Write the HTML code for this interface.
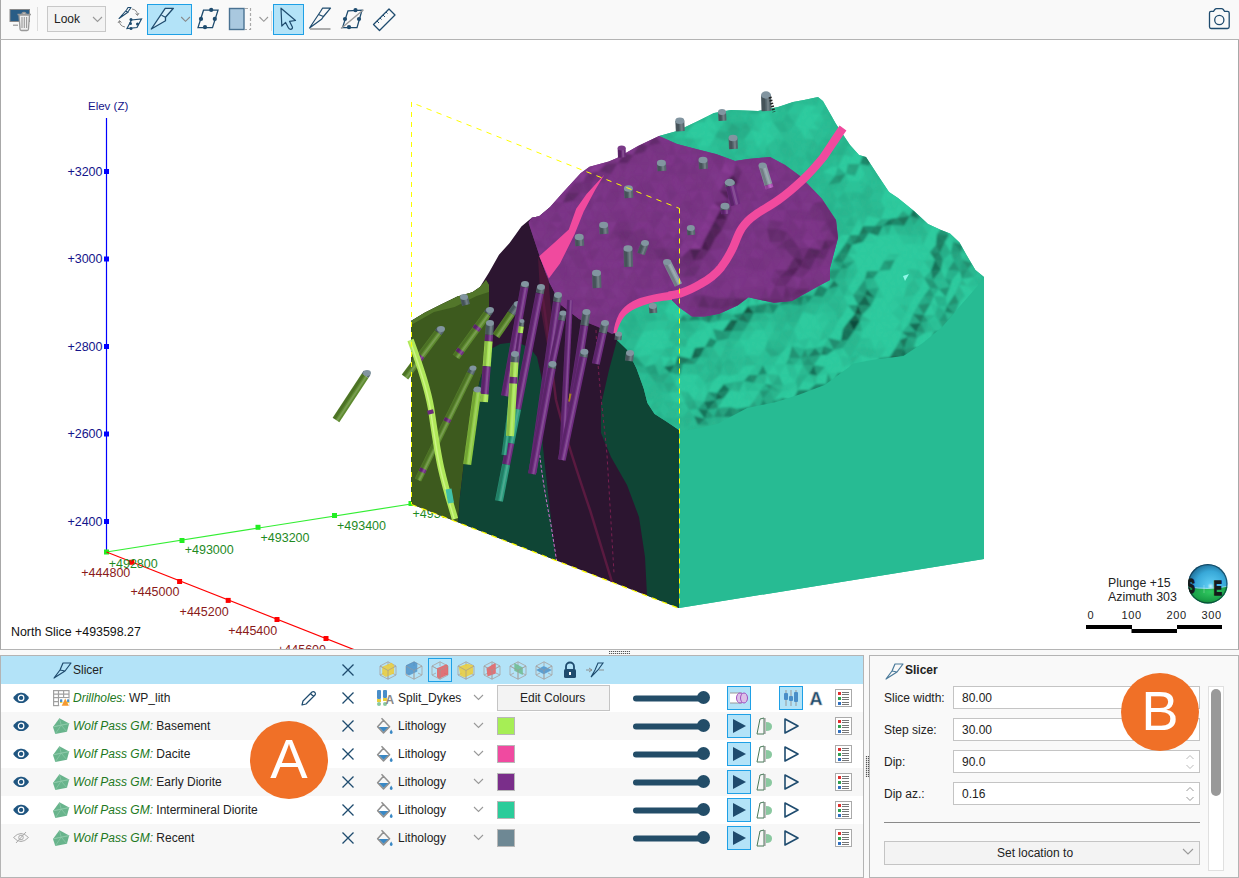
<!DOCTYPE html>
<html><head><meta charset="utf-8">
<style>
*{box-sizing:border-box;margin:0;padding:0}
html,body{width:1239px;height:878px;overflow:hidden;background:#f9f9f9;font-family:"Liberation Sans",sans-serif;font-size:12px;color:#222}
.abs{position:absolute}
svg{display:block}
.t{position:absolute;white-space:nowrap;line-height:1}
.it{font-style:italic;color:#217821}
</style></head><body>
<div class="abs" style="left:0;top:0;width:1239px;height:39px;background:#f9f9f9;border-left:1px solid #a8a8a8"></div>
<div class="abs" style="left:0;top:39px;width:1239px;height:1px;background:#b4b4b4"></div>
<svg class="abs" style="left:8px;top:8px" width="25" height="25" viewBox="8 8 25 25"><rect x="10" y="9.5" width="19.5" height="12" fill="#2a5d86" stroke="#8a8a8a" stroke-width="1"/><rect x="13" y="24.5" width="5" height="1.5" fill="#aaa"/><path d="M17.5,14.5 H31 M19,15 L20,29 Q20,30.5 21.5,30.5 H27 Q28.5,30.5 28.5,29 L29.5,15 Z M22,14.5 Q22,12.5 24,12.5 Q26,12.5 26,14.5" fill="#eee" stroke="#999" stroke-width="1.3"/><path d="M22,17 V28 M24.3,17 V28 M26.6,17 V28" stroke="#999" stroke-width="1.1"/></svg>
<div class="abs" style="left:37px;top:7px;width:1px;height:24px;background:#dcdcdc"></div>
<div class="abs" style="left:47px;top:6px;width:59px;height:26px;background:#f3f3f3;border:1px solid #c8c8c8"></div>
<div class="t" style="left:54px;top:12.5px;font-size:12px;color:#222">Look</div>
<svg class="abs" style="left:90px;top:14px" width="14" height="10" viewBox="90 14 14 10"><path d="M93,17 L97.5,21.5 L102,17" fill="none" stroke="#999" stroke-width="1.1"/></svg>
<svg class="abs" style="left:116px;top:5px" width="28" height="28" viewBox="116 5 28 28"><path d="M119,18.5 L126.5,10 L128,7.5 L131,7.5 L127.5,12.5 Z M125.5,11 L128.5,12.5" fill="none" stroke="#1e4b6e" stroke-width="1.1" stroke-linejoin="round"/><path d="M127,28.5 L131.5,20 L141.5,19 L137,27.5 Z" fill="none" stroke="#1e4b6e" stroke-width="1.2"/><circle cx="131" cy="19.5" r="1.5" fill="#1e4b6e"/><circle cx="130.5" cy="23.5" r="1.5" fill="#1e4b6e"/><circle cx="137.5" cy="24" r="1.5" fill="#1e4b6e"/><circle cx="131" cy="28.5" r="1.5" fill="#1e4b6e"/><path d="M132,9 Q137,9.5 137.5,15 M135.5,13.5 L137.5,15.5 L139,13 M125,27 Q119.5,26 119.5,21 M118,23 L119.5,20.5 L121.5,22.5" fill="none" stroke="#888" stroke-width="1"/></svg>
<div class="abs" style="left:147px;top:4px;width:45px;height:31px;background:#b3e3f8;border:1px solid #1ea0e6"></div>
<svg class="abs" style="left:148px;top:5px" width="43" height="29" viewBox="148 5 43 29"><path d="M151.3,29 L165.2,8.3 L173.4,8.3 L165.5,17.3 L165.5,20.8 Z" fill="#d4eefa" stroke="#1e4b6e" stroke-width="1.3" stroke-linejoin="round"/><path d="M161.5,15.3 L165.5,17.3" stroke="#1e4b6e" stroke-width="1.2"/><path d="M181.2,17 L185.5,21.3 L189.9,17" fill="none" stroke="#888" stroke-width="1.1"/></svg>
<svg class="abs" style="left:194px;top:5px" width="28" height="28" viewBox="194 5 28 28"><path d="M198,27.6 L203.5,10.2 L218,10.2 L212.5,27.6 Z" fill="none" stroke="#1e4b6e" stroke-width="1.3"/><circle cx="211.2" cy="9.9" r="2.1" fill="#1e4b6e"/><circle cx="201" cy="18.9" r="2.1" fill="#1e4b6e"/><circle cx="214.8" cy="18.9" r="2.1" fill="#1e4b6e"/><circle cx="205" cy="27.2" r="2.1" fill="#1e4b6e"/></svg>
<svg class="abs" style="left:226px;top:6px" width="46" height="28" viewBox="226 6 46 28"><rect x="229.5" y="8.5" width="14.5" height="21" fill="#a9c8df" stroke="#4a7292" stroke-width="1.4"/><path d="M245,8.5 H250.5 V29.5 H245" fill="none" stroke="#aaa" stroke-width="1.2" stroke-dasharray="3,2"/><path d="M259.5,17 L263.8,21.3 L268,17" fill="none" stroke="#999" stroke-width="1.1"/></svg>
<div class="abs" style="left:271px;top:11px;width:1px;height:20px;background:#dcdcdc"></div>
<div class="abs" style="left:273px;top:4px;width:31px;height:31px;background:#b3e3f8;border:1px solid #1ea0e6"></div>
<svg class="abs" style="left:274px;top:5px" width="29" height="29" viewBox="274 5 29 29"><path d="M281,8.2 L295.5,20.5 L289.5,21.3 L292.5,27.3 Q292.5,29.3 290.5,29.3 Q289,29.3 288.2,27.5 L285.6,22.4 L281.8,26 Z" fill="none" stroke="#1e4b6e" stroke-width="1.2" stroke-linejoin="round"/></svg>
<svg class="abs" style="left:306px;top:5px" width="28" height="28" viewBox="306 5 28 28"><path d="M309.5,28 L320.5,11.5 L322.5,8.2 L330.5,8.2 L323.5,16.5 L321.5,19.3 Z M318.5,14.5 L323.5,16.5" fill="none" stroke="#1e4b6e" stroke-width="1.2" stroke-linejoin="round"/><path d="M310,29 H330.5" stroke="#9a9a9a" stroke-width="1.6"/></svg>
<svg class="abs" style="left:338px;top:5px" width="30" height="28" viewBox="338 5 30 28"><path d="M342.5,27.6 L348,10.8 L362,10.2 L357,27.6 Z" fill="none" stroke="#1e4b6e" stroke-width="1.3"/><circle cx="355.5" cy="10.2" r="2.1" fill="#1e4b6e"/><circle cx="345" cy="19" r="2.1" fill="#1e4b6e"/><circle cx="359" cy="19" r="2.1" fill="#1e4b6e"/><circle cx="349" cy="27.2" r="2.1" fill="#1e4b6e"/><path d="M341,28.5 L363.5,9.8" stroke="#9a9a9a" stroke-width="1.4"/></svg>
<svg class="abs" style="left:370px;top:5px" width="28" height="28" viewBox="370 5 28 28"><path d="M373.5,24.5 L389,9 L395,15 L379.5,30.5 Z" fill="none" stroke="#1e4b6e" stroke-width="1.3" stroke-linejoin="round"/><path d="M377,21 L379,23 M380,18 L381.5,19.5 M383,15 L385,17 M386,12 L387.5,13.5" stroke="#1e4b6e" stroke-width="1"/></svg>
<svg class="abs" style="left:1205px;top:6px" width="28" height="28" viewBox="1205 6 28 28"><path d="M1209.5,13 Q1209.5,11.3 1211,11.3 H1213.5 L1214.8,9.5 Q1215.5,8.7 1216.5,8.7 H1221.5 Q1222.5,8.7 1223.3,9.5 L1224.6,11.3 H1227.5 Q1229.2,11.3 1229.2,13 V26.7 Q1229.2,28.5 1227.5,28.5 H1211 Q1209.5,28.5 1209.5,26.7 Z" fill="none" stroke="#1e4b6e" stroke-width="1.3"/><circle cx="1219.3" cy="20" r="4.6" fill="none" stroke="#1e4b6e" stroke-width="1.3"/></svg><div class="abs" style="left:0;top:40px;width:1239px;height:610px;background:#fff;border-left:1px solid #a8a8a8;border-right:1px solid #a8a8a8;border-bottom:1px solid #b4b4b4;overflow:hidden">
<svg width="1239" height="610" viewBox="0 40 1239 610" style="position:absolute;left:-1px;top:0">
<g font-family="Liberation Sans" >
<path d="M106.5,118 L106.5,552" fill="none" stroke="#0000ff" stroke-width="1.2" />
<rect x="104" y="169.0" width="5" height="5" fill="#0000ff"/>
<rect x="104" y="256.5" width="5" height="5" fill="#0000ff"/>
<rect x="104" y="344.0" width="5" height="5" fill="#0000ff"/>
<rect x="104" y="431.5" width="5" height="5" fill="#0000ff"/>
<rect x="104" y="519.0" width="5" height="5" fill="#0000ff"/>
<text x="102.5" y="175.5" fill="#14148a" font-size="12.5" text-anchor="end">+3200</text>
<text x="102.5" y="263" fill="#14148a" font-size="12.5" text-anchor="end">+3000</text>
<text x="102.5" y="350.5" fill="#14148a" font-size="12.5" text-anchor="end">+2800</text>
<text x="102.5" y="438" fill="#14148a" font-size="12.5" text-anchor="end">+2600</text>
<text x="102.5" y="525.5" fill="#14148a" font-size="12.5" text-anchor="end">+2400</text>
<text x="88" y="110" fill="#14148a" font-size="11.5" >Elev (Z)</text>
<path d="M106.5,552 L411,504" fill="none" stroke="#33ee33" stroke-width="1.2" />
<rect x="104.0" y="549.5" width="5" height="5" fill="#22ee22"/>
<rect x="179.5" y="538.0" width="5" height="5" fill="#22ee22"/>
<rect x="255.5" y="524.8" width="5" height="5" fill="#22ee22"/>
<rect x="332.0" y="513.0" width="5" height="5" fill="#22ee22"/>
<rect x="408.5" y="501.0" width="5" height="5" fill="#22ee22"/>
<path d="M106.5,552 L355,650" fill="none" stroke="#ff0000" stroke-width="1.2" />
<rect x="129.2" y="559.8" width="5" height="5" fill="#ff0000"/>
<rect x="177.1" y="579.0" width="5" height="5" fill="#ff0000"/>
<rect x="225.7" y="597.9" width="5" height="5" fill="#ff0000"/>
<rect x="274.5" y="617.0" width="5" height="5" fill="#ff0000"/>
<rect x="323.5" y="636.0" width="5" height="5" fill="#ff0000"/>
<text x="108.7" y="567.5" fill="#1f8a1f" font-size="12.5" >+492800</text>
<text x="184.7" y="554.3" fill="#1f8a1f" font-size="12.5" >+493000</text>
<text x="260.5" y="542" fill="#1f8a1f" font-size="12.5" >+493200</text>
<text x="337" y="530" fill="#1f8a1f" font-size="12.5" >+493400</text>
<text x="412.5" y="518" fill="#1f8a1f" font-size="12.5" >+493600</text>
<text x="81.3" y="577" fill="#8a1a1a" font-size="12.5" >+444800</text>
<text x="130.4" y="596.3" fill="#8a1a1a" font-size="12.5" >+445000</text>
<text x="179.6" y="616.3" fill="#8a1a1a" font-size="12.5" >+445200</text>
<text x="228.2" y="635" fill="#8a1a1a" font-size="12.5" >+445400</text>
<text x="277" y="654" fill="#8a1a1a" font-size="12.5" >+445600</text>
</g>
<polygon points="411,321 424.6,312.8 441,304.6 457.4,296.4 472.4,292.3 480,287 489,272.5 499,254.7 509.6,243 521.4,226.6 531.8,217.7 539.2,216.2 549.6,207.4 600,240 679,290 679,608 411,504" fill="#2c1530" />
<polygon points="411,321 424.6,312.8 441,304.6 457.4,296.4 472.4,292.3 480,287 486,280 489,285 489,350 480,380 469,425.6 464,462 460,496.6 458,522.2 411,504" fill="#3d5a1e" />
<polygon points="411,321 424.6,312.8 441,304.6 457.4,296.4 472.4,292.3 480,287 486,280 489,285 489,292 476.5,296 454.7,307 434,312 411,325" fill="#52762a" />
<polygon points="489,350 500,344 517,342 530,348 537,357 541,375 544.5,396 543,420 542.6,442.5 544.5,462 550,510 556,560.3 458,522.2 460,496.6 464,462 469,425.6 480,380 486,360" fill="#0f4535" />
<polygon points="617,340 609,370 601,405 601,433 611,457 627,485 639,517 645,557 647,595.6 679,608 679,430 665.6,421 654.6,414 647.4,403 643.7,388.4 636.4,368.3 627.3,350" fill="#0f4535" />
<polygon points="659,136 677,131 698,121 714,113 731,110 758,111 778,107 793,102 804,100 818,97 823,101 836,124 850,145 859,155 866,157 877,174 889,192 898,198 914,211 928,224 941,230 950,233.5 959.5,242.6 968.6,258.6 975.4,270 984,277 984,559 679,608 679,430 665.6,421 654.6,414 647.4,403 643.7,388.4 636.4,368.3 627.3,350 617,340 614,325 614,313 626,300 620,250" fill="#2bbf95" />
<defs><clipPath id="tc"><polygon points="659,136 677,131 698,121 714,113 731,110 758,111 778,107 793,102 804,100 818,97 823,101 836,124 850,145 859,155 866,157 877,174 889,192 898,198 914,211 928,224 941,230 950,233.5 959.5,242.6 968.6,258.6 975.4,270 984,277 984,559 679,608 679,430 665.6,421 654.6,414 647.4,403 643.7,388.4 636.4,368.3 627.3,350 617,340 614,325 614,313 626,300 620,250"/></clipPath></defs>
<g clip-path="url(#tc)">
<defs><filter id="mb" x="-5%" y="-5%" width="110%" height="110%"><feGaussianBlur stdDeviation="1.3"/></filter></defs><g filter="url(#mb)">
<path d="M790,94 795,103 784,104" fill="#29b68f"/>
<path d="M790,94 800,96 795,103" fill="#2ab991"/>
<path d="M800,96 806,105 795,103" fill="#2abc93"/>
<path d="M800,96 810,95 806,105" fill="#2abc93"/>
<path d="M810,95 816,106 806,105" fill="#2abb93"/>
<path d="M810,95 820,97 816,106" fill="#29b890"/>
<path d="M820,97 826,105 816,106" fill="#2bc096"/>
<path d="M716,106 720,113 708,114" fill="#28b38c"/>
<path d="M716,106 724,106 720,113" fill="#29b790"/>
<path d="M724,106 730,114 720,113" fill="#2bbe94"/>
<path d="M724,106 736,103 730,114" fill="#29b68e"/>
<path d="M736,103 739,113 730,114" fill="#2ab991"/>
<path d="M736,103 745,106 739,113" fill="#29b68e"/>
<path d="M745,106 749,114 739,113" fill="#2ab991"/>
<path d="M745,106 755,104 749,114" fill="#2ab991"/>
<path d="M755,104 759,114 749,114" fill="#28b18a"/>
<path d="M755,104 763,104 759,114" fill="#29b58e"/>
<path d="M763,104 769,112 759,114" fill="#2bc096"/>
<path d="M763,104 773,103 769,112" fill="#29b890"/>
<path d="M773,103 779,114 769,112" fill="#2cc499"/>
<path d="M773,103 784,104 779,114" fill="#29b68f"/>
<path d="M784,104 787,113 779,114" fill="#2abb92"/>
<path d="M784,104 795,103 787,113" fill="#28b38c"/>
<path d="M795,103 799,115 787,113" fill="#2cc399"/>
<path d="M795,103 806,105 799,115" fill="#2cc298"/>
<path d="M806,105 811,113 799,115" fill="#2ecb9f"/>
<path d="M806,105 816,106 811,113" fill="#2ecb9f"/>
<path d="M816,106 821,114 811,113" fill="#2cc49a"/>
<path d="M816,106 826,105 821,114" fill="#2cc398"/>
<path d="M826,105 828,113 821,114" fill="#29b68f"/>
<path d="M826,105 832,105 828,113" fill="#2bbf96"/>
<path d="M832,105 837,114 828,113" fill="#2abd94"/>
<path d="M690,113 695,123 685,120" fill="#28b08a"/>
<path d="M690,113 697,112 695,123" fill="#29b48d"/>
<path d="M697,112 705,122 695,123" fill="#29b890"/>
<path d="M697,112 708,114 705,122" fill="#2ab991"/>
<path d="M708,114 714,122 705,122" fill="#2dc99d"/>
<path d="M708,114 720,113 714,122" fill="#2abd94"/>
<path d="M720,113 726,120 714,122" fill="#2bc096"/>
<path d="M720,113 730,114 726,120" fill="#29b68e"/>
<path d="M730,114 732,123 726,120" fill="#29b890"/>
<path d="M730,114 739,113 732,123" fill="#2abc93"/>
<path d="M739,113 746,122 732,123" fill="#2ab991"/>
<path d="M739,113 749,114 746,122" fill="#2bbe95"/>
<path d="M749,114 754,123 746,122" fill="#29b890"/>
<path d="M749,114 759,114 754,123" fill="#2bc097"/>
<path d="M759,114 763,121 754,123" fill="#2cc399"/>
<path d="M759,114 769,112 763,121" fill="#2eca9e"/>
<path d="M769,112 773,122 763,121" fill="#2cc59a"/>
<path d="M769,112 779,114 773,122" fill="#2abc93"/>
<path d="M779,114 783,121 773,122" fill="#2abb92"/>
<path d="M779,114 787,113 783,121" fill="#2abb92"/>
<path d="M787,113 795,124 783,121" fill="#28b28c"/>
<path d="M787,113 799,115 795,124" fill="#2bbd94"/>
<path d="M799,115 803,123 795,124" fill="#2ecb9f"/>
<path d="M799,115 811,113 803,123" fill="#2ecb9f"/>
<path d="M811,113 814,123 803,123" fill="#2ecb9f"/>
<path d="M811,113 821,114 814,123" fill="#2ecb9f"/>
<path d="M821,114 824,121 814,123" fill="#2cc59a"/>
<path d="M821,114 828,113 824,121" fill="#2abb93"/>
<path d="M828,113 833,120 824,121" fill="#2ab991"/>
<path d="M828,113 837,114 833,120" fill="#29b58e"/>
<path d="M837,114 844,121 833,120" fill="#2abb93"/>
<path d="M676,121 679,130 667,130" fill="#28b28b"/>
<path d="M676,121 685,120 679,130" fill="#29b78f"/>
<path d="M685,120 688,131 679,130" fill="#28b38d"/>
<path d="M685,120 695,123 688,131" fill="#29b48d"/>
<path d="M695,123 701,130 688,131" fill="#2ecb9f"/>
<path d="M695,123 705,122 701,130" fill="#2ecb9f"/>
<path d="M705,122 709,129 701,130" fill="#2ecb9f"/>
<path d="M705,122 714,122 709,129" fill="#2ecb9f"/>
<path d="M714,122 718,131 709,129" fill="#2ecb9f"/>
<path d="M714,122 726,120 718,131" fill="#2cc59a"/>
<path d="M726,120 727,132 718,131" fill="#2ab991"/>
<path d="M726,120 732,123 727,132" fill="#28b28b"/>
<path d="M732,123 741,129 727,132" fill="#25a682"/>
<path d="M732,123 746,122 741,129" fill="#28b18b"/>
<path d="M746,122 751,130 741,129" fill="#26aa85"/>
<path d="M746,122 754,123 751,130" fill="#29b890"/>
<path d="M754,123 760,132 751,130" fill="#2bbe95"/>
<path d="M754,123 763,121 760,132" fill="#2cc49a"/>
<path d="M763,121 768,131 760,132" fill="#2ecb9f"/>
<path d="M763,121 773,122 768,131" fill="#2ecb9f"/>
<path d="M773,122 780,132 768,131" fill="#2dc69b"/>
<path d="M773,122 783,121 780,132" fill="#28b28b"/>
<path d="M783,121 788,132 780,132" fill="#28b18a"/>
<path d="M783,121 795,124 788,132" fill="#29b890"/>
<path d="M795,124 801,131 788,132" fill="#2bbf96"/>
<path d="M795,124 803,123 801,131" fill="#2ecb9f"/>
<path d="M803,123 809,129 801,131" fill="#2ecb9f"/>
<path d="M803,123 814,123 809,129" fill="#2ecb9f"/>
<path d="M814,123 819,130 809,129" fill="#2ecb9f"/>
<path d="M814,123 824,121 819,130" fill="#2bc096"/>
<path d="M824,121 830,131 819,130" fill="#2abc94"/>
<path d="M824,121 833,120 830,131" fill="#2abc93"/>
<path d="M833,120 839,129 830,131" fill="#29b890"/>
<path d="M833,120 844,121 839,129" fill="#29b790"/>
<path d="M844,121 850,131 839,129" fill="#2bbd94"/>
<path d="M659,131 665,140 654,140" fill="#29b58e"/>
<path d="M659,131 667,130 665,140" fill="#2ab991"/>
<path d="M667,130 674,138 665,140" fill="#28b28b"/>
<path d="M667,130 679,130 674,138" fill="#2ab991"/>
<path d="M679,130 684,138 674,138" fill="#2cc298"/>
<path d="M679,130 688,131 684,138" fill="#2bbe95"/>
<path d="M688,131 694,139 684,138" fill="#2dc89d"/>
<path d="M688,131 701,130 694,139" fill="#2ecb9f"/>
<path d="M701,130 703,138 694,139" fill="#2ecb9f"/>
<path d="M701,130 709,129 703,138" fill="#2ecb9f"/>
<path d="M709,129 715,137 703,138" fill="#2ecb9f"/>
<path d="M709,129 718,131 715,137" fill="#2cc59a"/>
<path d="M718,131 725,141 715,137" fill="#27ac87"/>
<path d="M718,131 727,132 725,141" fill="#27ac87"/>
<path d="M727,132 736,139 725,141" fill="#27ae88"/>
<path d="M727,132 741,129 736,139" fill="#26a985"/>
<path d="M741,129 744,140 736,139" fill="#28b08a"/>
<path d="M741,129 751,130 744,140" fill="#27af89"/>
<path d="M751,130 755,141 744,140" fill="#2cc49a"/>
<path d="M751,130 760,132 755,141" fill="#2dca9e"/>
<path d="M760,132 765,138 755,141" fill="#2ecb9f"/>
<path d="M760,132 768,131 765,138" fill="#2ecb9f"/>
<path d="M768,131 775,139 765,138" fill="#2ecb9f"/>
<path d="M768,131 780,132 775,139" fill="#2dc69b"/>
<path d="M780,132 784,140 775,139" fill="#2cc298"/>
<path d="M780,132 788,132 784,140" fill="#2abb93"/>
<path d="M788,132 792,140 784,140" fill="#2abc93"/>
<path d="M788,132 801,131 792,140" fill="#2bbd94"/>
<path d="M801,131 805,139 792,140" fill="#2bbe94"/>
<path d="M801,131 809,129 805,139" fill="#2ecb9f"/>
<path d="M809,129 814,139 805,139" fill="#2dc69b"/>
<path d="M809,129 819,130 814,139" fill="#2abd94"/>
<path d="M819,130 823,139 814,139" fill="#2bbd94"/>
<path d="M819,130 830,131 823,139" fill="#2bc096"/>
<path d="M830,131 832,139 823,139" fill="#2ab991"/>
<path d="M830,131 839,129 832,139" fill="#2bbd94"/>
<path d="M839,129 845,139 832,139" fill="#28b48d"/>
<path d="M839,129 850,131 845,139" fill="#2abc93"/>
<path d="M850,131 854,141 845,139" fill="#28b28c"/>
<path d="M654,140 658,149 650,148" fill="#29b58e"/>
<path d="M654,140 665,140 658,149" fill="#28b38c"/>
<path d="M665,140 670,147 658,149" fill="#28b28b"/>
<path d="M665,140 674,138 670,147" fill="#2abc93"/>
<path d="M674,138 678,148 670,147" fill="#29b78f"/>
<path d="M674,138 684,138 678,148" fill="#2ab991"/>
<path d="M684,138 689,147 678,148" fill="#2abb92"/>
<path d="M684,138 694,139 689,147" fill="#29b58e"/>
<path d="M694,139 697,147 689,147" fill="#2abc93"/>
<path d="M694,139 703,138 697,147" fill="#2bc197"/>
<path d="M703,138 710,146 697,147" fill="#2ecb9f"/>
<path d="M703,138 715,137 710,146" fill="#2dca9e"/>
<path d="M715,137 719,147 710,146" fill="#2bbd94"/>
<path d="M715,137 725,141 719,147" fill="#2abc93"/>
<path d="M725,141 728,147 719,147" fill="#2abc93"/>
<path d="M725,141 736,139 728,147" fill="#2abb92"/>
<path d="M736,139 739,147 728,147" fill="#29b58e"/>
<path d="M736,139 744,140 739,147" fill="#29b78f"/>
<path d="M744,140 747,146 739,147" fill="#29b890"/>
<path d="M744,140 755,141 747,146" fill="#2bbe95"/>
<path d="M755,141 758,148 747,146" fill="#2bc197"/>
<path d="M755,141 765,138 758,148" fill="#2ecb9f"/>
<path d="M765,138 767,146 758,148" fill="#2cc49a"/>
<path d="M765,138 775,139 767,146" fill="#2dca9e"/>
<path d="M775,139 779,148 767,146" fill="#2abd94"/>
<path d="M775,139 784,140 779,148" fill="#2abc93"/>
<path d="M784,140 790,146 779,148" fill="#28b48d"/>
<path d="M784,140 792,140 790,146" fill="#2abb92"/>
<path d="M792,140 799,147 790,146" fill="#2abb93"/>
<path d="M792,140 805,139 799,147" fill="#2abc93"/>
<path d="M805,139 807,150 799,147" fill="#2bbe95"/>
<path d="M805,139 814,139 807,150" fill="#2abb92"/>
<path d="M814,139 818,146 807,150" fill="#29b68f"/>
<path d="M814,139 823,139 818,146" fill="#2bbf96"/>
<path d="M823,139 829,147 818,146" fill="#29b78f"/>
<path d="M823,139 832,139 829,147" fill="#28b48d"/>
<path d="M832,139 839,147 829,147" fill="#29b68f"/>
<path d="M832,139 845,139 839,147" fill="#2ab991"/>
<path d="M845,139 847,146 839,147" fill="#28b28b"/>
<path d="M845,139 854,141 847,146" fill="#28b38c"/>
<path d="M854,141 860,147 847,146" fill="#28b28c"/>
<path d="M650,148 655,158 646,155" fill="#2ab991"/>
<path d="M650,148 658,149 655,158" fill="#29b78f"/>
<path d="M658,149 665,157 655,158" fill="#2abc94"/>
<path d="M658,149 670,147 665,157" fill="#29b48d"/>
<path d="M670,147 676,156 665,157" fill="#2aba92"/>
<path d="M670,147 678,148 676,156" fill="#28b48d"/>
<path d="M678,148 684,156 676,156" fill="#29b58d"/>
<path d="M678,148 689,147 684,156" fill="#28b28b"/>
<path d="M689,147 695,157 684,156" fill="#2ab991"/>
<path d="M689,147 697,147 695,157" fill="#2abb93"/>
<path d="M697,147 703,155 695,157" fill="#2abc93"/>
<path d="M697,147 710,146 703,155" fill="#2cc59a"/>
<path d="M710,146 715,157 703,155" fill="#2bc197"/>
<path d="M710,146 719,147 715,157" fill="#2cc197"/>
<path d="M719,147 725,156 715,157" fill="#2abc93"/>
<path d="M719,147 728,147 725,156" fill="#2ab991"/>
<path d="M728,147 734,155 725,156" fill="#29b890"/>
<path d="M728,147 739,147 734,155" fill="#2abc94"/>
<path d="M739,147 745,155 734,155" fill="#29b68f"/>
<path d="M739,147 747,146 745,155" fill="#29b68f"/>
<path d="M747,146 754,158 745,155" fill="#2bc096"/>
<path d="M747,146 758,148 754,158" fill="#2bc197"/>
<path d="M758,148 765,155 754,158" fill="#2abc94"/>
<path d="M758,148 767,146 765,155" fill="#2cc298"/>
<path d="M767,146 773,158 765,155" fill="#29b58d"/>
<path d="M767,146 779,148 773,158" fill="#2bbe95"/>
<path d="M779,148 785,158 773,158" fill="#2aba92"/>
<path d="M779,148 790,146 785,158" fill="#29b68f"/>
<path d="M790,146 795,156 785,158" fill="#29b68e"/>
<path d="M790,146 799,147 795,156" fill="#2abb92"/>
<path d="M799,147 806,158 795,156" fill="#2bbe95"/>
<path d="M799,147 807,150 806,158" fill="#2abc93"/>
<path d="M807,150 813,156 806,158" fill="#28b38c"/>
<path d="M807,150 818,146 813,156" fill="#2aba91"/>
<path d="M818,146 822,156 813,156" fill="#29b68f"/>
<path d="M818,146 829,147 822,156" fill="#29b48d"/>
<path d="M829,147 836,155 822,156" fill="#27b08a"/>
<path d="M829,147 839,147 836,155" fill="#29b58e"/>
<path d="M839,147 844,155 836,155" fill="#28b08a"/>
<path d="M839,147 847,146 844,155" fill="#28b28b"/>
<path d="M847,146 852,157 844,155" fill="#2abb93"/>
<path d="M847,146 860,147 852,157" fill="#2bc197"/>
<path d="M860,147 863,155 852,157" fill="#2ecb9f"/>
<path d="M646,155 650,164 640,166" fill="#2ab991"/>
<path d="M646,155 655,158 650,164" fill="#2aba92"/>
<path d="M655,158 659,165 650,164" fill="#2abc93"/>
<path d="M655,158 665,157 659,165" fill="#2bbd94"/>
<path d="M665,157 670,164 659,165" fill="#29b58e"/>
<path d="M665,157 676,156 670,164" fill="#2bbd94"/>
<path d="M676,156 678,165 670,164" fill="#28b38c"/>
<path d="M676,156 684,156 678,165" fill="#29b890"/>
<path d="M684,156 687,166 678,165" fill="#2abc93"/>
<path d="M684,156 695,157 687,166" fill="#2bbe95"/>
<path d="M695,157 700,165 687,166" fill="#29b78f"/>
<path d="M695,157 703,155 700,165" fill="#2abc93"/>
<path d="M703,155 710,166 700,165" fill="#2abc93"/>
<path d="M703,155 715,157 710,166" fill="#28b48d"/>
<path d="M715,157 718,165 710,166" fill="#2abc93"/>
<path d="M715,157 725,156 718,165" fill="#2bbd94"/>
<path d="M725,156 731,165 718,165" fill="#28b48d"/>
<path d="M725,156 734,155 731,165" fill="#29b68f"/>
<path d="M734,155 739,164 731,165" fill="#29b890"/>
<path d="M734,155 745,155 739,164" fill="#2bbe95"/>
<path d="M745,155 748,164 739,164" fill="#2bbe95"/>
<path d="M745,155 754,158 748,164" fill="#29b58d"/>
<path d="M754,158 761,166 748,164" fill="#29b790"/>
<path d="M754,158 765,155 761,166" fill="#28b48d"/>
<path d="M765,155 770,167 761,166" fill="#28b38c"/>
<path d="M765,155 773,158 770,167" fill="#29b58e"/>
<path d="M773,158 779,167 770,167" fill="#2bbe95"/>
<path d="M773,158 785,158 779,167" fill="#2bbe95"/>
<path d="M785,158 789,165 779,167" fill="#29b58d"/>
<path d="M785,158 795,156 789,165" fill="#2aba92"/>
<path d="M795,156 801,167 789,165" fill="#2aba92"/>
<path d="M795,156 806,158 801,167" fill="#29b890"/>
<path d="M806,158 811,165 801,167" fill="#2bbd94"/>
<path d="M806,158 813,156 811,165" fill="#28b38c"/>
<path d="M813,156 820,165 811,165" fill="#29b58e"/>
<path d="M813,156 822,156 820,165" fill="#28b38c"/>
<path d="M822,156 831,167 820,165" fill="#2abd94"/>
<path d="M822,156 836,155 831,167" fill="#2aba91"/>
<path d="M836,155 838,167 831,167" fill="#2bbd94"/>
<path d="M836,155 844,155 838,167" fill="#29b78f"/>
<path d="M844,155 848,164 838,167" fill="#2ecb9f"/>
<path d="M844,155 852,157 848,164" fill="#2ecb9f"/>
<path d="M852,157 860,164 848,164" fill="#2ecb9f"/>
<path d="M852,157 863,155 860,164" fill="#2ecb9f"/>
<path d="M863,155 869,166 860,164" fill="#1e876a"/>
<path d="M863,155 873,157 869,166" fill="#1c7c61"/>
<path d="M873,157 877,166 869,166" fill="#29b890"/>
<path d="M640,166 650,164 644,173" fill="#28b48d"/>
<path d="M650,164 652,173 644,173" fill="#2abd94"/>
<path d="M650,164 659,165 652,173" fill="#29b68f"/>
<path d="M659,165 665,174 652,173" fill="#29b890"/>
<path d="M659,165 670,164 665,174" fill="#2bbd94"/>
<path d="M670,164 676,175 665,174" fill="#28b28b"/>
<path d="M670,164 678,165 676,175" fill="#29b68f"/>
<path d="M678,165 686,172 676,175" fill="#2abd94"/>
<path d="M678,165 687,166 686,172" fill="#29b790"/>
<path d="M687,166 693,172 686,172" fill="#2bbe95"/>
<path d="M687,166 700,165 693,172" fill="#2abb93"/>
<path d="M700,165 704,173 693,172" fill="#29b58e"/>
<path d="M700,165 710,166 704,173" fill="#2ab991"/>
<path d="M710,166 712,174 704,173" fill="#29b78f"/>
<path d="M710,166 718,165 712,174" fill="#2abb92"/>
<path d="M718,165 722,173 712,174" fill="#2abb93"/>
<path d="M718,165 731,165 722,173" fill="#2ab991"/>
<path d="M731,165 733,175 722,173" fill="#28b38c"/>
<path d="M731,165 739,164 733,175" fill="#2bbd94"/>
<path d="M739,164 744,173 733,175" fill="#29b48d"/>
<path d="M739,164 748,164 744,173" fill="#2aba92"/>
<path d="M748,164 752,174 744,173" fill="#2abd94"/>
<path d="M748,164 761,166 752,174" fill="#29b890"/>
<path d="M761,166 765,175 752,174" fill="#28b38c"/>
<path d="M761,166 770,167 765,175" fill="#2ab991"/>
<path d="M770,167 776,175 765,175" fill="#28b38c"/>
<path d="M770,167 779,167 776,175" fill="#29b48d"/>
<path d="M779,167 783,173 776,175" fill="#29b58e"/>
<path d="M779,167 789,165 783,173" fill="#29b48d"/>
<path d="M789,165 795,175 783,173" fill="#2aba91"/>
<path d="M789,165 801,167 795,175" fill="#2abc93"/>
<path d="M801,167 804,175 795,175" fill="#29b890"/>
<path d="M801,167 811,165 804,175" fill="#2bbe95"/>
<path d="M811,165 814,173 804,175" fill="#28b38c"/>
<path d="M811,165 820,165 814,173" fill="#29b68f"/>
<path d="M820,165 823,172 814,173" fill="#29b68f"/>
<path d="M820,165 831,167 823,172" fill="#2ab991"/>
<path d="M831,167 835,176 823,172" fill="#2ecb9f"/>
<path d="M831,167 838,167 835,176" fill="#2ecb9f"/>
<path d="M838,167 846,174 835,176" fill="#27ae89"/>
<path d="M838,167 848,164 846,174" fill="#2ecb9f"/>
<path d="M848,164 855,176 846,174" fill="#25a682"/>
<path d="M848,164 860,164 855,176" fill="#25a37f"/>
<path d="M860,164 865,174 855,176" fill="#2ecb9f"/>
<path d="M860,164 869,166 865,174" fill="#2bbd94"/>
<path d="M869,166 874,174 865,174" fill="#2bbe94"/>
<path d="M869,166 877,166 874,174" fill="#29b68f"/>
<path d="M877,166 883,173 874,174" fill="#29b48d"/>
<path d="M644,173 651,181 640,181" fill="#2abb93"/>
<path d="M644,173 652,173 651,181" fill="#2abc94"/>
<path d="M652,173 659,184 651,181" fill="#2bbd94"/>
<path d="M652,173 665,174 659,184" fill="#2aba92"/>
<path d="M665,174 668,182 659,184" fill="#29b68e"/>
<path d="M665,174 676,175 668,182" fill="#28b28c"/>
<path d="M676,175 681,184 668,182" fill="#28b48d"/>
<path d="M676,175 686,172 681,184" fill="#2bbd94"/>
<path d="M686,172 688,182 681,184" fill="#29b78f"/>
<path d="M686,172 693,172 688,182" fill="#29b78f"/>
<path d="M693,172 698,181 688,182" fill="#29b78f"/>
<path d="M693,172 704,173 698,181" fill="#29b68f"/>
<path d="M704,173 708,185 698,181" fill="#29b58d"/>
<path d="M704,173 712,174 708,185" fill="#29b68e"/>
<path d="M712,174 717,182 708,185" fill="#29b890"/>
<path d="M712,174 722,173 717,182" fill="#29b890"/>
<path d="M722,173 728,181 717,182" fill="#28b38c"/>
<path d="M722,173 733,175 728,181" fill="#28b38d"/>
<path d="M733,175 739,184 728,181" fill="#28b28c"/>
<path d="M733,175 744,173 739,184" fill="#29b890"/>
<path d="M744,173 750,183 739,184" fill="#2aba92"/>
<path d="M744,173 752,174 750,183" fill="#2bbd94"/>
<path d="M752,174 760,181 750,183" fill="#29b78f"/>
<path d="M752,174 765,175 760,181" fill="#2aba92"/>
<path d="M765,175 768,185 760,181" fill="#2abc93"/>
<path d="M765,175 776,175 768,185" fill="#2ab991"/>
<path d="M776,175 777,182 768,185" fill="#2ab991"/>
<path d="M776,175 783,173 777,182" fill="#28b48d"/>
<path d="M783,173 789,182 777,182" fill="#2abb92"/>
<path d="M783,173 795,175 789,182" fill="#2abb93"/>
<path d="M795,175 799,181 789,182" fill="#29b68e"/>
<path d="M795,175 804,175 799,181" fill="#2abb92"/>
<path d="M804,175 808,185 799,181" fill="#29b58e"/>
<path d="M804,175 814,173 808,185" fill="#28b38d"/>
<path d="M814,173 818,184 808,185" fill="#29b68f"/>
<path d="M814,173 823,172 818,184" fill="#2ab991"/>
<path d="M823,172 828,185 818,184" fill="#29b890"/>
<path d="M823,172 835,176 828,185" fill="#2bbe95"/>
<path d="M835,176 840,183 828,185" fill="#229877"/>
<path d="M835,176 846,174 840,183" fill="#209171"/>
<path d="M846,174 848,181 840,183" fill="#2abd94"/>
<path d="M846,174 855,176 848,181" fill="#2dca9e"/>
<path d="M855,176 860,181 848,181" fill="#2ecb9f"/>
<path d="M855,176 865,174 860,181" fill="#2ecb9f"/>
<path d="M865,174 868,184 860,181" fill="#2cc398"/>
<path d="M865,174 874,174 868,184" fill="#2bbe95"/>
<path d="M874,174 880,181 868,184" fill="#2abc93"/>
<path d="M874,174 883,173 880,181" fill="#29b68f"/>
<path d="M883,173 891,183 880,181" fill="#28b38c"/>
<path d="M640,181 644,193 635,190" fill="#29b890"/>
<path d="M640,181 651,181 644,193" fill="#29b78f"/>
<path d="M651,181 655,190 644,193" fill="#2aba91"/>
<path d="M651,181 659,184 655,190" fill="#28b48d"/>
<path d="M659,184 666,193 655,190" fill="#2aba92"/>
<path d="M659,184 668,182 666,193" fill="#2abb93"/>
<path d="M668,182 673,190 666,193" fill="#29b68e"/>
<path d="M668,182 681,184 673,190" fill="#2aba92"/>
<path d="M681,184 683,190 673,190" fill="#29b68f"/>
<path d="M681,184 688,182 683,190" fill="#2abb92"/>
<path d="M688,182 696,191 683,190" fill="#29b890"/>
<path d="M688,182 698,181 696,191" fill="#2bbe95"/>
<path d="M698,181 705,190 696,191" fill="#29b890"/>
<path d="M698,181 708,185 705,190" fill="#28b38c"/>
<path d="M708,185 712,193 705,190" fill="#28b38c"/>
<path d="M708,185 717,182 712,193" fill="#2abb92"/>
<path d="M717,182 725,193 712,193" fill="#28b38c"/>
<path d="M717,182 728,181 725,193" fill="#2abc93"/>
<path d="M728,181 735,192 725,193" fill="#29b890"/>
<path d="M728,181 739,184 735,192" fill="#29b68f"/>
<path d="M739,184 745,190 735,192" fill="#29b790"/>
<path d="M739,184 750,183 745,190" fill="#2bbd94"/>
<path d="M750,183 754,191 745,190" fill="#2ab991"/>
<path d="M750,183 760,181 754,191" fill="#29b790"/>
<path d="M760,181 763,192 754,191" fill="#29b890"/>
<path d="M760,181 768,185 763,192" fill="#2aba91"/>
<path d="M768,185 773,191 763,192" fill="#29b890"/>
<path d="M768,185 777,182 773,191" fill="#2abb93"/>
<path d="M777,182 783,191 773,191" fill="#29b790"/>
<path d="M777,182 789,182 783,191" fill="#29b68e"/>
<path d="M789,182 793,192 783,191" fill="#28b48d"/>
<path d="M789,182 799,181 793,192" fill="#29b890"/>
<path d="M799,181 806,193 793,192" fill="#29b48d"/>
<path d="M799,181 808,185 806,193" fill="#29b58d"/>
<path d="M808,185 815,193 806,193" fill="#29b48d"/>
<path d="M808,185 818,184 815,193" fill="#29b78f"/>
<path d="M818,184 823,193 815,193" fill="#2bbe95"/>
<path d="M818,184 828,185 823,193" fill="#2ab991"/>
<path d="M828,185 833,190 823,193" fill="#29b68e"/>
<path d="M828,185 840,183 833,190" fill="#29b68e"/>
<path d="M840,183 844,192 833,190" fill="#2aba92"/>
<path d="M840,183 848,181 844,192" fill="#2aba92"/>
<path d="M848,181 853,192 844,192" fill="#2cc298"/>
<path d="M848,181 860,181 853,192" fill="#2cc398"/>
<path d="M860,181 863,193 853,192" fill="#2cc298"/>
<path d="M860,181 868,184 863,193" fill="#2abd94"/>
<path d="M868,184 874,191 863,193" fill="#29b58e"/>
<path d="M868,184 880,181 874,191" fill="#2bbe95"/>
<path d="M880,181 884,193 874,191" fill="#2abb92"/>
<path d="M880,181 891,183 884,193" fill="#2cc399"/>
<path d="M891,183 896,192 884,193" fill="#2ecb9f"/>
<path d="M635,190 639,199 628,200" fill="#28b48d"/>
<path d="M635,190 644,193 639,199" fill="#28b48d"/>
<path d="M644,193 647,199 639,199" fill="#2bbe95"/>
<path d="M644,193 655,190 647,199" fill="#28b48d"/>
<path d="M655,190 658,198 647,199" fill="#29b890"/>
<path d="M655,190 666,193 658,198" fill="#28b48d"/>
<path d="M666,193 669,202 658,198" fill="#29b68f"/>
<path d="M666,193 673,190 669,202" fill="#28b38c"/>
<path d="M673,190 679,201 669,202" fill="#29b78f"/>
<path d="M673,190 683,190 679,201" fill="#29b68e"/>
<path d="M683,190 690,201 679,201" fill="#2abb93"/>
<path d="M683,190 696,191 690,201" fill="#2bbf95"/>
<path d="M696,191 701,200 690,201" fill="#29b48d"/>
<path d="M696,191 705,190 701,200" fill="#29b890"/>
<path d="M705,190 710,199 701,200" fill="#2aba92"/>
<path d="M705,190 712,193 710,199" fill="#2bbf95"/>
<path d="M712,193 721,200 710,199" fill="#28b38c"/>
<path d="M712,193 725,193 721,200" fill="#2abb92"/>
<path d="M725,193 729,202 721,200" fill="#29b790"/>
<path d="M725,193 735,192 729,202" fill="#2ab991"/>
<path d="M735,192 738,199 729,202" fill="#2abb93"/>
<path d="M735,192 745,190 738,199" fill="#2abb92"/>
<path d="M745,190 750,200 738,199" fill="#29b78f"/>
<path d="M745,190 754,191 750,200" fill="#2abd94"/>
<path d="M754,191 757,198 750,200" fill="#2aba91"/>
<path d="M754,191 763,192 757,198" fill="#29b58e"/>
<path d="M763,192 768,198 757,198" fill="#29b58d"/>
<path d="M763,192 773,191 768,198" fill="#29b58d"/>
<path d="M773,191 780,199 768,198" fill="#2abd94"/>
<path d="M773,191 783,191 780,199" fill="#2bbd94"/>
<path d="M783,191 788,200 780,199" fill="#29b48d"/>
<path d="M783,191 793,192 788,200" fill="#2aba91"/>
<path d="M793,192 799,200 788,200" fill="#28b38c"/>
<path d="M793,192 806,193 799,200" fill="#28b38c"/>
<path d="M806,193 810,201 799,200" fill="#2abb92"/>
<path d="M806,193 815,193 810,201" fill="#2ab991"/>
<path d="M815,193 819,198 810,201" fill="#29b890"/>
<path d="M815,193 823,193 819,198" fill="#29b890"/>
<path d="M823,193 831,201 819,198" fill="#29b890"/>
<path d="M823,193 833,190 831,201" fill="#29b78f"/>
<path d="M833,190 837,200 831,201" fill="#29b68e"/>
<path d="M833,190 844,192 837,200" fill="#2bbf95"/>
<path d="M844,192 850,202 837,200" fill="#28b38c"/>
<path d="M844,192 853,192 850,202" fill="#2abb92"/>
<path d="M853,192 857,198 850,202" fill="#29b58e"/>
<path d="M853,192 863,193 857,198" fill="#29b890"/>
<path d="M863,193 869,200 857,198" fill="#28b38c"/>
<path d="M863,193 874,191 869,200" fill="#29b58d"/>
<path d="M874,191 881,201 869,200" fill="#2bbe95"/>
<path d="M874,191 884,193 881,201" fill="#2bbe95"/>
<path d="M884,193 888,200 881,201" fill="#2ecb9f"/>
<path d="M884,193 896,192 888,200" fill="#2ecb9f"/>
<path d="M896,192 899,202 888,200" fill="#2ecb9f"/>
<path d="M896,192 904,192 899,202" fill="#2ecb9f"/>
<path d="M904,192 908,200 899,202" fill="#2ecb9f"/>
<path d="M628,200 639,199 633,207" fill="#29b68f"/>
<path d="M639,199 644,208 633,207" fill="#2abc94"/>
<path d="M639,199 647,199 644,208" fill="#2bbd94"/>
<path d="M647,199 653,210 644,208" fill="#2aba91"/>
<path d="M647,199 658,198 653,210" fill="#2abc93"/>
<path d="M658,198 663,210 653,210" fill="#29b790"/>
<path d="M658,198 669,202 663,210" fill="#2bbf95"/>
<path d="M669,202 676,207 663,210" fill="#2abb93"/>
<path d="M669,202 679,201 676,207" fill="#2bbe94"/>
<path d="M679,201 686,208 676,207" fill="#29b48d"/>
<path d="M679,201 690,201 686,208" fill="#2abb92"/>
<path d="M690,201 693,208 686,208" fill="#2abb92"/>
<path d="M690,201 701,200 693,208" fill="#2abb92"/>
<path d="M701,200 702,209 693,208" fill="#2bbe94"/>
<path d="M701,200 710,199 702,209" fill="#29b58e"/>
<path d="M710,199 714,210 702,209" fill="#28b48d"/>
<path d="M710,199 721,200 714,210" fill="#2ab991"/>
<path d="M721,200 725,207 714,210" fill="#29b58e"/>
<path d="M721,200 729,202 725,207" fill="#2bbf95"/>
<path d="M729,202 734,208 725,207" fill="#2bbe95"/>
<path d="M729,202 738,199 734,208" fill="#29b890"/>
<path d="M738,199 743,208 734,208" fill="#2abc94"/>
<path d="M738,199 750,200 743,208" fill="#2aba92"/>
<path d="M750,200 753,210 743,208" fill="#2bbe95"/>
<path d="M750,200 757,198 753,210" fill="#2ab991"/>
<path d="M757,198 763,207 753,210" fill="#29b58d"/>
<path d="M757,198 768,198 763,207" fill="#2bbf95"/>
<path d="M768,198 773,209 763,207" fill="#29b58e"/>
<path d="M768,198 780,199 773,209" fill="#28b38d"/>
<path d="M780,199 784,208 773,209" fill="#2abc93"/>
<path d="M780,199 788,200 784,208" fill="#2aba92"/>
<path d="M788,200 795,208 784,208" fill="#2bbd94"/>
<path d="M788,200 799,200 795,208" fill="#29b58e"/>
<path d="M799,200 805,209 795,208" fill="#2bbe95"/>
<path d="M799,200 810,201 805,209" fill="#2abd94"/>
<path d="M810,201 813,210 805,209" fill="#2aba92"/>
<path d="M810,201 819,198 813,210" fill="#28b28c"/>
<path d="M819,198 824,209 813,210" fill="#2abc93"/>
<path d="M819,198 831,201 824,209" fill="#29b78f"/>
<path d="M831,201 834,209 824,209" fill="#28b48d"/>
<path d="M831,201 837,200 834,209" fill="#29b68f"/>
<path d="M837,200 844,207 834,209" fill="#2bbe95"/>
<path d="M837,200 850,202 844,207" fill="#29b68f"/>
<path d="M850,202 855,210 844,207" fill="#29b890"/>
<path d="M850,202 857,198 855,210" fill="#2bbe95"/>
<path d="M857,198 864,209 855,210" fill="#2abb93"/>
<path d="M857,198 869,200 864,209" fill="#29b78f"/>
<path d="M869,200 873,210 864,209" fill="#29b78f"/>
<path d="M869,200 881,201 873,210" fill="#2abc93"/>
<path d="M881,201 885,208 873,210" fill="#2bbd94"/>
<path d="M881,201 888,200 885,208" fill="#2dca9e"/>
<path d="M888,200 895,211 885,208" fill="#2dc89c"/>
<path d="M888,200 899,202 895,211" fill="#2dc89c"/>
<path d="M899,202 903,211 895,211" fill="#2ecb9f"/>
<path d="M899,202 908,200 903,211" fill="#2dca9e"/>
<path d="M908,200 914,208 903,211" fill="#2ecb9f"/>
<path d="M625,210 631,219 621,218" fill="#28b48d"/>
<path d="M625,210 633,207 631,219" fill="#29b890"/>
<path d="M633,207 640,217 631,219" fill="#2bbd94"/>
<path d="M633,207 644,208 640,217" fill="#29b68e"/>
<path d="M644,208 647,218 640,217" fill="#29b68f"/>
<path d="M644,208 653,210 647,218" fill="#2abb92"/>
<path d="M653,210 660,217 647,218" fill="#2abc93"/>
<path d="M653,210 663,210 660,217" fill="#2abd94"/>
<path d="M663,210 669,218 660,217" fill="#29b78f"/>
<path d="M663,210 676,207 669,218" fill="#2abc93"/>
<path d="M676,207 678,218 669,218" fill="#29b58e"/>
<path d="M676,207 686,208 678,218" fill="#28b38c"/>
<path d="M686,208 689,217 678,218" fill="#2abb92"/>
<path d="M686,208 693,208 689,217" fill="#29b58e"/>
<path d="M693,208 697,218 689,217" fill="#2bbd94"/>
<path d="M693,208 702,209 697,218" fill="#29b68f"/>
<path d="M702,209 708,218 697,218" fill="#29b68f"/>
<path d="M702,209 714,210 708,218" fill="#2bbd94"/>
<path d="M714,210 718,217 708,218" fill="#28b28c"/>
<path d="M714,210 725,207 718,217" fill="#2bbf95"/>
<path d="M725,207 728,217 718,217" fill="#29b68f"/>
<path d="M725,207 734,208 728,217" fill="#28b38c"/>
<path d="M734,208 739,216 728,217" fill="#29b68f"/>
<path d="M734,208 743,208 739,216" fill="#28b48d"/>
<path d="M743,208 747,217 739,216" fill="#29b58e"/>
<path d="M743,208 753,210 747,217" fill="#2ab991"/>
<path d="M753,210 758,218 747,217" fill="#2ab991"/>
<path d="M753,210 763,207 758,218" fill="#29b48d"/>
<path d="M763,207 768,216 758,218" fill="#2bbf96"/>
<path d="M763,207 773,209 768,216" fill="#28b48d"/>
<path d="M773,209 779,219 768,216" fill="#28b38d"/>
<path d="M773,209 784,208 779,219" fill="#29b58e"/>
<path d="M784,208 790,218 779,219" fill="#28b28b"/>
<path d="M784,208 795,208 790,218" fill="#2bbd94"/>
<path d="M795,208 799,216 790,218" fill="#28b48d"/>
<path d="M795,208 805,209 799,216" fill="#28b28c"/>
<path d="M805,209 808,217 799,216" fill="#2aba92"/>
<path d="M805,209 813,210 808,217" fill="#29b68f"/>
<path d="M813,210 821,216 808,217" fill="#28b48d"/>
<path d="M813,210 824,209 821,216" fill="#29b890"/>
<path d="M824,209 831,217 821,216" fill="#29b48d"/>
<path d="M824,209 834,209 831,217" fill="#28b38c"/>
<path d="M834,209 839,217 831,217" fill="#2ab991"/>
<path d="M834,209 844,207 839,217" fill="#29b58e"/>
<path d="M844,207 851,216 839,217" fill="#29b68f"/>
<path d="M844,207 855,210 851,216" fill="#29b890"/>
<path d="M855,210 859,218 851,216" fill="#2bbf95"/>
<path d="M855,210 864,209 859,218" fill="#2aba91"/>
<path d="M864,209 868,216 859,218" fill="#2ab991"/>
<path d="M864,209 873,210 868,216" fill="#29b58e"/>
<path d="M873,210 881,219 868,216" fill="#2aba91"/>
<path d="M873,210 885,208 881,219" fill="#29b890"/>
<path d="M885,208 890,219 881,219" fill="#2ecb9f"/>
<path d="M885,208 895,211 890,219" fill="#2ecb9f"/>
<path d="M895,211 897,218 890,219" fill="#2ecb9f"/>
<path d="M895,211 903,211 897,218" fill="#2ecb9f"/>
<path d="M903,211 910,216 897,218" fill="#25a581"/>
<path d="M903,211 914,208 910,216" fill="#2cc59a"/>
<path d="M914,208 919,219 910,216" fill="#197259"/>
<path d="M914,208 925,208 919,219" fill="#229978"/>
<path d="M925,208 928,219 919,219" fill="#28b08a"/>
<path d="M621,218 631,219 624,228" fill="#28b38c"/>
<path d="M631,219 635,227 624,228" fill="#2bbf96"/>
<path d="M631,219 640,217 635,227" fill="#2ab991"/>
<path d="M640,217 643,224 635,227" fill="#2abc93"/>
<path d="M640,217 647,218 643,224" fill="#2bbd94"/>
<path d="M647,218 654,227 643,224" fill="#2abc94"/>
<path d="M647,218 660,217 654,227" fill="#28b38c"/>
<path d="M660,217 666,225 654,227" fill="#29b58e"/>
<path d="M660,217 669,218 666,225" fill="#29b78f"/>
<path d="M669,218 673,228 666,225" fill="#2bbd94"/>
<path d="M669,218 678,218 673,228" fill="#2abb93"/>
<path d="M678,218 685,226 673,228" fill="#29b58e"/>
<path d="M678,218 689,217 685,226" fill="#28b48d"/>
<path d="M689,217 695,225 685,226" fill="#2abc94"/>
<path d="M689,217 697,218 695,225" fill="#2bbd94"/>
<path d="M697,218 704,227 695,225" fill="#28b28c"/>
<path d="M697,218 708,218 704,227" fill="#29b68f"/>
<path d="M708,218 714,225 704,227" fill="#28b38d"/>
<path d="M708,218 718,217 714,225" fill="#29b890"/>
<path d="M718,217 723,227 714,225" fill="#28b28c"/>
<path d="M718,217 728,217 723,227" fill="#29b78f"/>
<path d="M728,217 736,225 723,227" fill="#29b48d"/>
<path d="M728,217 739,216 736,225" fill="#28b38c"/>
<path d="M739,216 742,225 736,225" fill="#2bbf95"/>
<path d="M739,216 747,217 742,225" fill="#28b48d"/>
<path d="M747,217 755,226 742,225" fill="#2bbe95"/>
<path d="M747,217 758,218 755,226" fill="#2abb93"/>
<path d="M758,218 764,228 755,226" fill="#29b78f"/>
<path d="M758,218 768,216 764,228" fill="#29b78f"/>
<path d="M768,216 774,225 764,228" fill="#29b78f"/>
<path d="M768,216 779,219 774,225" fill="#29b68e"/>
<path d="M779,219 785,224 774,225" fill="#2ab991"/>
<path d="M779,219 790,218 785,224" fill="#28b48d"/>
<path d="M790,218 793,227 785,224" fill="#2aba91"/>
<path d="M790,218 799,216 793,227" fill="#29b890"/>
<path d="M799,216 803,224 793,227" fill="#29b48d"/>
<path d="M799,216 808,217 803,224" fill="#2bbe95"/>
<path d="M808,217 814,226 803,224" fill="#29b68e"/>
<path d="M808,217 821,216 814,226" fill="#2aba92"/>
<path d="M821,216 826,225 814,226" fill="#2abb93"/>
<path d="M821,216 831,217 826,225" fill="#2abc93"/>
<path d="M831,217 835,226 826,225" fill="#2ab991"/>
<path d="M831,217 839,217 835,226" fill="#29b890"/>
<path d="M839,217 845,226 835,226" fill="#29b78f"/>
<path d="M839,217 851,216 845,226" fill="#2abb93"/>
<path d="M851,216 855,226 845,226" fill="#28b28b"/>
<path d="M851,216 859,218 855,226" fill="#2ab991"/>
<path d="M859,218 863,226 855,226" fill="#2dc89c"/>
<path d="M859,218 868,216 863,226" fill="#2abc94"/>
<path d="M868,216 875,226 863,226" fill="#2ecb9f"/>
<path d="M868,216 881,219 875,226" fill="#2ecb9f"/>
<path d="M881,219 883,226 875,226" fill="#25a581"/>
<path d="M881,219 890,219 883,226" fill="#26a985"/>
<path d="M890,219 892,225 883,226" fill="#197259"/>
<path d="M890,219 897,218 892,225" fill="#1b7b60"/>
<path d="M897,218 904,226 892,225" fill="#1f896b"/>
<path d="M897,218 910,216 904,226" fill="#1a765c"/>
<path d="M910,216 914,225 904,226" fill="#28b28b"/>
<path d="M910,216 919,219 914,225" fill="#25a481"/>
<path d="M919,219 922,224 914,225" fill="#2ab991"/>
<path d="M919,219 928,219 922,224" fill="#28b28b"/>
<path d="M928,219 933,225 922,224" fill="#2abc94"/>
<path d="M624,228 631,234 619,233" fill="#2ab991"/>
<path d="M624,228 635,227 631,234" fill="#2bbe95"/>
<path d="M635,227 638,237 631,234" fill="#29b58e"/>
<path d="M635,227 643,224 638,237" fill="#28b28c"/>
<path d="M643,224 647,235 638,237" fill="#29b68f"/>
<path d="M643,224 654,227 647,235" fill="#29b890"/>
<path d="M654,227 659,234 647,235" fill="#2abb92"/>
<path d="M654,227 666,225 659,234" fill="#29b68f"/>
<path d="M666,225 671,235 659,234" fill="#2abc93"/>
<path d="M666,225 673,228 671,235" fill="#2bbd94"/>
<path d="M673,228 677,235 671,235" fill="#28b28c"/>
<path d="M673,228 685,226 677,235" fill="#2bbf95"/>
<path d="M685,226 687,236 677,235" fill="#28b38c"/>
<path d="M685,226 695,225 687,236" fill="#29b58e"/>
<path d="M695,225 700,237 687,236" fill="#28b38c"/>
<path d="M695,225 704,227 700,237" fill="#2abc94"/>
<path d="M704,227 707,236 700,237" fill="#2bbe95"/>
<path d="M704,227 714,225 707,236" fill="#29b58e"/>
<path d="M714,225 718,235 707,236" fill="#2ab991"/>
<path d="M714,225 723,227 718,235" fill="#2bbf95"/>
<path d="M723,227 728,234 718,235" fill="#2abc93"/>
<path d="M723,227 736,225 728,234" fill="#29b58e"/>
<path d="M736,225 738,235 728,234" fill="#29b890"/>
<path d="M736,225 742,225 738,235" fill="#2bbe95"/>
<path d="M742,225 747,237 738,235" fill="#2bbd94"/>
<path d="M742,225 755,226 747,237" fill="#29b890"/>
<path d="M755,226 757,237 747,237" fill="#2aba91"/>
<path d="M755,226 764,228 757,237" fill="#28b38c"/>
<path d="M764,228 768,233 757,237" fill="#29b78f"/>
<path d="M764,228 774,225 768,233" fill="#2abc94"/>
<path d="M774,225 780,235 768,233" fill="#28b38c"/>
<path d="M774,225 785,224 780,235" fill="#29b58d"/>
<path d="M785,224 790,235 780,235" fill="#2ab991"/>
<path d="M785,224 793,227 790,235" fill="#28b28c"/>
<path d="M793,227 800,233 790,235" fill="#29b48d"/>
<path d="M793,227 803,224 800,233" fill="#2abc93"/>
<path d="M803,224 810,235 800,233" fill="#29b48d"/>
<path d="M803,224 814,226 810,235" fill="#29b890"/>
<path d="M814,226 821,233 810,235" fill="#2bbe95"/>
<path d="M814,226 826,225 821,233" fill="#2ab991"/>
<path d="M826,225 827,236 821,233" fill="#2abb92"/>
<path d="M826,225 835,226 827,236" fill="#28b38c"/>
<path d="M835,226 841,235 827,236" fill="#29b890"/>
<path d="M835,226 845,226 841,235" fill="#29b790"/>
<path d="M845,226 850,235 841,235" fill="#29b890"/>
<path d="M845,226 855,226 850,235" fill="#2abb92"/>
<path d="M855,226 859,235 850,235" fill="#2ecb9f"/>
<path d="M855,226 863,226 859,235" fill="#2ecb9f"/>
<path d="M863,226 869,233 859,235" fill="#1b775d"/>
<path d="M863,226 875,226 869,233" fill="#1f8b6d"/>
<path d="M875,226 878,236 869,233" fill="#1d7f64"/>
<path d="M875,226 883,226 878,236" fill="#1d7f64"/>
<path d="M883,226 888,235 878,236" fill="#2abd94"/>
<path d="M883,226 892,225 888,235" fill="#27ac86"/>
<path d="M892,225 898,234 888,235" fill="#2cc59a"/>
<path d="M892,225 904,226 898,234" fill="#29b68f"/>
<path d="M904,226 910,236 898,234" fill="#2ab991"/>
<path d="M904,226 914,225 910,236" fill="#29b58e"/>
<path d="M914,225 921,235 910,236" fill="#2aba92"/>
<path d="M914,225 922,224 921,235" fill="#29b78f"/>
<path d="M922,224 928,234 921,235" fill="#29b78f"/>
<path d="M922,224 933,225 928,234" fill="#2cc298"/>
<path d="M933,225 937,234 928,234" fill="#2ecb9f"/>
<path d="M933,225 944,225 937,234" fill="#2ecb9f"/>
<path d="M944,225 949,235 937,234" fill="#229776"/>
<path d="M944,225 955,227 949,235" fill="#2ecb9f"/>
<path d="M955,227 958,234 949,235" fill="#2ecb9f"/>
<path d="M619,233 623,243 615,243" fill="#29b790"/>
<path d="M619,233 631,234 623,243" fill="#2ab991"/>
<path d="M631,234 633,244 623,243" fill="#2abc94"/>
<path d="M631,234 638,237 633,244" fill="#28b38c"/>
<path d="M638,237 645,245 633,244" fill="#29b790"/>
<path d="M638,237 647,235 645,245" fill="#28b38c"/>
<path d="M647,235 652,245 645,245" fill="#2ab991"/>
<path d="M647,235 659,234 652,245" fill="#28b28c"/>
<path d="M659,234 664,243 652,245" fill="#29b890"/>
<path d="M659,234 671,235 664,243" fill="#28b48d"/>
<path d="M671,235 674,243 664,243" fill="#29b68f"/>
<path d="M671,235 677,235 674,243" fill="#2bbf95"/>
<path d="M677,235 683,243 674,243" fill="#29b58e"/>
<path d="M677,235 687,236 683,243" fill="#29b78f"/>
<path d="M687,236 695,244 683,243" fill="#2abc94"/>
<path d="M687,236 700,237 695,244" fill="#29b58e"/>
<path d="M700,237 706,242 695,244" fill="#29b58e"/>
<path d="M700,237 707,236 706,242" fill="#29b790"/>
<path d="M707,236 716,245 706,242" fill="#2aba92"/>
<path d="M707,236 718,235 716,245" fill="#29b58e"/>
<path d="M718,235 725,246 716,245" fill="#29b58e"/>
<path d="M718,235 728,234 725,246" fill="#28b38c"/>
<path d="M728,234 733,245 725,246" fill="#29b68e"/>
<path d="M728,234 738,235 733,245" fill="#29b78f"/>
<path d="M738,235 746,242 733,245" fill="#2aba91"/>
<path d="M738,235 747,237 746,242" fill="#29b68e"/>
<path d="M747,237 754,245 746,242" fill="#2ab991"/>
<path d="M747,237 757,237 754,245" fill="#2abc93"/>
<path d="M757,237 763,245 754,245" fill="#29b68e"/>
<path d="M757,237 768,233 763,245" fill="#2abb93"/>
<path d="M768,233 776,243 763,245" fill="#2abc93"/>
<path d="M768,233 780,235 776,243" fill="#2bbe95"/>
<path d="M780,235 783,242 776,243" fill="#2abc93"/>
<path d="M780,235 790,235 783,242" fill="#2aba92"/>
<path d="M790,235 795,243 783,242" fill="#2aba92"/>
<path d="M790,235 800,233 795,243" fill="#29b78f"/>
<path d="M800,233 803,243 795,243" fill="#2bbe95"/>
<path d="M800,233 810,235 803,243" fill="#29b48d"/>
<path d="M810,235 816,243 803,243" fill="#29b78f"/>
<path d="M810,235 821,233 816,243" fill="#28b48d"/>
<path d="M821,233 822,245 816,243" fill="#2ab991"/>
<path d="M821,233 827,236 822,245" fill="#2bbe95"/>
<path d="M827,236 833,243 822,245" fill="#2aba92"/>
<path d="M827,236 841,235 833,243" fill="#28b18b"/>
<path d="M841,235 846,243 833,243" fill="#2dc69b"/>
<path d="M841,235 850,235 846,243" fill="#2ecb9f"/>
<path d="M850,235 852,245 846,243" fill="#24a17e"/>
<path d="M850,235 859,235 852,245" fill="#209171"/>
<path d="M859,235 863,242 852,245" fill="#1c7b60"/>
<path d="M859,235 869,233 863,242" fill="#1f8b6d"/>
<path d="M869,233 876,243 863,242" fill="#2dc69b"/>
<path d="M869,233 878,236 876,243" fill="#2ecb9f"/>
<path d="M878,236 886,243 876,243" fill="#2ecb9f"/>
<path d="M878,236 888,235 886,243" fill="#2ecb9f"/>
<path d="M888,235 893,242 886,243" fill="#2ecb9f"/>
<path d="M888,235 898,234 893,242" fill="#2ecb9f"/>
<path d="M898,234 904,244 893,242" fill="#2dca9e"/>
<path d="M898,234 910,236 904,244" fill="#2cc399"/>
<path d="M910,236 914,244 904,244" fill="#2cc298"/>
<path d="M910,236 921,235 914,244" fill="#2bc096"/>
<path d="M921,235 923,245 914,244" fill="#2cc49a"/>
<path d="M921,235 928,234 923,245" fill="#2ab991"/>
<path d="M928,234 936,245 923,245" fill="#2ecb9f"/>
<path d="M928,234 937,234 936,245" fill="#2ecb9f"/>
<path d="M937,234 945,242 936,245" fill="#1c7e63"/>
<path d="M937,234 949,235 945,242" fill="#1d8366"/>
<path d="M949,235 953,242 945,242" fill="#2dc89d"/>
<path d="M949,235 958,234 953,242" fill="#2cc399"/>
<path d="M958,234 963,245 953,242" fill="#2bbd94"/>
<path d="M615,243 623,243 618,254" fill="#2aba92"/>
<path d="M623,243 628,253 618,254" fill="#2ab991"/>
<path d="M623,243 633,244 628,253" fill="#29b58e"/>
<path d="M633,244 637,254 628,253" fill="#2ab991"/>
<path d="M633,244 645,245 637,254" fill="#29b890"/>
<path d="M645,245 649,252 637,254" fill="#2ab991"/>
<path d="M645,245 652,245 649,252" fill="#29b890"/>
<path d="M652,245 660,253 649,252" fill="#29b48d"/>
<path d="M652,245 664,243 660,253" fill="#2abb93"/>
<path d="M664,243 668,251 660,253" fill="#29b68f"/>
<path d="M664,243 674,243 668,251" fill="#2abc94"/>
<path d="M674,243 679,250 668,251" fill="#29b68f"/>
<path d="M674,243 683,243 679,250" fill="#2bbd94"/>
<path d="M683,243 690,252 679,250" fill="#29b58e"/>
<path d="M683,243 695,244 690,252" fill="#2aba92"/>
<path d="M695,244 698,252 690,252" fill="#2bbf95"/>
<path d="M695,244 706,242 698,252" fill="#29b68e"/>
<path d="M706,242 707,252 698,252" fill="#2abc94"/>
<path d="M706,242 716,245 707,252" fill="#2ab991"/>
<path d="M716,245 719,252 707,252" fill="#28b28b"/>
<path d="M716,245 725,246 719,252" fill="#2aba91"/>
<path d="M725,246 728,251 719,252" fill="#29b78f"/>
<path d="M725,246 733,245 728,251" fill="#28b38c"/>
<path d="M733,245 739,253 728,251" fill="#2abc94"/>
<path d="M733,245 746,242 739,253" fill="#2abb92"/>
<path d="M746,242 749,253 739,253" fill="#2bbe95"/>
<path d="M746,242 754,245 749,253" fill="#28b48d"/>
<path d="M754,245 759,251 749,253" fill="#29b78f"/>
<path d="M754,245 763,245 759,251" fill="#2ab991"/>
<path d="M763,245 768,254 759,251" fill="#29b68f"/>
<path d="M763,245 776,243 768,254" fill="#28b48d"/>
<path d="M776,243 779,252 768,254" fill="#29b78f"/>
<path d="M776,243 783,242 779,252" fill="#29b890"/>
<path d="M783,242 789,254 779,252" fill="#29b890"/>
<path d="M783,242 795,243 789,254" fill="#29b890"/>
<path d="M795,243 799,252 789,254" fill="#29b790"/>
<path d="M795,243 803,243 799,252" fill="#2ab991"/>
<path d="M803,243 808,250 799,252" fill="#2abb92"/>
<path d="M803,243 816,243 808,250" fill="#29b58e"/>
<path d="M816,243 819,252 808,250" fill="#29b890"/>
<path d="M816,243 822,245 819,252" fill="#2bbd94"/>
<path d="M822,245 829,252 819,252" fill="#2abc93"/>
<path d="M822,245 833,243 829,252" fill="#2abc93"/>
<path d="M833,243 839,253 829,252" fill="#2ecb9f"/>
<path d="M833,243 846,243 839,253" fill="#2ecb9f"/>
<path d="M846,243 848,254 839,253" fill="#1e8769"/>
<path d="M846,243 852,245 848,254" fill="#1b775d"/>
<path d="M852,245 857,254 848,254" fill="#2bbf95"/>
<path d="M852,245 863,242 857,254" fill="#2ecb9f"/>
<path d="M863,242 868,253 857,254" fill="#2ecb9f"/>
<path d="M863,242 876,243 868,253" fill="#2ecb9f"/>
<path d="M876,243 878,251 868,253" fill="#2ecb9f"/>
<path d="M876,243 886,243 878,251" fill="#2ecb9f"/>
<path d="M886,243 889,254 878,251" fill="#2ecb9f"/>
<path d="M886,243 893,242 889,254" fill="#2ecb9f"/>
<path d="M893,242 900,254 889,254" fill="#2ecb9f"/>
<path d="M893,242 904,244 900,254" fill="#2ecb9f"/>
<path d="M904,244 911,251 900,254" fill="#2ecb9f"/>
<path d="M904,244 914,244 911,251" fill="#2ecb9f"/>
<path d="M914,244 919,251 911,251" fill="#2ecb9f"/>
<path d="M914,244 923,245 919,251" fill="#2dca9e"/>
<path d="M923,245 930,252 919,251" fill="#2dc89d"/>
<path d="M923,245 936,245 930,252" fill="#2ecb9f"/>
<path d="M936,245 940,253 930,252" fill="#219373"/>
<path d="M936,245 945,242 940,253" fill="#1c7c61"/>
<path d="M945,242 951,253 940,253" fill="#27ae88"/>
<path d="M945,242 953,242 951,253" fill="#2dca9e"/>
<path d="M953,242 961,252 951,253" fill="#239b79"/>
<path d="M953,242 963,245 961,252" fill="#1e876a"/>
<path d="M963,245 967,254 961,252" fill="#28b38c"/>
<path d="M618,254 625,262 616,260" fill="#2bbe95"/>
<path d="M618,254 628,253 625,262" fill="#2bbe95"/>
<path d="M628,253 634,262 625,262" fill="#29b890"/>
<path d="M628,253 637,254 634,262" fill="#2abb93"/>
<path d="M637,254 645,259 634,262" fill="#2ab991"/>
<path d="M637,254 649,252 645,259" fill="#28b38c"/>
<path d="M649,252 653,261 645,259" fill="#2bbe95"/>
<path d="M649,252 660,253 653,261" fill="#2bbd94"/>
<path d="M660,253 666,260 653,261" fill="#2bbe95"/>
<path d="M660,253 668,251 666,260" fill="#29b58e"/>
<path d="M668,251 674,260 666,260" fill="#2ab991"/>
<path d="M668,251 679,250 674,260" fill="#2abd94"/>
<path d="M679,250 685,261 674,260" fill="#2bbd94"/>
<path d="M679,250 690,252 685,261" fill="#2bbd94"/>
<path d="M690,252 694,262 685,261" fill="#28b38c"/>
<path d="M690,252 698,252 694,262" fill="#2abb92"/>
<path d="M698,252 703,262 694,262" fill="#29b68f"/>
<path d="M698,252 707,252 703,262" fill="#28b48d"/>
<path d="M707,252 715,262 703,262" fill="#2ab991"/>
<path d="M707,252 719,252 715,262" fill="#28b38c"/>
<path d="M719,252 723,260 715,262" fill="#29b68f"/>
<path d="M719,252 728,251 723,260" fill="#29b890"/>
<path d="M728,251 733,263 723,260" fill="#29b78f"/>
<path d="M728,251 739,253 733,263" fill="#29b68f"/>
<path d="M739,253 744,261 733,263" fill="#29b890"/>
<path d="M739,253 749,253 744,261" fill="#2ab991"/>
<path d="M749,253 754,262 744,261" fill="#28b48d"/>
<path d="M749,253 759,251 754,262" fill="#29b58e"/>
<path d="M759,251 763,260 754,262" fill="#29b68f"/>
<path d="M759,251 768,254 763,260" fill="#28b28c"/>
<path d="M768,254 775,262 763,260" fill="#2ab991"/>
<path d="M768,254 779,252 775,262" fill="#2bbe95"/>
<path d="M779,252 783,259 775,262" fill="#29b58e"/>
<path d="M779,252 789,254 783,259" fill="#2bbd94"/>
<path d="M789,254 796,262 783,259" fill="#29b78f"/>
<path d="M789,254 799,252 796,262" fill="#29b890"/>
<path d="M799,252 804,261 796,262" fill="#2abc93"/>
<path d="M799,252 808,250 804,261" fill="#29b890"/>
<path d="M808,250 816,261 804,261" fill="#29b890"/>
<path d="M808,250 819,252 816,261" fill="#2bbe95"/>
<path d="M819,252 823,259 816,261" fill="#28b38c"/>
<path d="M819,252 829,252 823,259" fill="#29b890"/>
<path d="M829,252 833,261 823,259" fill="#2abc94"/>
<path d="M829,252 839,253 833,261" fill="#2ecb9f"/>
<path d="M839,253 843,263 833,261" fill="#1d8467"/>
<path d="M839,253 848,254 843,263" fill="#208f70"/>
<path d="M848,254 855,261 843,263" fill="#29b890"/>
<path d="M848,254 857,254 855,261" fill="#2ecb9f"/>
<path d="M857,254 865,261 855,261" fill="#2ecb9f"/>
<path d="M857,254 868,253 865,261" fill="#2ecb9f"/>
<path d="M868,253 874,261 865,261" fill="#2ecb9f"/>
<path d="M868,253 878,251 874,261" fill="#2ecb9f"/>
<path d="M878,251 884,261 874,261" fill="#2ecb9f"/>
<path d="M878,251 889,254 884,261" fill="#2ecb9f"/>
<path d="M889,254 895,260 884,261" fill="#2cc298"/>
<path d="M889,254 900,254 895,260" fill="#2bbe95"/>
<path d="M900,254 905,260 895,260" fill="#2ecb9f"/>
<path d="M900,254 911,251 905,260" fill="#2ecb9f"/>
<path d="M911,251 915,259 905,260" fill="#2ecb9f"/>
<path d="M911,251 919,251 915,259" fill="#2ecb9f"/>
<path d="M919,251 924,261 915,259" fill="#2ecb9f"/>
<path d="M919,251 930,252 924,261" fill="#2ecb9f"/>
<path d="M930,252 935,260 924,261" fill="#2dc89c"/>
<path d="M930,252 940,253 935,260" fill="#1d8064"/>
<path d="M940,253 943,260 935,260" fill="#1e876a"/>
<path d="M940,253 951,253 943,260" fill="#28b08a"/>
<path d="M951,253 954,261 943,260" fill="#2cc49a"/>
<path d="M951,253 961,252 954,261" fill="#25a380"/>
<path d="M961,252 962,260 954,261" fill="#26a985"/>
<path d="M961,252 967,254 962,260" fill="#2dc69b"/>
<path d="M967,254 973,263 962,260" fill="#2abc93"/>
<path d="M616,260 625,262 619,268" fill="#29b68e"/>
<path d="M625,262 630,269 619,268" fill="#2bbe95"/>
<path d="M625,262 634,262 630,269" fill="#2abc93"/>
<path d="M634,262 638,270 630,269" fill="#2abc94"/>
<path d="M634,262 645,259 638,270" fill="#2ab991"/>
<path d="M645,259 649,270 638,270" fill="#29b58e"/>
<path d="M645,259 653,261 649,270" fill="#29b890"/>
<path d="M653,261 660,270 649,270" fill="#29b78f"/>
<path d="M653,261 666,260 660,270" fill="#2aba92"/>
<path d="M666,260 668,268 660,270" fill="#28b48d"/>
<path d="M666,260 674,260 668,268" fill="#29b58d"/>
<path d="M674,260 679,269 668,268" fill="#2ab991"/>
<path d="M674,260 685,261 679,269" fill="#28b48d"/>
<path d="M685,261 689,269 679,269" fill="#28b48d"/>
<path d="M685,261 694,262 689,269" fill="#2ab991"/>
<path d="M694,262 697,268 689,269" fill="#29b890"/>
<path d="M694,262 703,262 697,268" fill="#2abd94"/>
<path d="M703,262 708,268 697,268" fill="#2bbf95"/>
<path d="M703,262 715,262 708,268" fill="#2ab991"/>
<path d="M715,262 720,270 708,268" fill="#2aba92"/>
<path d="M715,262 723,260 720,270" fill="#29b890"/>
<path d="M723,260 728,271 720,270" fill="#2aba92"/>
<path d="M723,260 733,263 728,271" fill="#29b78f"/>
<path d="M733,263 740,268 728,271" fill="#2bbd94"/>
<path d="M733,263 744,261 740,268" fill="#2ab991"/>
<path d="M744,261 750,269 740,268" fill="#29b58e"/>
<path d="M744,261 754,262 750,269" fill="#29b790"/>
<path d="M754,262 761,268 750,269" fill="#2bbd94"/>
<path d="M754,262 763,260 761,268" fill="#28b28c"/>
<path d="M763,260 768,269 761,268" fill="#2bbf96"/>
<path d="M763,260 775,262 768,269" fill="#2abc93"/>
<path d="M775,262 780,271 768,269" fill="#2ab991"/>
<path d="M775,262 783,259 780,271" fill="#29b68e"/>
<path d="M783,259 789,268 780,271" fill="#29b58e"/>
<path d="M783,259 796,262 789,268" fill="#29b68f"/>
<path d="M796,262 799,271 789,268" fill="#2abb93"/>
<path d="M796,262 804,261 799,271" fill="#2aba92"/>
<path d="M804,261 807,271 799,271" fill="#2ab991"/>
<path d="M804,261 816,261 807,271" fill="#29b78f"/>
<path d="M816,261 820,271 807,271" fill="#2ab991"/>
<path d="M816,261 823,259 820,271" fill="#29b48d"/>
<path d="M823,259 830,270 820,271" fill="#2bc197"/>
<path d="M823,259 833,261 830,270" fill="#2cc399"/>
<path d="M833,261 841,269 830,270" fill="#28b38c"/>
<path d="M833,261 843,263 841,269" fill="#24a07d"/>
<path d="M843,263 848,268 841,269" fill="#1f896b"/>
<path d="M843,263 855,261 848,268" fill="#249f7d"/>
<path d="M855,261 858,271 848,268" fill="#2bbf96"/>
<path d="M855,261 865,261 858,271" fill="#2ecb9f"/>
<path d="M865,261 867,271 858,271" fill="#2ecb9f"/>
<path d="M865,261 874,261 867,271" fill="#2ecb9f"/>
<path d="M874,261 879,271 867,271" fill="#2ecb9f"/>
<path d="M874,261 884,261 879,271" fill="#2ecb9f"/>
<path d="M884,261 890,270 879,271" fill="#24a07d"/>
<path d="M884,261 895,260 890,270" fill="#229675"/>
<path d="M895,260 900,268 890,270" fill="#2ecb9f"/>
<path d="M895,260 905,260 900,268" fill="#2ecb9f"/>
<path d="M905,260 908,269 900,268" fill="#2ecb9f"/>
<path d="M905,260 915,259 908,269" fill="#2ecb9f"/>
<path d="M915,259 919,270 908,269" fill="#2ecb9f"/>
<path d="M915,259 924,261 919,270" fill="#2dc79c"/>
<path d="M924,261 931,271 919,270" fill="#2ecb9f"/>
<path d="M924,261 935,260 931,271" fill="#2abc93"/>
<path d="M935,260 941,270 931,271" fill="#196f57"/>
<path d="M935,260 943,260 941,270" fill="#208d6e"/>
<path d="M943,260 948,270 941,270" fill="#2dc79c"/>
<path d="M943,260 954,261 948,270" fill="#2bc096"/>
<path d="M954,261 960,271 948,270" fill="#219474"/>
<path d="M954,261 962,260 960,271" fill="#26ab86"/>
<path d="M962,260 968,269 960,271" fill="#24a27f"/>
<path d="M962,260 973,263 968,269" fill="#208f70"/>
<path d="M973,263 979,269 968,269" fill="#2abb92"/>
<path d="M619,268 625,280 616,279" fill="#28b38c"/>
<path d="M619,268 630,269 625,280" fill="#2abc94"/>
<path d="M630,269 633,280 625,280" fill="#28b28b"/>
<path d="M630,269 638,270 633,280" fill="#2abc93"/>
<path d="M638,270 645,280 633,280" fill="#29b890"/>
<path d="M638,270 649,270 645,280" fill="#29b78f"/>
<path d="M649,270 655,278 645,280" fill="#28b28c"/>
<path d="M649,270 660,270 655,278" fill="#2aba92"/>
<path d="M660,270 663,279 655,278" fill="#2abd94"/>
<path d="M660,270 668,268 663,279" fill="#29b790"/>
<path d="M668,268 673,279 663,279" fill="#2abc93"/>
<path d="M668,268 679,269 673,279" fill="#28b38d"/>
<path d="M679,269 684,280 673,279" fill="#29b48d"/>
<path d="M679,269 689,269 684,280" fill="#29b78f"/>
<path d="M689,269 693,278 684,280" fill="#28b48d"/>
<path d="M689,269 697,268 693,278" fill="#2bbf95"/>
<path d="M697,268 706,279 693,278" fill="#2ab991"/>
<path d="M697,268 708,268 706,279" fill="#28b28b"/>
<path d="M708,268 714,279 706,279" fill="#2aba92"/>
<path d="M708,268 720,270 714,279" fill="#28b48d"/>
<path d="M720,270 724,279 714,279" fill="#29b78f"/>
<path d="M720,270 728,271 724,279" fill="#2abd94"/>
<path d="M728,271 734,278 724,279" fill="#29b68f"/>
<path d="M728,271 740,268 734,278" fill="#29b58e"/>
<path d="M740,268 746,280 734,278" fill="#2bbd94"/>
<path d="M740,268 750,269 746,280" fill="#29b58e"/>
<path d="M750,269 755,278 746,280" fill="#2bbe95"/>
<path d="M750,269 761,268 755,278" fill="#28b28c"/>
<path d="M761,268 763,279 755,278" fill="#28b38c"/>
<path d="M761,268 768,269 763,279" fill="#2bbf96"/>
<path d="M768,269 775,279 763,279" fill="#2aba92"/>
<path d="M768,269 780,271 775,279" fill="#2ab991"/>
<path d="M780,271 783,279 775,279" fill="#2abc93"/>
<path d="M780,271 789,268 783,279" fill="#29b68e"/>
<path d="M789,268 794,278 783,279" fill="#2bbe95"/>
<path d="M789,268 799,271 794,278" fill="#29b68f"/>
<path d="M799,271 804,278 794,278" fill="#2dc69b"/>
<path d="M799,271 807,271 804,278" fill="#2bbf96"/>
<path d="M807,271 815,279 804,278" fill="#2ecb9f"/>
<path d="M807,271 820,271 815,279" fill="#2ecb9f"/>
<path d="M820,271 826,277 815,279" fill="#29b68e"/>
<path d="M820,271 830,270 826,277" fill="#2bbd94"/>
<path d="M830,270 834,280 826,277" fill="#219474"/>
<path d="M830,270 841,269 834,280" fill="#219474"/>
<path d="M841,269 845,279 834,280" fill="#28b08a"/>
<path d="M841,269 848,268 845,279" fill="#27ac86"/>
<path d="M848,268 855,277 845,279" fill="#2aba92"/>
<path d="M848,268 858,271 855,277" fill="#2abb92"/>
<path d="M858,271 865,279 855,277" fill="#2ecb9f"/>
<path d="M858,271 867,271 865,279" fill="#2ecb9f"/>
<path d="M867,271 874,278 865,279" fill="#1f8a6c"/>
<path d="M867,271 879,271 874,278" fill="#219575"/>
<path d="M879,271 884,277 874,278" fill="#2dc99e"/>
<path d="M879,271 890,270 884,277" fill="#2ecb9f"/>
<path d="M890,270 894,277 884,277" fill="#2ecb9f"/>
<path d="M890,270 900,268 894,277" fill="#2ecb9f"/>
<path d="M900,268 906,280 894,277" fill="#2ecb9f"/>
<path d="M900,268 908,269 906,280" fill="#2ecb9f"/>
<path d="M908,269 914,279 906,280" fill="#2cc499"/>
<path d="M908,269 919,270 914,279" fill="#2abb93"/>
<path d="M919,270 924,278 914,279" fill="#2ab991"/>
<path d="M919,270 931,271 924,278" fill="#2ecb9f"/>
<path d="M931,271 933,280 924,278" fill="#28b18a"/>
<path d="M931,271 941,270 933,280" fill="#1c7e63"/>
<path d="M941,270 945,279 933,280" fill="#29b58e"/>
<path d="M941,270 948,270 945,279" fill="#2ecb9f"/>
<path d="M948,270 952,280 945,279" fill="#28b48d"/>
<path d="M948,270 960,271 952,280" fill="#28b18b"/>
<path d="M960,271 962,279 952,280" fill="#2ecb9f"/>
<path d="M960,271 968,269 962,279" fill="#229776"/>
<path d="M968,269 974,277 962,279" fill="#26a783"/>
<path d="M968,269 979,269 974,277" fill="#29b890"/>
<path d="M979,269 984,280 974,277" fill="#2bbf96"/>
<path d="M979,269 991,268 984,280" fill="#29b48d"/>
<path d="M991,268 994,278 984,280" fill="#2abc94"/>
<path d="M616,279 625,280 617,289" fill="#2bbe95"/>
<path d="M625,280 627,286 617,289" fill="#2abb92"/>
<path d="M625,280 633,280 627,286" fill="#2abc93"/>
<path d="M633,280 640,286 627,286" fill="#2bbf95"/>
<path d="M633,280 645,280 640,286" fill="#2bbe95"/>
<path d="M645,280 649,289 640,286" fill="#29b68e"/>
<path d="M645,280 655,278 649,289" fill="#2aba91"/>
<path d="M655,278 659,286 649,289" fill="#29b890"/>
<path d="M655,278 663,279 659,286" fill="#29b890"/>
<path d="M663,279 670,288 659,286" fill="#28b48d"/>
<path d="M663,279 673,279 670,288" fill="#27ae88"/>
<path d="M673,279 679,288 670,288" fill="#28b18b"/>
<path d="M673,279 684,280 679,288" fill="#27af89"/>
<path d="M684,280 688,287 679,288" fill="#2bbd94"/>
<path d="M684,280 693,278 688,287" fill="#2abc93"/>
<path d="M693,278 701,289 688,287" fill="#29b58e"/>
<path d="M693,278 706,279 701,289" fill="#2abb92"/>
<path d="M706,279 707,286 701,289" fill="#2bbe95"/>
<path d="M706,279 714,279 707,286" fill="#2aba92"/>
<path d="M714,279 718,288 707,286" fill="#2abb92"/>
<path d="M714,279 724,279 718,288" fill="#29b890"/>
<path d="M724,279 728,286 718,288" fill="#29b78f"/>
<path d="M724,279 734,278 728,286" fill="#29b68f"/>
<path d="M734,278 740,286 728,286" fill="#28b38c"/>
<path d="M734,278 746,280 740,286" fill="#29b68f"/>
<path d="M746,280 751,287 740,286" fill="#29b58e"/>
<path d="M746,280 755,278 751,287" fill="#29b890"/>
<path d="M755,278 761,288 751,287" fill="#29b78f"/>
<path d="M755,278 763,279 761,288" fill="#29b68f"/>
<path d="M763,279 768,288 761,288" fill="#2bbf95"/>
<path d="M763,279 775,279 768,288" fill="#29b58e"/>
<path d="M775,279 779,286 768,288" fill="#29b78f"/>
<path d="M775,279 783,279 779,286" fill="#2abd94"/>
<path d="M783,279 787,288 779,286" fill="#29b790"/>
<path d="M783,279 794,278 787,288" fill="#2bbe95"/>
<path d="M794,278 799,286 787,288" fill="#29b890"/>
<path d="M794,278 804,278 799,286" fill="#2cc298"/>
<path d="M804,278 810,286 799,286" fill="#229877"/>
<path d="M804,278 815,279 810,286" fill="#229877"/>
<path d="M815,279 819,285 810,286" fill="#24a17e"/>
<path d="M815,279 826,277 819,285" fill="#229978"/>
<path d="M826,277 828,289 819,285" fill="#2dc89d"/>
<path d="M826,277 834,280 828,289" fill="#2abb93"/>
<path d="M834,280 839,286 828,289" fill="#1c7b61"/>
<path d="M834,280 845,279 839,286" fill="#29b68f"/>
<path d="M845,279 848,288 839,286" fill="#29b58e"/>
<path d="M845,279 855,277 848,288" fill="#2bbf96"/>
<path d="M855,277 858,289 848,288" fill="#2ecb9f"/>
<path d="M855,277 865,279 858,289" fill="#2dc89d"/>
<path d="M865,279 867,289 858,289" fill="#229978"/>
<path d="M865,279 874,278 867,289" fill="#28b38c"/>
<path d="M874,278 879,288 867,289" fill="#29b790"/>
<path d="M874,278 884,277 879,288" fill="#2ecb9f"/>
<path d="M884,277 888,285 879,288" fill="#2ecb9f"/>
<path d="M884,277 894,277 888,285" fill="#2ecb9f"/>
<path d="M894,277 898,288 888,285" fill="#2ecb9f"/>
<path d="M894,277 906,280 898,288" fill="#2ecb9f"/>
<path d="M906,280 907,286 898,288" fill="#2ecb9f"/>
<path d="M906,280 914,279 907,286" fill="#2cc49a"/>
<path d="M914,279 920,289 907,286" fill="#2ab991"/>
<path d="M914,279 924,278 920,289" fill="#2cc399"/>
<path d="M924,278 930,288 920,289" fill="#2ecb9f"/>
<path d="M924,278 933,280 930,288" fill="#229978"/>
<path d="M933,280 939,289 930,288" fill="#229676"/>
<path d="M933,280 945,279 939,289" fill="#2abb93"/>
<path d="M945,279 950,287 939,289" fill="#2aba92"/>
<path d="M945,279 952,280 950,287" fill="#239d7b"/>
<path d="M952,280 959,285 950,287" fill="#2ecb9f"/>
<path d="M952,280 962,279 959,285" fill="#2ecb9f"/>
<path d="M962,279 967,286 959,285" fill="#29b58e"/>
<path d="M962,279 974,277 967,286" fill="#2dc99d"/>
<path d="M974,277 979,286 967,286" fill="#2bbe95"/>
<path d="M974,277 984,280 979,286" fill="#2aba92"/>
<path d="M984,280 991,287 979,286" fill="#28b18b"/>
<path d="M984,280 994,278 991,287" fill="#29b68f"/>
<path d="M617,289 627,286 626,297" fill="#2bbd94"/>
<path d="M627,286 634,296 626,297" fill="#2abb93"/>
<path d="M627,286 640,286 634,296" fill="#2bbe95"/>
<path d="M640,286 642,295 634,296" fill="#29b790"/>
<path d="M640,286 649,289 642,295" fill="#2bbe95"/>
<path d="M649,289 654,297 642,295" fill="#28b38c"/>
<path d="M649,289 659,286 654,297" fill="#29b58e"/>
<path d="M659,286 662,298 654,297" fill="#2abc93"/>
<path d="M659,286 670,288 662,298" fill="#29b890"/>
<path d="M670,288 672,298 662,298" fill="#28b28c"/>
<path d="M670,288 679,288 672,298" fill="#29b58e"/>
<path d="M679,288 683,297 672,298" fill="#2bc097"/>
<path d="M679,288 688,287 683,297" fill="#2cc399"/>
<path d="M688,287 695,298 683,297" fill="#2ecb9f"/>
<path d="M688,287 701,289 695,298" fill="#2cc399"/>
<path d="M701,289 704,297 695,298" fill="#2bbe95"/>
<path d="M701,289 707,286 704,297" fill="#29b58e"/>
<path d="M707,286 713,297 704,297" fill="#29b790"/>
<path d="M707,286 718,288 713,297" fill="#2bbe95"/>
<path d="M718,288 722,297 713,297" fill="#2abc93"/>
<path d="M718,288 728,286 722,297" fill="#2aba91"/>
<path d="M728,286 734,294 722,297" fill="#2aba91"/>
<path d="M728,286 740,286 734,294" fill="#29b78f"/>
<path d="M740,286 746,295 734,294" fill="#28b28c"/>
<path d="M740,286 751,287 746,295" fill="#29b58e"/>
<path d="M751,287 752,295 746,295" fill="#29b68f"/>
<path d="M751,287 761,288 752,295" fill="#28b28c"/>
<path d="M761,288 762,295 752,295" fill="#29b78f"/>
<path d="M761,288 768,288 762,295" fill="#29b68f"/>
<path d="M768,288 775,298 762,295" fill="#29b890"/>
<path d="M768,288 779,286 775,298" fill="#29b890"/>
<path d="M779,286 785,297 775,298" fill="#2cc59b"/>
<path d="M779,286 787,288 785,297" fill="#2abb92"/>
<path d="M787,288 795,297 785,297" fill="#2ecb9f"/>
<path d="M787,288 799,286 795,297" fill="#26ab86"/>
<path d="M799,286 804,295 795,297" fill="#2dca9e"/>
<path d="M799,286 810,286 804,295" fill="#2abc93"/>
<path d="M810,286 813,296 804,295" fill="#2ab991"/>
<path d="M810,286 819,285 813,296" fill="#2cc298"/>
<path d="M819,285 823,297 813,296" fill="#1e8467"/>
<path d="M819,285 828,289 823,297" fill="#1e876a"/>
<path d="M828,289 833,296 823,297" fill="#29b68e"/>
<path d="M828,289 839,286 833,296" fill="#27af89"/>
<path d="M839,286 844,296 833,296" fill="#2abd94"/>
<path d="M839,286 848,288 844,296" fill="#28b28c"/>
<path d="M848,288 853,295 844,296" fill="#2bbf95"/>
<path d="M848,288 858,289 853,295" fill="#2ecb9f"/>
<path d="M858,289 865,295 853,295" fill="#25a581"/>
<path d="M858,289 867,289 865,295" fill="#229a78"/>
<path d="M867,289 875,298 865,295" fill="#176650"/>
<path d="M867,289 879,288 875,298" fill="#24a27f"/>
<path d="M879,288 884,298 875,298" fill="#2cc197"/>
<path d="M879,288 888,285 884,298" fill="#2ecb9f"/>
<path d="M888,285 894,298 884,298" fill="#2ecb9f"/>
<path d="M888,285 898,288 894,298" fill="#2ecb9f"/>
<path d="M898,288 904,297 894,298" fill="#2dc89d"/>
<path d="M898,288 907,286 904,297" fill="#2ecb9f"/>
<path d="M907,286 915,295 904,297" fill="#2ab991"/>
<path d="M907,286 920,289 915,295" fill="#2abc93"/>
<path d="M920,289 924,296 915,295" fill="#2ecb9f"/>
<path d="M920,289 930,288 924,296" fill="#2ecb9f"/>
<path d="M930,288 934,296 924,296" fill="#229978"/>
<path d="M930,288 939,289 934,296" fill="#28b28b"/>
<path d="M939,289 946,297 934,296" fill="#2dca9e"/>
<path d="M939,289 950,287 946,297" fill="#229575"/>
<path d="M950,287 955,294 946,297" fill="#2dca9e"/>
<path d="M950,287 959,285 955,294" fill="#2ecb9f"/>
<path d="M959,285 965,296 955,294" fill="#29b58e"/>
<path d="M959,285 967,286 965,296" fill="#2ecb9f"/>
<path d="M967,286 976,294 965,296" fill="#2ecb9f"/>
<path d="M967,286 979,286 976,294" fill="#2cc499"/>
<path d="M979,286 983,298 976,294" fill="#2abb93"/>
<path d="M979,286 991,287 983,298" fill="#2bbe94"/>
<path d="M991,287 993,297 983,298" fill="#29b78f"/>
<path d="M626,297 630,304 621,305" fill="#2abb93"/>
<path d="M626,297 634,296 630,304" fill="#2bbe95"/>
<path d="M634,296 640,305 630,304" fill="#29b890"/>
<path d="M634,296 642,295 640,305" fill="#29b58e"/>
<path d="M642,295 650,306 640,305" fill="#2abc93"/>
<path d="M642,295 654,297 650,306" fill="#29b890"/>
<path d="M654,297 657,306 650,306" fill="#28b28b"/>
<path d="M654,297 662,298 657,306" fill="#2abd94"/>
<path d="M662,298 669,304 657,306" fill="#29b58e"/>
<path d="M662,298 672,298 669,304" fill="#2bc096"/>
<path d="M672,298 679,303 669,304" fill="#2dc79c"/>
<path d="M672,298 683,297 679,303" fill="#2ecb9f"/>
<path d="M683,297 688,306 679,303" fill="#2ecb9f"/>
<path d="M683,297 695,298 688,306" fill="#2ecb9f"/>
<path d="M695,298 700,306 688,306" fill="#2ecb9f"/>
<path d="M695,298 704,297 700,306" fill="#2dc99e"/>
<path d="M704,297 708,303 700,306" fill="#2abb92"/>
<path d="M704,297 713,297 708,303" fill="#2abb93"/>
<path d="M713,297 719,304 708,303" fill="#2bbf95"/>
<path d="M713,297 722,297 719,304" fill="#28b48d"/>
<path d="M722,297 730,304 719,304" fill="#2bbe95"/>
<path d="M722,297 734,294 730,304" fill="#2bbe95"/>
<path d="M734,294 740,305 730,304" fill="#2abb93"/>
<path d="M734,294 746,295 740,305" fill="#28b38c"/>
<path d="M746,295 748,306 740,305" fill="#2cc298"/>
<path d="M746,295 752,295 748,306" fill="#29b68f"/>
<path d="M752,295 757,305 748,306" fill="#2dc99d"/>
<path d="M752,295 762,295 757,305" fill="#2ab991"/>
<path d="M762,295 768,303 757,305" fill="#2ecb9f"/>
<path d="M762,295 775,298 768,303" fill="#2ecb9f"/>
<path d="M775,298 779,305 768,303" fill="#27ad88"/>
<path d="M775,298 785,297 779,305" fill="#2bbe94"/>
<path d="M785,297 789,304 779,305" fill="#1d8266"/>
<path d="M785,297 795,297 789,304" fill="#208f70"/>
<path d="M795,297 801,306 789,304" fill="#219373"/>
<path d="M795,297 804,295 801,306" fill="#1d8165"/>
<path d="M804,295 808,303 801,306" fill="#24a27f"/>
<path d="M804,295 813,296 808,303" fill="#1f8c6d"/>
<path d="M813,296 821,304 808,303" fill="#28b18b"/>
<path d="M813,296 823,297 821,304" fill="#28b28b"/>
<path d="M823,297 827,303 821,304" fill="#29b78f"/>
<path d="M823,297 833,296 827,303" fill="#29b48d"/>
<path d="M833,296 840,303 827,303" fill="#2aba92"/>
<path d="M833,296 844,296 840,303" fill="#2ab991"/>
<path d="M844,296 848,305 840,303" fill="#2bbe95"/>
<path d="M844,296 853,295 848,305" fill="#2dca9e"/>
<path d="M853,295 858,305 848,305" fill="#2ecb9f"/>
<path d="M853,295 865,295 858,305" fill="#219474"/>
<path d="M865,295 871,306 858,305" fill="#176851"/>
<path d="M865,295 875,298 871,306" fill="#239b79"/>
<path d="M875,298 880,305 871,306" fill="#2ecb9f"/>
<path d="M875,298 884,298 880,305" fill="#2ecb9f"/>
<path d="M884,298 888,305 880,305" fill="#2ecb9f"/>
<path d="M884,298 894,298 888,305" fill="#2ecb9f"/>
<path d="M894,298 900,305 888,305" fill="#2dc89d"/>
<path d="M894,298 904,297 900,305" fill="#2cc49a"/>
<path d="M904,297 909,306 900,305" fill="#2cc399"/>
<path d="M904,297 915,295 909,306" fill="#2cc399"/>
<path d="M915,295 918,305 909,306" fill="#2ecb9f"/>
<path d="M915,295 924,296 918,305" fill="#2ecb9f"/>
<path d="M924,296 931,303 918,305" fill="#27ac87"/>
<path d="M924,296 934,296 931,303" fill="#25a581"/>
<path d="M934,296 938,306 931,303" fill="#2ecb9f"/>
<path d="M934,296 946,297 938,306" fill="#28b28b"/>
<path d="M946,297 947,306 938,306" fill="#28b48d"/>
<path d="M946,297 955,294 947,306" fill="#2ecb9f"/>
<path d="M955,294 959,303 947,306" fill="#209070"/>
<path d="M955,294 965,296 959,303" fill="#2ab991"/>
<path d="M965,296 970,303 959,303" fill="#2ecb9f"/>
<path d="M965,296 976,294 970,303" fill="#2ecb9f"/>
<path d="M976,294 980,304 970,303" fill="#2ecb9f"/>
<path d="M976,294 983,298 980,304" fill="#2dc79c"/>
<path d="M983,298 991,306 980,304" fill="#2bbe95"/>
<path d="M983,298 993,297 991,306" fill="#2abc93"/>
<path d="M621,305 623,312 612,315" fill="#2abb92"/>
<path d="M621,305 630,304 623,312" fill="#2bbd94"/>
<path d="M630,304 634,313 623,312" fill="#2aba92"/>
<path d="M630,304 640,305 634,313" fill="#2ab991"/>
<path d="M640,305 644,315 634,313" fill="#2abc93"/>
<path d="M640,305 650,306 644,315" fill="#29b78f"/>
<path d="M650,306 653,313 644,315" fill="#29b790"/>
<path d="M650,306 657,306 653,313" fill="#28b38c"/>
<path d="M657,306 665,312 653,313" fill="#2abb92"/>
<path d="M657,306 669,304 665,312" fill="#2bbe95"/>
<path d="M669,304 673,315 665,312" fill="#2ecb9f"/>
<path d="M669,304 679,303 673,315" fill="#2ecb9f"/>
<path d="M679,303 683,315 673,315" fill="#2ecb9f"/>
<path d="M679,303 688,306 683,315" fill="#2ecb9f"/>
<path d="M688,306 695,313 683,315" fill="#2ecb9f"/>
<path d="M688,306 700,306 695,313" fill="#2ecb9f"/>
<path d="M700,306 703,312 695,313" fill="#2ecb9f"/>
<path d="M700,306 708,303 703,312" fill="#2dc89d"/>
<path d="M708,303 715,313 703,312" fill="#2ecb9f"/>
<path d="M708,303 719,304 715,313" fill="#2dc99d"/>
<path d="M719,304 723,312 715,313" fill="#2ecb9f"/>
<path d="M719,304 730,304 723,312" fill="#2ecb9f"/>
<path d="M730,304 733,315 723,312" fill="#2cc399"/>
<path d="M730,304 740,305 733,315" fill="#2ecb9f"/>
<path d="M740,305 743,313 733,315" fill="#2cc298"/>
<path d="M740,305 748,306 743,313" fill="#2ecb9f"/>
<path d="M748,306 754,313 743,313" fill="#125341"/>
<path d="M748,306 757,305 754,313" fill="#239b7a"/>
<path d="M757,305 764,313 754,313" fill="#1f896c"/>
<path d="M757,305 768,303 764,313" fill="#208d6e"/>
<path d="M768,303 773,314 764,313" fill="#25a37f"/>
<path d="M768,303 779,305 773,314" fill="#1f8b6d"/>
<path d="M779,305 786,313 773,314" fill="#2aba92"/>
<path d="M779,305 789,304 786,313" fill="#28b18b"/>
<path d="M789,304 793,315 786,313" fill="#28b18b"/>
<path d="M789,304 801,306 793,315" fill="#28b48d"/>
<path d="M801,306 803,312 793,315" fill="#27ae89"/>
<path d="M801,306 808,303 803,312" fill="#28b18b"/>
<path d="M808,303 815,315 803,312" fill="#29b890"/>
<path d="M808,303 821,304 815,315" fill="#2aba92"/>
<path d="M821,304 824,312 815,315" fill="#2bc197"/>
<path d="M821,304 827,303 824,312" fill="#2bbf96"/>
<path d="M827,303 836,312 824,312" fill="#2bbd94"/>
<path d="M827,303 840,303 836,312" fill="#29b68f"/>
<path d="M840,303 843,315 836,312" fill="#29b78f"/>
<path d="M840,303 848,305 843,315" fill="#2abc93"/>
<path d="M848,305 855,314 843,315" fill="#2ecb9f"/>
<path d="M848,305 858,305 855,314" fill="#229877"/>
<path d="M858,305 862,315 855,314" fill="#135341"/>
<path d="M858,305 871,306 862,315" fill="#208f70"/>
<path d="M871,306 874,311 862,315" fill="#2dc79c"/>
<path d="M871,306 880,305 874,311" fill="#2ecb9f"/>
<path d="M880,305 885,315 874,311" fill="#2ecb9f"/>
<path d="M880,305 888,305 885,315" fill="#2ecb9f"/>
<path d="M888,305 892,313 885,315" fill="#2ecb9f"/>
<path d="M888,305 900,305 892,313" fill="#2dc99e"/>
<path d="M900,305 906,313 892,313" fill="#2cc399"/>
<path d="M900,305 909,306 906,313" fill="#2aba91"/>
<path d="M909,306 913,314 906,313" fill="#2dc79c"/>
<path d="M909,306 918,305 913,314" fill="#2ecb9f"/>
<path d="M918,305 924,315 913,314" fill="#28b38c"/>
<path d="M918,305 931,303 924,315" fill="#208f70"/>
<path d="M931,303 935,315 924,315" fill="#2ecb9f"/>
<path d="M931,303 938,306 935,315" fill="#2cc298"/>
<path d="M938,306 945,312 935,315" fill="#27af89"/>
<path d="M938,306 947,306 945,312" fill="#2bc096"/>
<path d="M947,306 955,314 945,312" fill="#1e8568"/>
<path d="M947,306 959,303 955,314" fill="#25a682"/>
<path d="M959,303 964,313 955,314" fill="#2eca9f"/>
<path d="M959,303 970,303 964,313" fill="#2ecb9f"/>
<path d="M970,303 973,312 964,313" fill="#2cc298"/>
<path d="M970,303 980,304 973,312" fill="#2eca9e"/>
<path d="M980,304 986,313 973,312" fill="#29b890"/>
<path d="M980,304 991,306 986,313" fill="#29b68f"/>
<path d="M612,315 618,323 608,320" fill="#2bbf95"/>
<path d="M612,315 623,312 618,323" fill="#29b68e"/>
<path d="M623,312 628,324 618,323" fill="#2ab991"/>
<path d="M623,312 634,313 628,324" fill="#29b48d"/>
<path d="M634,313 638,323 628,324" fill="#28b08a"/>
<path d="M634,313 644,315 638,323" fill="#2ab991"/>
<path d="M644,315 648,322 638,323" fill="#29b78f"/>
<path d="M644,315 653,313 648,322" fill="#28b38c"/>
<path d="M653,313 658,320 648,322" fill="#28b28c"/>
<path d="M653,313 665,312 658,320" fill="#2abd94"/>
<path d="M665,312 669,321 658,320" fill="#2ab991"/>
<path d="M665,312 673,315 669,321" fill="#2cc59a"/>
<path d="M673,315 679,321 669,321" fill="#2cc399"/>
<path d="M673,315 683,315 679,321" fill="#2ecb9f"/>
<path d="M683,315 688,321 679,321" fill="#208e6f"/>
<path d="M683,315 695,313 688,321" fill="#26aa85"/>
<path d="M695,313 701,320 688,321" fill="#1e8568"/>
<path d="M695,313 703,312 701,320" fill="#25a682"/>
<path d="M703,312 709,323 701,320" fill="#219172"/>
<path d="M703,312 715,313 709,323" fill="#1d8366"/>
<path d="M715,313 719,321 709,323" fill="#25a682"/>
<path d="M715,313 723,312 719,321" fill="#208d6f"/>
<path d="M723,312 731,320 719,321" fill="#28b08a"/>
<path d="M723,312 733,315 731,320" fill="#27ae88"/>
<path d="M733,315 738,320 731,320" fill="#28b38c"/>
<path d="M733,315 743,313 738,320" fill="#1f8b6d"/>
<path d="M743,313 749,323 738,320" fill="#1a725a"/>
<path d="M743,313 754,313 749,323" fill="#1e876a"/>
<path d="M754,313 758,321 749,323" fill="#29b48d"/>
<path d="M754,313 764,313 758,321" fill="#28b18b"/>
<path d="M764,313 770,320 758,321" fill="#29b48d"/>
<path d="M764,313 773,314 770,320" fill="#2bbd94"/>
<path d="M773,314 777,323 770,320" fill="#2aba92"/>
<path d="M773,314 786,313 777,323" fill="#29b890"/>
<path d="M786,313 787,322 777,323" fill="#29b68e"/>
<path d="M786,313 793,315 787,322" fill="#27af89"/>
<path d="M793,315 798,322 787,322" fill="#28b38d"/>
<path d="M793,315 803,312 798,322" fill="#28b28c"/>
<path d="M803,312 810,322 798,322" fill="#2ecb9f"/>
<path d="M803,312 815,315 810,322" fill="#2ecb9f"/>
<path d="M815,315 818,322 810,322" fill="#2ecb9f"/>
<path d="M815,315 824,312 818,322" fill="#2dc89d"/>
<path d="M824,312 830,320 818,322" fill="#2cc499"/>
<path d="M824,312 836,312 830,320" fill="#2bc197"/>
<path d="M836,312 838,321 830,320" fill="#2bc096"/>
<path d="M836,312 843,315 838,321" fill="#29b58e"/>
<path d="M843,315 849,321 838,321" fill="#2ecb9f"/>
<path d="M843,315 855,314 849,321" fill="#2ecb9f"/>
<path d="M855,314 860,321 849,321" fill="#16634d"/>
<path d="M855,314 862,315 860,321" fill="#1e886a"/>
<path d="M862,315 871,321 860,321" fill="#29b58e"/>
<path d="M862,315 874,311 871,321" fill="#2ecb9f"/>
<path d="M874,311 878,320 871,321" fill="#2ecb9f"/>
<path d="M874,311 885,315 878,320" fill="#2ecb9f"/>
<path d="M885,315 888,321 878,320" fill="#2ecb9f"/>
<path d="M885,315 892,313 888,321" fill="#2ecb9f"/>
<path d="M892,313 901,322 888,321" fill="#2ecb9f"/>
<path d="M892,313 906,313 901,322" fill="#2bc197"/>
<path d="M906,313 909,324 901,322" fill="#2dc89d"/>
<path d="M906,313 913,314 909,324" fill="#2ecb9f"/>
<path d="M913,314 921,323 909,324" fill="#26a985"/>
<path d="M913,314 924,315 921,323" fill="#1c7c61"/>
<path d="M924,315 928,321 921,323" fill="#229776"/>
<path d="M924,315 935,315 928,321" fill="#29b68f"/>
<path d="M935,315 939,321 928,321" fill="#2cc298"/>
<path d="M935,315 945,312 939,321" fill="#27b08a"/>
<path d="M945,312 948,321 939,321" fill="#229978"/>
<path d="M945,312 955,314 948,321" fill="#2aba92"/>
<path d="M955,314 958,323 948,321" fill="#1e886a"/>
<path d="M955,314 964,313 958,323" fill="#1d7f64"/>
<path d="M964,313 969,322 958,323" fill="#29b58e"/>
<path d="M964,313 973,312 969,322" fill="#2bc197"/>
<path d="M973,312 979,322 969,322" fill="#2bc096"/>
<path d="M973,312 986,313 979,322" fill="#29b68f"/>
<path d="M986,313 990,320 979,322" fill="#29b48d"/>
<path d="M608,320 618,323 612,330" fill="#29b58e"/>
<path d="M618,323 624,330 612,330" fill="#2bbe95"/>
<path d="M618,323 628,324 624,330" fill="#28b28c"/>
<path d="M628,324 632,331 624,330" fill="#28b38c"/>
<path d="M628,324 638,323 632,331" fill="#28b18b"/>
<path d="M638,323 643,332 632,331" fill="#29b58e"/>
<path d="M638,323 648,322 643,332" fill="#2aba92"/>
<path d="M648,322 654,330 643,332" fill="#2bc197"/>
<path d="M648,322 658,320 654,330" fill="#2bc197"/>
<path d="M658,320 665,330 654,330" fill="#2cc499"/>
<path d="M658,320 669,321 665,330" fill="#2cc298"/>
<path d="M669,321 672,330 665,330" fill="#2abc93"/>
<path d="M669,321 679,321 672,330" fill="#2bbe95"/>
<path d="M679,321 682,330 672,330" fill="#29b890"/>
<path d="M679,321 688,321 682,330" fill="#28b08a"/>
<path d="M688,321 696,332 682,330" fill="#28b38c"/>
<path d="M688,321 701,320 696,332" fill="#2aba92"/>
<path d="M701,320 705,329 696,332" fill="#2bc197"/>
<path d="M701,320 709,323 705,329" fill="#2dc69b"/>
<path d="M709,323 713,329 705,329" fill="#2ecb9f"/>
<path d="M709,323 719,321 713,329" fill="#2dc89d"/>
<path d="M719,321 723,331 713,329" fill="#2ecb9f"/>
<path d="M719,321 731,320 723,331" fill="#2ecb9f"/>
<path d="M731,320 732,331 723,331" fill="#16644e"/>
<path d="M731,320 738,320 732,331" fill="#16614c"/>
<path d="M738,320 744,331 732,331" fill="#239a79"/>
<path d="M738,320 749,323 744,331" fill="#239d7b"/>
<path d="M749,323 755,330 744,331" fill="#2abb92"/>
<path d="M749,323 758,321 755,330" fill="#2cc398"/>
<path d="M758,321 764,330 755,330" fill="#2bc096"/>
<path d="M758,321 770,320 764,330" fill="#2abc93"/>
<path d="M770,320 774,331 764,330" fill="#2cc59a"/>
<path d="M770,320 777,323 774,331" fill="#2bbf95"/>
<path d="M777,323 782,331 774,331" fill="#29b78f"/>
<path d="M777,323 787,322 782,331" fill="#29b790"/>
<path d="M787,322 794,329 782,331" fill="#2bbf96"/>
<path d="M787,322 798,322 794,329" fill="#29b78f"/>
<path d="M798,322 803,332 794,329" fill="#2dc89d"/>
<path d="M798,322 810,322 803,332" fill="#2ecb9f"/>
<path d="M810,322 813,329 803,332" fill="#2ecb9f"/>
<path d="M810,322 818,322 813,329" fill="#2ecb9f"/>
<path d="M818,322 823,331 813,329" fill="#2ecb9f"/>
<path d="M818,322 830,320 823,331" fill="#2dc79c"/>
<path d="M830,320 834,330 823,331" fill="#2bc096"/>
<path d="M830,320 838,321 834,330" fill="#2bbe95"/>
<path d="M838,321 843,329 834,330" fill="#2eca9e"/>
<path d="M838,321 849,321 843,329" fill="#2ecb9f"/>
<path d="M849,321 854,331 843,329" fill="#1a755b"/>
<path d="M849,321 860,321 854,331" fill="#104a3a"/>
<path d="M860,321 862,331 854,331" fill="#26a984"/>
<path d="M860,321 871,321 862,331" fill="#2bc197"/>
<path d="M871,321 873,333 862,331" fill="#2ecb9f"/>
<path d="M871,321 878,320 873,333" fill="#2ecb9f"/>
<path d="M878,320 886,329 873,333" fill="#2ecb9f"/>
<path d="M878,320 888,321 886,329" fill="#2ecb9f"/>
<path d="M888,321 895,330 886,329" fill="#2ecb9f"/>
<path d="M888,321 901,322 895,330" fill="#2ecb9f"/>
<path d="M901,322 902,332 895,330" fill="#2bc096"/>
<path d="M901,322 909,324 902,332" fill="#2ecb9f"/>
<path d="M909,324 916,332 902,332" fill="#27af89"/>
<path d="M909,324 921,323 916,332" fill="#186c55"/>
<path d="M921,323 925,333 916,332" fill="#219575"/>
<path d="M921,323 928,321 925,333" fill="#27af89"/>
<path d="M928,321 934,331 925,333" fill="#29b890"/>
<path d="M928,321 939,321 934,331" fill="#2bbf95"/>
<path d="M939,321 945,332 934,331" fill="#2cc197"/>
<path d="M939,321 948,321 945,332" fill="#25a37f"/>
<path d="M948,321 955,330 945,332" fill="#229a78"/>
<path d="M948,321 958,323 955,330" fill="#249f7d"/>
<path d="M958,323 963,331 955,330" fill="#29b890"/>
<path d="M958,323 969,322 963,331" fill="#29b68e"/>
<path d="M969,322 974,330 963,331" fill="#29b68e"/>
<path d="M969,322 979,322 974,330" fill="#2ab991"/>
<path d="M979,322 985,332 974,330" fill="#28b38c"/>
<path d="M979,322 990,320 985,332" fill="#28b28b"/>
<path d="M612,330 621,340 610,338" fill="#2abb92"/>
<path d="M612,330 624,330 621,340" fill="#2bbe95"/>
<path d="M624,330 628,338 621,340" fill="#2aba92"/>
<path d="M624,330 632,331 628,338" fill="#28b18b"/>
<path d="M632,331 639,339 628,338" fill="#29b58e"/>
<path d="M632,331 643,332 639,339" fill="#29b890"/>
<path d="M643,332 650,338 639,339" fill="#2ecb9f"/>
<path d="M643,332 654,330 650,338" fill="#2ecb9f"/>
<path d="M654,330 661,339 650,338" fill="#2ecb9f"/>
<path d="M654,330 665,330 661,339" fill="#2dca9e"/>
<path d="M665,330 669,340 661,339" fill="#2ecb9f"/>
<path d="M665,330 672,330 669,340" fill="#2cc49a"/>
<path d="M672,330 679,339 669,340" fill="#29b890"/>
<path d="M672,330 682,330 679,339" fill="#2bbe95"/>
<path d="M682,330 688,339 679,339" fill="#2bbf95"/>
<path d="M682,330 696,332 688,339" fill="#2ab991"/>
<path d="M696,332 697,338 688,339" fill="#2dc99d"/>
<path d="M696,332 705,329 697,338" fill="#2ecb9f"/>
<path d="M705,329 710,338 697,338" fill="#2ecb9f"/>
<path d="M705,329 713,329 710,338" fill="#2ecb9f"/>
<path d="M713,329 717,341 710,338" fill="#2cc59a"/>
<path d="M713,329 723,331 717,341" fill="#229877"/>
<path d="M723,331 728,339 717,341" fill="#229676"/>
<path d="M723,331 732,331 728,339" fill="#239c7a"/>
<path d="M732,331 739,340 728,339" fill="#28b38d"/>
<path d="M732,331 744,331 739,340" fill="#28b38c"/>
<path d="M744,331 748,340 739,340" fill="#2cc59a"/>
<path d="M744,331 755,330 748,340" fill="#2cc197"/>
<path d="M755,330 757,341 748,340" fill="#2ecb9f"/>
<path d="M755,330 764,330 757,341" fill="#2ecb9f"/>
<path d="M764,330 768,340 757,341" fill="#2ecb9f"/>
<path d="M764,330 774,331 768,340" fill="#2dc69b"/>
<path d="M774,331 778,340 768,340" fill="#2bbf95"/>
<path d="M774,331 782,331 778,340" fill="#2bbd94"/>
<path d="M782,331 789,340 778,340" fill="#2ab991"/>
<path d="M782,331 794,329 789,340" fill="#29b890"/>
<path d="M794,329 798,341 789,340" fill="#2bbe95"/>
<path d="M794,329 803,332 798,341" fill="#2ecb9f"/>
<path d="M803,332 810,338 798,341" fill="#2eca9f"/>
<path d="M803,332 813,329 810,338" fill="#2ecb9f"/>
<path d="M813,329 820,341 810,338" fill="#2dc99e"/>
<path d="M813,329 823,331 820,341" fill="#2dc79b"/>
<path d="M823,331 828,338 820,341" fill="#2abb93"/>
<path d="M823,331 834,330 828,338" fill="#2bbf95"/>
<path d="M834,330 841,341 828,338" fill="#2ecb9f"/>
<path d="M834,330 843,329 841,341" fill="#2ecb9f"/>
<path d="M843,329 848,340 841,341" fill="#186d55"/>
<path d="M843,329 854,331 848,340" fill="#197158"/>
<path d="M854,331 861,338 848,340" fill="#29b890"/>
<path d="M854,331 862,331 861,338" fill="#2bc096"/>
<path d="M862,331 870,338 861,338" fill="#2ecb9f"/>
<path d="M862,331 873,333 870,338" fill="#2ecb9f"/>
<path d="M873,333 880,339 870,338" fill="#2ecb9f"/>
<path d="M873,333 886,329 880,339" fill="#2ecb9f"/>
<path d="M886,329 889,338 880,339" fill="#2ecb9f"/>
<path d="M886,329 895,330 889,338" fill="#2dc99e"/>
<path d="M895,330 900,340 889,338" fill="#2eca9e"/>
<path d="M895,330 902,332 900,340" fill="#2ecb9f"/>
<path d="M902,332 908,337 900,340" fill="#2abc94"/>
<path d="M902,332 916,332 908,337" fill="#1d8065"/>
<path d="M916,332 917,338 908,337" fill="#1e8669"/>
<path d="M916,332 925,333 917,338" fill="#27ac87"/>
<path d="M925,333 931,340 917,338" fill="#2ecb9f"/>
<path d="M925,333 934,331 931,340" fill="#2ecb9f"/>
<path d="M934,331 941,340 931,340" fill="#239a79"/>
<path d="M934,331 945,332 941,340" fill="#229776"/>
<path d="M945,332 948,339 941,340" fill="#2cc298"/>
<path d="M945,332 955,330 948,339" fill="#2bbf96"/>
<path d="M955,330 961,341 948,339" fill="#2ab991"/>
<path d="M955,330 963,331 961,341" fill="#2bbf96"/>
<path d="M963,331 971,341 961,341" fill="#29b78f"/>
<path d="M963,331 974,330 971,341" fill="#2abc93"/>
<path d="M974,330 980,340 971,341" fill="#29b58e"/>
<path d="M974,330 985,332 980,340" fill="#29b58e"/>
<path d="M985,332 991,339 980,340" fill="#29b890"/>
<path d="M610,338 621,340 613,346" fill="#2ab991"/>
<path d="M621,340 623,348 613,346" fill="#2bbf96"/>
<path d="M621,340 628,338 623,348" fill="#29b58e"/>
<path d="M628,338 634,350 623,348" fill="#2abb93"/>
<path d="M628,338 639,339 634,350" fill="#2aba92"/>
<path d="M639,339 642,347 634,350" fill="#2ecb9f"/>
<path d="M639,339 650,338 642,347" fill="#2ecb9f"/>
<path d="M650,338 652,350 642,347" fill="#2ecb9f"/>
<path d="M650,338 661,339 652,350" fill="#2ecb9f"/>
<path d="M661,339 665,349 652,350" fill="#2ecb9f"/>
<path d="M661,339 669,340 665,349" fill="#2dc89d"/>
<path d="M669,340 675,346 665,349" fill="#2cc59a"/>
<path d="M669,340 679,339 675,346" fill="#2abb92"/>
<path d="M679,339 686,347 675,346" fill="#29b890"/>
<path d="M679,339 688,339 686,347" fill="#29b58e"/>
<path d="M688,339 695,348 686,347" fill="#2ecb9f"/>
<path d="M688,339 697,338 695,348" fill="#2ecb9f"/>
<path d="M697,338 705,347 695,348" fill="#2ecb9f"/>
<path d="M697,338 710,338 705,347" fill="#2ecb9f"/>
<path d="M710,338 713,347 705,347" fill="#1f896b"/>
<path d="M710,338 717,341 713,347" fill="#1f896b"/>
<path d="M717,341 725,348 713,347" fill="#2cc298"/>
<path d="M717,341 728,339 725,348" fill="#2bbf96"/>
<path d="M728,339 733,347 725,348" fill="#29b68f"/>
<path d="M728,339 739,340 733,347" fill="#2abc93"/>
<path d="M739,340 744,347 733,347" fill="#2cc499"/>
<path d="M739,340 748,340 744,347" fill="#2ecb9f"/>
<path d="M748,340 754,349 744,347" fill="#2ecb9f"/>
<path d="M748,340 757,341 754,349" fill="#2ecb9f"/>
<path d="M757,341 765,349 754,349" fill="#2ecb9f"/>
<path d="M757,341 768,340 765,349" fill="#2ecb9f"/>
<path d="M768,340 773,349 765,349" fill="#28b48d"/>
<path d="M768,340 778,340 773,349" fill="#2ab991"/>
<path d="M778,340 786,348 773,349" fill="#29b78f"/>
<path d="M778,340 789,340 786,348" fill="#2abc93"/>
<path d="M789,340 792,346 786,348" fill="#2dc69b"/>
<path d="M789,340 798,341 792,346" fill="#2bc096"/>
<path d="M798,341 805,349 792,346" fill="#2dc89d"/>
<path d="M798,341 810,338 805,349" fill="#2bc097"/>
<path d="M810,338 815,348 805,349" fill="#2ecb9f"/>
<path d="M810,338 820,341 815,348" fill="#2cc49a"/>
<path d="M820,341 824,346 815,348" fill="#2ecb9f"/>
<path d="M820,341 828,338 824,346" fill="#2ecb9f"/>
<path d="M828,338 834,350 824,346" fill="#2abb92"/>
<path d="M828,338 841,341 834,350" fill="#208d6f"/>
<path d="M841,341 843,348 834,350" fill="#249e7c"/>
<path d="M841,341 848,340 843,348" fill="#24a07d"/>
<path d="M848,340 855,349 843,348" fill="#29b890"/>
<path d="M848,340 861,338 855,349" fill="#29b78f"/>
<path d="M861,338 863,347 855,349" fill="#2bc197"/>
<path d="M861,338 870,338 863,347" fill="#2bc096"/>
<path d="M870,338 875,350 863,347" fill="#2cc298"/>
<path d="M870,338 880,339 875,350" fill="#2ecb9f"/>
<path d="M880,339 886,348 875,350" fill="#2dc69b"/>
<path d="M880,339 889,338 886,348" fill="#2ecb9f"/>
<path d="M889,338 895,349 886,348" fill="#2ecb9f"/>
<path d="M889,338 900,340 895,349" fill="#2ecb9f"/>
<path d="M900,340 904,349 895,349" fill="#239b79"/>
<path d="M900,340 908,337 904,349" fill="#1a765c"/>
<path d="M908,337 914,347 904,349" fill="#24a17e"/>
<path d="M908,337 917,338 914,347" fill="#25a783"/>
<path d="M917,338 922,349 914,347" fill="#2ecb9f"/>
<path d="M917,338 931,340 922,349" fill="#2ecb9f"/>
<path d="M931,340 935,346 922,349" fill="#28b18a"/>
<path d="M931,340 941,340 935,346" fill="#2ecb9f"/>
<path d="M941,340 942,347 935,346" fill="#2ecb9f"/>
<path d="M941,340 948,339 942,347" fill="#2ecb9f"/>
<path d="M948,339 953,349 942,347" fill="#2cc499"/>
<path d="M948,339 961,341 953,349" fill="#2abd94"/>
<path d="M961,341 963,348 953,349" fill="#29b68f"/>
<path d="M961,341 971,341 963,348" fill="#2ab991"/>
<path d="M971,341 974,347 963,348" fill="#2aba92"/>
<path d="M971,341 980,340 974,347" fill="#29b58e"/>
<path d="M980,340 985,348 974,347" fill="#2aba91"/>
<path d="M980,340 991,339 985,348" fill="#2abb92"/>
<path d="M623,348 634,350 629,356" fill="#27af89"/>
<path d="M634,350 637,357 629,356" fill="#2abc93"/>
<path d="M634,350 642,347 637,357" fill="#2cc499"/>
<path d="M642,347 651,355 637,357" fill="#2dc99e"/>
<path d="M642,347 652,350 651,355" fill="#2ecb9f"/>
<path d="M652,350 661,356 651,355" fill="#2dc69b"/>
<path d="M652,350 665,349 661,356" fill="#2cc298"/>
<path d="M665,349 671,358 661,356" fill="#2abb93"/>
<path d="M665,349 675,346 671,358" fill="#29b78f"/>
<path d="M675,346 678,356 671,358" fill="#2bc096"/>
<path d="M675,346 686,347 678,356" fill="#2cc69b"/>
<path d="M686,347 691,359 678,356" fill="#2ecb9f"/>
<path d="M686,347 695,348 691,359" fill="#2ecb9f"/>
<path d="M695,348 700,357 691,359" fill="#176650"/>
<path d="M695,348 705,347 700,357" fill="#196f57"/>
<path d="M705,347 709,358 700,357" fill="#27ad87"/>
<path d="M705,347 713,347 709,358" fill="#29b58e"/>
<path d="M713,347 720,358 709,358" fill="#29b890"/>
<path d="M713,347 725,348 720,358" fill="#2cc499"/>
<path d="M725,348 728,358 720,358" fill="#2ab991"/>
<path d="M725,348 733,347 728,358" fill="#2aba92"/>
<path d="M733,347 741,357 728,358" fill="#2bbe95"/>
<path d="M733,347 744,347 741,357" fill="#2bc097"/>
<path d="M744,347 747,355 741,357" fill="#2cc298"/>
<path d="M744,347 754,349 747,355" fill="#2ecb9f"/>
<path d="M754,349 760,356 747,355" fill="#2dc99e"/>
<path d="M754,349 765,349 760,356" fill="#2dc89d"/>
<path d="M765,349 771,357 760,356" fill="#2bc096"/>
<path d="M765,349 773,349 771,357" fill="#26aa85"/>
<path d="M773,349 780,355 771,357" fill="#26a884"/>
<path d="M773,349 786,348 780,355" fill="#28b28b"/>
<path d="M786,348 789,358 780,355" fill="#2ecb9f"/>
<path d="M786,348 792,346 789,358" fill="#2ecb9f"/>
<path d="M792,346 801,358 789,358" fill="#219373"/>
<path d="M792,346 805,349 801,358" fill="#28b48d"/>
<path d="M805,349 808,357 801,358" fill="#209071"/>
<path d="M805,349 815,348 808,357" fill="#27ae88"/>
<path d="M815,348 821,355 808,357" fill="#1c7e63"/>
<path d="M815,348 824,346 821,355" fill="#27af89"/>
<path d="M824,346 827,355 821,355" fill="#1d7f64"/>
<path d="M824,346 834,350 827,355" fill="#1f8c6e"/>
<path d="M834,350 840,356 827,355" fill="#2ecb9f"/>
<path d="M834,350 843,348 840,356" fill="#2cc399"/>
<path d="M843,348 850,358 840,356" fill="#2dc89c"/>
<path d="M843,348 855,349 850,358" fill="#29b890"/>
<path d="M855,349 860,355 850,358" fill="#2bc096"/>
<path d="M855,349 863,347 860,355" fill="#2abb93"/>
<path d="M863,347 870,358 860,355" fill="#2abb93"/>
<path d="M863,347 875,350 870,358" fill="#2abb92"/>
<path d="M875,350 880,358 870,358" fill="#2bbe95"/>
<path d="M875,350 886,348 880,358" fill="#2bc096"/>
<path d="M886,348 890,357 880,358" fill="#2ecb9f"/>
<path d="M886,348 895,349 890,357" fill="#2ecb9f"/>
<path d="M895,349 900,357 890,357" fill="#1c7b60"/>
<path d="M895,349 904,349 900,357" fill="#1b795f"/>
<path d="M904,349 907,356 900,357" fill="#186d55"/>
<path d="M904,349 914,347 907,356" fill="#219474"/>
<path d="M914,347 921,356 907,356" fill="#219474"/>
<path d="M914,347 922,349 921,356" fill="#208e6f"/>
<path d="M922,349 929,358 921,356" fill="#2ecb9f"/>
<path d="M922,349 935,346 929,358" fill="#2ecb9f"/>
<path d="M935,346 940,358 929,358" fill="#2ecb9f"/>
<path d="M935,346 942,347 940,358" fill="#2ecb9f"/>
<path d="M942,347 949,357 940,358" fill="#2cc59a"/>
<path d="M942,347 953,349 949,357" fill="#2bbe95"/>
<path d="M953,349 957,355 949,357" fill="#2bc096"/>
<path d="M953,349 963,348 957,355" fill="#29b48d"/>
<path d="M963,348 968,357 957,355" fill="#29b68f"/>
<path d="M963,348 974,347 968,357" fill="#28b28c"/>
<path d="M974,347 979,355 968,357" fill="#28b38c"/>
<path d="M974,347 985,348 979,355" fill="#29b78f"/>
<path d="M985,348 990,355 979,355" fill="#2ab991"/>
<path d="M629,356 637,357 633,365" fill="#229776"/>
<path d="M637,357 645,367 633,365" fill="#239e7c"/>
<path d="M637,357 651,355 645,367" fill="#2abd94"/>
<path d="M651,355 655,364 645,367" fill="#2dc69b"/>
<path d="M651,355 661,356 655,364" fill="#2cc59b"/>
<path d="M661,356 664,367 655,364" fill="#2bbe95"/>
<path d="M661,356 671,358 664,367" fill="#2ecb9f"/>
<path d="M671,358 675,365 664,367" fill="#29b58e"/>
<path d="M671,358 678,356 675,365" fill="#2ecb9f"/>
<path d="M678,356 683,364 675,365" fill="#1c7f63"/>
<path d="M678,356 691,359 683,364" fill="#1b785e"/>
<path d="M691,359 695,364 683,364" fill="#208f70"/>
<path d="M691,359 700,357 695,364" fill="#239d7b"/>
<path d="M700,357 706,364 695,364" fill="#2bbf95"/>
<path d="M700,357 709,358 706,364" fill="#2abc93"/>
<path d="M709,358 715,366 706,364" fill="#29b58e"/>
<path d="M709,358 720,358 715,366" fill="#2abb93"/>
<path d="M720,358 723,365 715,366" fill="#28b38c"/>
<path d="M720,358 728,358 723,365" fill="#2abc93"/>
<path d="M728,358 735,364 723,365" fill="#28b38c"/>
<path d="M728,358 741,357 735,364" fill="#2bbd94"/>
<path d="M741,357 744,366 735,364" fill="#2abb93"/>
<path d="M741,357 747,355 744,366" fill="#2bbe95"/>
<path d="M747,355 756,365 744,366" fill="#29b890"/>
<path d="M747,355 760,356 756,365" fill="#2bbf95"/>
<path d="M760,356 763,365 756,365" fill="#2cc298"/>
<path d="M760,356 771,357 763,365" fill="#2bbf96"/>
<path d="M771,357 774,365 763,365" fill="#2bbe95"/>
<path d="M771,357 780,355 774,365" fill="#2bbf95"/>
<path d="M780,355 786,364 774,365" fill="#2ecb9f"/>
<path d="M780,355 789,358 786,364" fill="#2dc99d"/>
<path d="M789,358 794,365 786,364" fill="#24a17e"/>
<path d="M789,358 801,358 794,365" fill="#27af89"/>
<path d="M801,358 803,365 794,365" fill="#2bc096"/>
<path d="M801,358 808,357 803,365" fill="#25a581"/>
<path d="M808,357 814,365 803,365" fill="#229777"/>
<path d="M808,357 821,355 814,365" fill="#25a380"/>
<path d="M821,355 825,367 814,365" fill="#2ecb9f"/>
<path d="M821,355 827,355 825,367" fill="#2ecb9f"/>
<path d="M827,355 836,364 825,367" fill="#2ecb9f"/>
<path d="M827,355 840,356 836,364" fill="#2ecb9f"/>
<path d="M840,356 843,367 836,364" fill="#2ecb9f"/>
<path d="M840,356 850,358 843,367" fill="#2bbf96"/>
<path d="M850,358 852,364 843,367" fill="#2bc097"/>
<path d="M850,358 860,355 852,364" fill="#29b78f"/>
<path d="M860,355 862,367 852,364" fill="#2cc49a"/>
<path d="M860,355 870,358 862,367" fill="#2eca9f"/>
<path d="M870,358 874,365 862,367" fill="#2dca9e"/>
<path d="M870,358 880,358 874,365" fill="#2ecb9f"/>
<path d="M880,358 882,367 874,365" fill="#1e886a"/>
<path d="M880,358 890,357 882,367" fill="#219373"/>
<path d="M890,357 896,366 882,367" fill="#1a765c"/>
<path d="M890,357 900,357 896,366" fill="#12503f"/>
<path d="M900,357 906,366 896,366" fill="#28b18b"/>
<path d="M900,357 907,356 906,366" fill="#26a984"/>
<path d="M907,356 913,364 906,366" fill="#28b38c"/>
<path d="M907,356 921,356 913,364" fill="#29b58e"/>
<path d="M921,356 923,364 913,364" fill="#2bc097"/>
<path d="M921,356 929,358 923,364" fill="#2bc197"/>
<path d="M929,358 933,364 923,364" fill="#2bc097"/>
<path d="M929,358 940,358 933,364" fill="#2dc79c"/>
<path d="M940,358 942,367 933,364" fill="#2bbd94"/>
<path d="M940,358 949,357 942,367" fill="#2abb93"/>
<path d="M949,357 955,367 942,367" fill="#29b790"/>
<path d="M949,357 957,355 955,367" fill="#2bbf96"/>
<path d="M957,355 963,365 955,367" fill="#29b890"/>
<path d="M957,355 968,357 963,365" fill="#2abc93"/>
<path d="M968,357 974,367 963,365" fill="#2abb92"/>
<path d="M968,357 979,355 974,367" fill="#29b78f"/>
<path d="M979,355 983,365 974,367" fill="#29b790"/>
<path d="M979,355 990,355 983,365" fill="#2ab991"/>
<path d="M990,355 994,367 983,365" fill="#2ab991"/>
<path d="M633,365 639,373 628,373" fill="#2aba91"/>
<path d="M633,365 645,367 639,373" fill="#27ae88"/>
<path d="M645,367 649,374 639,373" fill="#27af89"/>
<path d="M645,367 655,364 649,374" fill="#24a27f"/>
<path d="M655,364 659,375 649,374" fill="#239e7c"/>
<path d="M655,364 664,367 659,375" fill="#2abb92"/>
<path d="M664,367 670,373 659,375" fill="#29b78f"/>
<path d="M664,367 675,365 670,373" fill="#196f57"/>
<path d="M675,365 680,375 670,373" fill="#249f7c"/>
<path d="M675,365 683,364 680,375" fill="#208e70"/>
<path d="M683,364 689,374 680,375" fill="#2bbf96"/>
<path d="M683,364 695,364 689,374" fill="#2abb93"/>
<path d="M695,364 699,375 689,374" fill="#2abb92"/>
<path d="M695,364 706,364 699,375" fill="#29b68f"/>
<path d="M706,364 710,373 699,375" fill="#2bbe95"/>
<path d="M706,364 715,366 710,373" fill="#29b78f"/>
<path d="M715,366 720,375 710,373" fill="#29b890"/>
<path d="M715,366 723,365 720,375" fill="#27ae88"/>
<path d="M723,365 729,376 720,375" fill="#2bbd94"/>
<path d="M723,365 735,364 729,376" fill="#29b78f"/>
<path d="M735,364 738,374 729,376" fill="#2aba91"/>
<path d="M735,364 744,366 738,374" fill="#2bbe95"/>
<path d="M744,366 749,375 738,374" fill="#2ecb9f"/>
<path d="M744,366 756,365 749,375" fill="#2dca9e"/>
<path d="M756,365 758,375 749,375" fill="#2cc298"/>
<path d="M756,365 763,365 758,375" fill="#2bbd94"/>
<path d="M763,365 767,374 758,375" fill="#1f8a6c"/>
<path d="M763,365 774,365 767,374" fill="#2cc399"/>
<path d="M774,365 779,375 767,374" fill="#2ecb9f"/>
<path d="M774,365 786,364 779,375" fill="#2cc298"/>
<path d="M786,364 790,376 779,375" fill="#2ecb9f"/>
<path d="M786,364 794,365 790,376" fill="#2bbe95"/>
<path d="M794,365 798,376 790,376" fill="#2bc097"/>
<path d="M794,365 803,365 798,376" fill="#2eca9e"/>
<path d="M803,365 809,374 798,376" fill="#2aba92"/>
<path d="M803,365 814,365 809,374" fill="#26a883"/>
<path d="M814,365 817,376 809,374" fill="#197058"/>
<path d="M814,365 825,367 817,376" fill="#249f7c"/>
<path d="M825,367 828,373 817,376" fill="#2cc399"/>
<path d="M825,367 836,364 828,373" fill="#2ecb9f"/>
<path d="M836,364 838,373 828,373" fill="#2ecb9f"/>
<path d="M836,364 843,367 838,373" fill="#2ecb9f"/>
<path d="M843,367 848,373 838,373" fill="#2ecb9f"/>
<path d="M843,367 852,364 848,373" fill="#2ecb9f"/>
<path d="M852,364 859,374 848,373" fill="#26aa85"/>
<path d="M852,364 862,367 859,374" fill="#2ab991"/>
<path d="M862,367 870,376 859,374" fill="#229776"/>
<path d="M862,367 874,365 870,376" fill="#208d6e"/>
<path d="M874,365 881,374 870,376" fill="#29b48d"/>
<path d="M874,365 882,367 881,374" fill="#25a480"/>
<path d="M882,367 890,375 881,374" fill="#28b38d"/>
<path d="M882,367 896,366 890,375" fill="#2ab991"/>
<path d="M896,366 900,374 890,375" fill="#29b890"/>
<path d="M896,366 906,366 900,374" fill="#29b68e"/>
<path d="M906,366 908,375 900,374" fill="#2abc93"/>
<path d="M906,366 913,364 908,375" fill="#29b58e"/>
<path d="M913,364 920,374 908,375" fill="#2bbf95"/>
<path d="M913,364 923,364 920,374" fill="#2abc93"/>
<path d="M923,364 930,372 920,374" fill="#29b68f"/>
<path d="M923,364 933,364 930,372" fill="#2bbf95"/>
<path d="M933,364 940,376 930,372" fill="#2aba91"/>
<path d="M933,364 942,367 940,376" fill="#29b78f"/>
<path d="M942,367 951,373 940,376" fill="#29b48d"/>
<path d="M942,367 955,367 951,373" fill="#29b58d"/>
<path d="M955,367 960,375 951,373" fill="#2ab991"/>
<path d="M955,367 963,365 960,375" fill="#29b890"/>
<path d="M963,365 968,375 960,375" fill="#2bbe95"/>
<path d="M963,365 974,367 968,375" fill="#29b68f"/>
<path d="M974,367 978,373 968,375" fill="#2aba91"/>
<path d="M974,367 983,365 978,373" fill="#2bbd94"/>
<path d="M983,365 987,373 978,373" fill="#2abc93"/>
<path d="M983,365 994,367 987,373" fill="#2abb92"/>
<path d="M628,373 639,373 634,382" fill="#2bbd94"/>
<path d="M639,373 643,383 634,382" fill="#2aba92"/>
<path d="M639,373 649,374 643,383" fill="#2abd94"/>
<path d="M649,374 655,382 643,383" fill="#2aba92"/>
<path d="M649,374 659,375 655,382" fill="#25a682"/>
<path d="M659,375 663,383 655,382" fill="#26a985"/>
<path d="M659,375 670,373 663,383" fill="#26a783"/>
<path d="M670,373 675,383 663,383" fill="#28b48d"/>
<path d="M670,373 680,375 675,383" fill="#2bbf96"/>
<path d="M680,375 685,384 675,383" fill="#2ecb9f"/>
<path d="M680,375 689,374 685,384" fill="#2ecb9f"/>
<path d="M689,374 695,383 685,384" fill="#2ecb9f"/>
<path d="M689,374 699,375 695,383" fill="#2ecb9f"/>
<path d="M699,375 705,383 695,383" fill="#2cc59a"/>
<path d="M699,375 710,373 705,383" fill="#2abb92"/>
<path d="M710,373 713,381 705,383" fill="#29b48d"/>
<path d="M710,373 720,375 713,381" fill="#29b48d"/>
<path d="M720,375 724,384 713,381" fill="#2ecb9f"/>
<path d="M720,375 729,376 724,384" fill="#2ecb9f"/>
<path d="M729,376 735,382 724,384" fill="#2ecb9f"/>
<path d="M729,376 738,374 735,382" fill="#2ecb9f"/>
<path d="M738,374 744,381 735,382" fill="#2dc89d"/>
<path d="M738,374 749,375 744,381" fill="#2dc89d"/>
<path d="M749,375 754,383 744,381" fill="#1e886a"/>
<path d="M749,375 758,375 754,383" fill="#208d6e"/>
<path d="M758,375 765,384 754,383" fill="#29b890"/>
<path d="M758,375 767,374 765,384" fill="#29b58e"/>
<path d="M767,374 772,385 765,384" fill="#2ecb9f"/>
<path d="M767,374 779,375 772,385" fill="#29b890"/>
<path d="M779,375 783,385 772,385" fill="#26ab86"/>
<path d="M779,375 790,376 783,385" fill="#2ecb9f"/>
<path d="M790,376 796,382 783,385" fill="#2ecb9f"/>
<path d="M790,376 798,376 796,382" fill="#2cc298"/>
<path d="M798,376 803,381 796,382" fill="#27af89"/>
<path d="M798,376 809,374 803,381" fill="#28b28b"/>
<path d="M809,374 816,384 803,381" fill="#2bc197"/>
<path d="M809,374 817,376 816,384" fill="#29b78f"/>
<path d="M817,376 826,384 816,384" fill="#2dca9e"/>
<path d="M817,376 828,373 826,384" fill="#2ecb9f"/>
<path d="M828,373 833,384 826,384" fill="#229675"/>
<path d="M828,373 838,373 833,384" fill="#2cc398"/>
<path d="M838,373 843,382 833,384" fill="#1e8669"/>
<path d="M838,373 848,373 843,382" fill="#1f896c"/>
<path d="M848,373 854,384 843,382" fill="#26aa85"/>
<path d="M848,373 859,374 854,384" fill="#249e7c"/>
<path d="M859,374 863,383 854,384" fill="#29b68f"/>
<path d="M859,374 870,376 863,383" fill="#29b68e"/>
<path d="M870,376 874,384 863,383" fill="#2ab991"/>
<path d="M870,376 881,374 874,384" fill="#28b38c"/>
<path d="M881,374 884,382 874,384" fill="#2aba92"/>
<path d="M881,374 890,375 884,382" fill="#2aba92"/>
<path d="M890,375 894,383 884,382" fill="#29b58e"/>
<path d="M890,375 900,374 894,383" fill="#2bbe95"/>
<path d="M900,374 905,381 894,383" fill="#2abb92"/>
<path d="M900,374 908,375 905,381" fill="#2bbd94"/>
<path d="M908,375 913,381 905,381" fill="#29b890"/>
<path d="M908,375 920,374 913,381" fill="#2bbe95"/>
<path d="M920,374 924,384 913,381" fill="#29b58e"/>
<path d="M920,374 930,372 924,384" fill="#2ab991"/>
<path d="M930,372 934,383 924,384" fill="#2ab991"/>
<path d="M930,372 940,376 934,383" fill="#29b68f"/>
<path d="M940,376 946,384 934,383" fill="#29b890"/>
<path d="M940,376 951,373 946,384" fill="#2bbe95"/>
<path d="M951,373 953,382 946,384" fill="#28b28c"/>
<path d="M951,373 960,375 953,382" fill="#2abc93"/>
<path d="M960,375 964,382 953,382" fill="#28b48d"/>
<path d="M960,375 968,375 964,382" fill="#2ab991"/>
<path d="M968,375 974,381 964,382" fill="#2abb93"/>
<path d="M968,375 978,373 974,381" fill="#2ab991"/>
<path d="M978,373 984,384 974,381" fill="#2abd94"/>
<path d="M978,373 987,373 984,384" fill="#2abc94"/>
<path d="M987,373 993,381 984,384" fill="#28b28c"/>
<path d="M634,382 643,383 637,393" fill="#29b58e"/>
<path d="M643,383 648,390 637,393" fill="#2abc93"/>
<path d="M643,383 655,382 648,390" fill="#2abb92"/>
<path d="M655,382 661,392 648,390" fill="#29b890"/>
<path d="M655,382 663,383 661,392" fill="#28b18b"/>
<path d="M663,383 669,393 661,392" fill="#29b68f"/>
<path d="M663,383 675,383 669,393" fill="#26aa85"/>
<path d="M675,383 680,391 669,393" fill="#29b78f"/>
<path d="M675,383 685,384 680,391" fill="#2ecb9f"/>
<path d="M685,384 688,392 680,391" fill="#2ecb9f"/>
<path d="M685,384 695,383 688,392" fill="#2ecb9f"/>
<path d="M695,383 700,390 688,392" fill="#2ecb9f"/>
<path d="M695,383 705,383 700,390" fill="#2cc499"/>
<path d="M705,383 708,392 700,390" fill="#2dc89d"/>
<path d="M705,383 713,381 708,392" fill="#2bbf95"/>
<path d="M713,381 717,393 708,392" fill="#2ecb9f"/>
<path d="M713,381 724,384 717,393" fill="#2ecb9f"/>
<path d="M724,384 730,390 717,393" fill="#197259"/>
<path d="M724,384 735,382 730,390" fill="#27ac87"/>
<path d="M735,382 739,392 730,390" fill="#29b68e"/>
<path d="M735,382 744,381 739,392" fill="#27ae88"/>
<path d="M744,381 747,391 739,392" fill="#2dc69b"/>
<path d="M744,381 754,383 747,391" fill="#2abc93"/>
<path d="M754,383 760,391 747,391" fill="#2bbf95"/>
<path d="M754,383 765,384 760,391" fill="#2cc499"/>
<path d="M765,384 770,390 760,391" fill="#28b18a"/>
<path d="M765,384 772,385 770,390" fill="#219172"/>
<path d="M772,385 781,392 770,390" fill="#25a682"/>
<path d="M772,385 783,385 781,392" fill="#29b78f"/>
<path d="M783,385 789,390 781,392" fill="#2bc197"/>
<path d="M783,385 796,382 789,390" fill="#2cc399"/>
<path d="M796,382 798,390 789,390" fill="#2dc69b"/>
<path d="M796,382 803,381 798,390" fill="#27b08a"/>
<path d="M803,381 809,390 798,390" fill="#2ecb9f"/>
<path d="M803,381 816,384 809,390" fill="#2ecb9f"/>
<path d="M816,384 818,391 809,390" fill="#1d8367"/>
<path d="M816,384 826,384 818,391" fill="#1e876a"/>
<path d="M826,384 828,391 818,391" fill="#25a682"/>
<path d="M826,384 833,384 828,391" fill="#24a17e"/>
<path d="M833,384 839,390 828,391" fill="#2abc94"/>
<path d="M833,384 843,382 839,390" fill="#27af89"/>
<path d="M843,382 849,393 839,390" fill="#2ab991"/>
<path d="M843,382 854,384 849,393" fill="#28b48d"/>
<path d="M854,384 860,393 849,393" fill="#29b68e"/>
<path d="M854,384 863,383 860,393" fill="#2bbe95"/>
<path d="M863,383 867,392 860,393" fill="#2bbd94"/>
<path d="M863,383 874,384 867,392" fill="#2ab991"/>
<path d="M874,384 878,393 867,392" fill="#28b38c"/>
<path d="M874,384 884,382 878,393" fill="#2ab991"/>
<path d="M884,382 889,392 878,393" fill="#2bbe95"/>
<path d="M884,382 894,383 889,392" fill="#2bbd94"/>
<path d="M894,383 900,390 889,392" fill="#28b38c"/>
<path d="M894,383 905,381 900,390" fill="#29b58e"/>
<path d="M905,381 907,393 900,390" fill="#29b890"/>
<path d="M905,381 913,381 907,393" fill="#28b38c"/>
<path d="M913,381 920,391 907,393" fill="#29b78f"/>
<path d="M913,381 924,384 920,391" fill="#2ab991"/>
<path d="M924,384 927,390 920,391" fill="#29b58e"/>
<path d="M924,384 934,383 927,390" fill="#2abc93"/>
<path d="M934,383 940,392 927,390" fill="#2bbe95"/>
<path d="M934,383 946,384 940,392" fill="#29b58e"/>
<path d="M946,384 948,392 940,392" fill="#2ab991"/>
<path d="M946,384 953,382 948,392" fill="#2abb93"/>
<path d="M953,382 960,390 948,392" fill="#29b48d"/>
<path d="M953,382 964,382 960,390" fill="#2ab991"/>
<path d="M964,382 970,393 960,390" fill="#2ab991"/>
<path d="M964,382 974,381 970,393" fill="#2abd94"/>
<path d="M974,381 980,393 970,393" fill="#2aba91"/>
<path d="M974,381 984,384 980,393" fill="#2bbd94"/>
<path d="M984,384 989,392 980,393" fill="#2abb93"/>
<path d="M984,384 993,381 989,392" fill="#28b48d"/>
<path d="M637,393 648,390 643,399" fill="#2abc93"/>
<path d="M648,390 655,400 643,399" fill="#29b890"/>
<path d="M648,390 661,392 655,400" fill="#2ab991"/>
<path d="M661,392 663,401 655,400" fill="#2ab991"/>
<path d="M661,392 669,393 663,401" fill="#2bbd94"/>
<path d="M669,393 674,402 663,401" fill="#2bbe95"/>
<path d="M669,393 680,391 674,402" fill="#2dc69b"/>
<path d="M680,391 685,402 674,402" fill="#2dca9e"/>
<path d="M680,391 688,392 685,402" fill="#2aba92"/>
<path d="M688,392 694,400 685,402" fill="#28b28b"/>
<path d="M688,392 700,390 694,400" fill="#2ecb9f"/>
<path d="M700,390 704,402 694,400" fill="#2dc69b"/>
<path d="M700,390 708,392 704,402" fill="#2ecb9f"/>
<path d="M708,392 716,400 704,402" fill="#26a984"/>
<path d="M708,392 717,393 716,400" fill="#1f8c6e"/>
<path d="M717,393 724,398 716,400" fill="#16644e"/>
<path d="M717,393 730,390 724,398" fill="#1e8467"/>
<path d="M730,390 735,401 724,398" fill="#2ecb9f"/>
<path d="M730,390 739,392 735,401" fill="#2ecb9f"/>
<path d="M739,392 744,399 735,401" fill="#2ecb9f"/>
<path d="M739,392 747,391 744,399" fill="#2eca9f"/>
<path d="M747,391 754,401 744,399" fill="#2dc69b"/>
<path d="M747,391 760,391 754,401" fill="#2dc99e"/>
<path d="M760,391 763,399 754,401" fill="#29b48d"/>
<path d="M760,391 770,390 763,399" fill="#229676"/>
<path d="M770,390 774,400 763,399" fill="#26ab86"/>
<path d="M770,390 781,392 774,400" fill="#29b58d"/>
<path d="M781,392 782,398 774,400" fill="#2ecb9f"/>
<path d="M781,392 789,390 782,398" fill="#2dc99d"/>
<path d="M789,390 793,401 782,398" fill="#2dca9e"/>
<path d="M789,390 798,390 793,401" fill="#2ecb9f"/>
<path d="M798,390 804,398 793,401" fill="#1d7f64"/>
<path d="M798,390 809,390 804,398" fill="#1d8266"/>
<path d="M809,390 813,399 804,398" fill="#26a984"/>
<path d="M809,390 818,391 813,399" fill="#27ac86"/>
<path d="M818,391 825,399 813,399" fill="#2aba92"/>
<path d="M818,391 828,391 825,399" fill="#29b48d"/>
<path d="M828,391 836,399 825,399" fill="#2bbf95"/>
<path d="M828,391 839,390 836,399" fill="#2aba92"/>
<path d="M839,390 843,398 836,399" fill="#28b48d"/>
<path d="M839,390 849,393 843,398" fill="#2bbd94"/>
<path d="M849,393 854,400 843,398" fill="#2bbe95"/>
<path d="M849,393 860,393 854,400" fill="#2abd94"/>
<path d="M860,393 865,401 854,400" fill="#2bbf95"/>
<path d="M860,393 867,392 865,401" fill="#2ab991"/>
<path d="M867,392 874,398 865,401" fill="#28b38c"/>
<path d="M867,392 878,393 874,398" fill="#2bbe95"/>
<path d="M878,393 886,399 874,398" fill="#2abb92"/>
<path d="M878,393 889,392 886,399" fill="#2bbf96"/>
<path d="M889,392 893,399 886,399" fill="#2bbf95"/>
<path d="M889,392 900,390 893,399" fill="#2abb92"/>
<path d="M900,390 904,401 893,399" fill="#28b38c"/>
<path d="M900,390 907,393 904,401" fill="#2bbe94"/>
<path d="M907,393 913,399 904,401" fill="#28b38c"/>
<path d="M907,393 920,391 913,399" fill="#29b790"/>
<path d="M920,391 922,401 913,399" fill="#29b890"/>
<path d="M920,391 927,390 922,401" fill="#29b48d"/>
<path d="M927,390 935,399 922,401" fill="#29b68f"/>
<path d="M927,390 940,392 935,399" fill="#2abb93"/>
<path d="M940,392 943,401 935,399" fill="#28b48d"/>
<path d="M940,392 948,392 943,401" fill="#2abb92"/>
<path d="M948,392 955,399 943,401" fill="#29b58d"/>
<path d="M948,392 960,390 955,399" fill="#28b48d"/>
<path d="M960,390 966,401 955,399" fill="#2bbe95"/>
<path d="M960,390 970,393 966,401" fill="#29b58e"/>
<path d="M970,393 975,399 966,401" fill="#28b28b"/>
<path d="M970,393 980,393 975,399" fill="#2aba92"/>
<path d="M980,393 986,400 975,399" fill="#2ab991"/>
<path d="M980,393 989,392 986,400" fill="#2ab991"/>
<path d="M643,399 655,400 649,410" fill="#2bbf95"/>
<path d="M655,400 659,410 649,410" fill="#29b68e"/>
<path d="M655,400 663,401 659,410" fill="#2aba91"/>
<path d="M663,401 670,410 659,410" fill="#2bbd94"/>
<path d="M663,401 674,402 670,410" fill="#29b890"/>
<path d="M674,402 680,408 670,410" fill="#2bbe94"/>
<path d="M674,402 685,402 680,408" fill="#2bbe95"/>
<path d="M685,402 689,410 680,408" fill="#2cc399"/>
<path d="M685,402 694,400 689,410" fill="#27ac87"/>
<path d="M694,400 698,409 689,410" fill="#26a783"/>
<path d="M694,400 704,402 698,409" fill="#2aba92"/>
<path d="M704,402 708,410 698,409" fill="#239d7b"/>
<path d="M704,402 716,400 708,410" fill="#196e56"/>
<path d="M716,400 718,408 708,410" fill="#208d6e"/>
<path d="M716,400 724,398 718,408" fill="#28b08a"/>
<path d="M724,398 730,407 718,408" fill="#2ecb9f"/>
<path d="M724,398 735,401 730,407" fill="#2ecb9f"/>
<path d="M735,401 737,409 730,407" fill="#2ecb9f"/>
<path d="M735,401 744,399 737,409" fill="#2ecb9f"/>
<path d="M744,399 749,407 737,409" fill="#2ecb9f"/>
<path d="M744,399 754,401 749,407" fill="#2ecb9f"/>
<path d="M754,401 759,410 749,407" fill="#25a380"/>
<path d="M754,401 763,399 759,410" fill="#28b28b"/>
<path d="M763,399 771,411 759,410" fill="#1f896c"/>
<path d="M763,399 774,400 771,411" fill="#26aa85"/>
<path d="M774,400 780,407 771,411" fill="#1d8467"/>
<path d="M774,400 782,398 780,407" fill="#26a883"/>
<path d="M782,398 788,409 780,407" fill="#1e8669"/>
<path d="M782,398 793,401 788,409" fill="#1d8266"/>
<path d="M793,401 797,410 788,409" fill="#29b68f"/>
<path d="M793,401 804,398 797,410" fill="#2ab991"/>
<path d="M804,398 808,410 797,410" fill="#29b68e"/>
<path d="M804,398 813,399 808,410" fill="#2aba92"/>
<path d="M813,399 820,408 808,410" fill="#29b58e"/>
<path d="M813,399 825,399 820,408" fill="#2bbe95"/>
<path d="M825,399 828,409 820,408" fill="#2bbf95"/>
<path d="M825,399 836,399 828,409" fill="#29b78f"/>
<path d="M836,399 838,407 828,409" fill="#2bbe95"/>
<path d="M836,399 843,398 838,407" fill="#29b48d"/>
<path d="M843,398 849,408 838,407" fill="#28b38c"/>
<path d="M843,398 854,400 849,408" fill="#29b78f"/>
<path d="M854,400 858,410 849,408" fill="#29b68f"/>
<path d="M854,400 865,401 858,410" fill="#29b58d"/>
<path d="M865,401 870,409 858,410" fill="#29b68f"/>
<path d="M865,401 874,398 870,409" fill="#29b58e"/>
<path d="M874,398 877,410 870,409" fill="#29b68f"/>
<path d="M874,398 886,399 877,410" fill="#2abb93"/>
<path d="M886,399 888,407 877,410" fill="#29b58e"/>
<path d="M886,399 893,399 888,407" fill="#2aba91"/>
<path d="M893,399 900,411 888,407" fill="#2bbd94"/>
<path d="M893,399 904,401 900,411" fill="#2ab991"/>
<path d="M904,401 908,409 900,411" fill="#28b38c"/>
<path d="M904,401 913,399 908,409" fill="#29b58e"/>
<path d="M913,399 921,409 908,409" fill="#28b48d"/>
<path d="M913,399 922,401 921,409" fill="#29b68e"/>
<path d="M922,401 928,408 921,409" fill="#2abb93"/>
<path d="M922,401 935,399 928,408" fill="#2abb92"/>
<path d="M935,399 937,410 928,408" fill="#29b890"/>
<path d="M935,399 943,401 937,410" fill="#28b38c"/>
<path d="M943,401 950,408 937,410" fill="#2ab991"/>
<path d="M943,401 955,399 950,408" fill="#2bbe95"/>
<path d="M955,399 960,408 950,408" fill="#29b890"/>
<path d="M955,399 966,401 960,408" fill="#2ab991"/>
<path d="M966,401 970,408 960,408" fill="#2ab991"/>
<path d="M966,401 975,399 970,408" fill="#29b890"/>
<path d="M975,399 980,409 970,408" fill="#2bbe95"/>
<path d="M975,399 986,400 980,409" fill="#28b38c"/>
<path d="M986,400 987,409 980,409" fill="#29b890"/>
<path d="M649,410 659,410 655,416" fill="#2bbe95"/>
<path d="M659,410 664,418 655,416" fill="#28b38c"/>
<path d="M659,410 670,410 664,418" fill="#2bbe95"/>
<path d="M670,410 674,418 664,418" fill="#2ab991"/>
<path d="M670,410 680,408 674,418" fill="#2ab991"/>
<path d="M680,408 683,417 674,418" fill="#2bbf95"/>
<path d="M680,408 689,410 683,417" fill="#2bc096"/>
<path d="M689,410 694,416 683,417" fill="#29b58e"/>
<path d="M689,410 698,409 694,416" fill="#2cc298"/>
<path d="M698,409 705,419 694,416" fill="#2abd94"/>
<path d="M698,409 708,410 705,419" fill="#197259"/>
<path d="M708,410 714,417 705,419" fill="#229776"/>
<path d="M708,410 718,408 714,417" fill="#28b48d"/>
<path d="M718,408 723,417 714,417" fill="#209071"/>
<path d="M718,408 730,407 723,417" fill="#25a380"/>
<path d="M730,407 733,417 723,417" fill="#1d8367"/>
<path d="M730,407 737,409 733,417" fill="#219272"/>
<path d="M737,409 746,417 733,417" fill="#229978"/>
<path d="M737,409 749,407 746,417" fill="#1e8669"/>
<path d="M749,407 753,418 746,417" fill="#27ad88"/>
<path d="M749,407 759,410 753,418" fill="#239c7a"/>
<path d="M759,410 762,417 753,418" fill="#28b08a"/>
<path d="M759,410 771,411 762,417" fill="#26aa85"/>
<path d="M771,411 774,419 762,417" fill="#28b28b"/>
<path d="M771,411 780,407 774,419" fill="#2ab991"/>
<path d="M780,407 783,416 774,419" fill="#2bbe95"/>
<path d="M780,407 788,409 783,416" fill="#2ab991"/>
<path d="M788,409 796,416 783,416" fill="#29b890"/>
<path d="M788,409 797,410 796,416" fill="#2abc93"/>
<path d="M797,410 804,418 796,416" fill="#2aba91"/>
<path d="M797,410 808,410 804,418" fill="#28b38c"/>
<path d="M808,410 816,417 804,418" fill="#28b38c"/>
<path d="M808,410 820,408 816,417" fill="#2abc93"/>
<path d="M820,408 823,417 816,417" fill="#2ab991"/>
<path d="M820,408 828,409 823,417" fill="#2aba92"/>
<path d="M828,409 834,416 823,417" fill="#29b78f"/>
<path d="M828,409 838,407 834,416" fill="#29b68e"/>
<path d="M838,407 846,418 834,416" fill="#29b58e"/>
<path d="M838,407 849,408 846,418" fill="#2ab991"/>
<path d="M849,408 855,417 846,418" fill="#29b890"/>
<path d="M849,408 858,410 855,417" fill="#2ab991"/>
<path d="M858,410 865,419 855,417" fill="#29b890"/>
<path d="M858,410 870,409 865,419" fill="#2abc93"/>
<path d="M870,409 873,419 865,419" fill="#28b38c"/>
<path d="M870,409 877,410 873,419" fill="#2bbe95"/>
<path d="M877,410 883,418 873,419" fill="#29b58d"/>
<path d="M877,410 888,407 883,418" fill="#29b790"/>
<path d="M888,407 896,417 883,418" fill="#29b58e"/>
<path d="M888,407 900,411 896,417" fill="#28b28c"/>
<path d="M900,411 906,417 896,417" fill="#28b38c"/>
<path d="M900,411 908,409 906,417" fill="#28b28b"/>
<path d="M908,409 914,419 906,417" fill="#2ab991"/>
<path d="M908,409 921,409 914,419" fill="#28b48d"/>
<path d="M921,409 924,416 914,419" fill="#2aba92"/>
<path d="M921,409 928,408 924,416" fill="#2ab991"/>
<path d="M928,408 933,418 924,416" fill="#2bbd94"/>
<path d="M928,408 937,410 933,418" fill="#29b58e"/>
<path d="M937,410 943,416 933,418" fill="#29b68e"/>
<path d="M937,410 950,408 943,416" fill="#2abb93"/>
<path d="M950,408 955,417 943,416" fill="#2abc93"/>
<path d="M950,408 960,408 955,417" fill="#2abd94"/>
<path d="M960,408 966,417 955,417" fill="#2bbe95"/>
<path d="M960,408 970,408 966,417" fill="#2bbd94"/>
<path d="M970,408 973,417 966,417" fill="#28b28c"/>
<path d="M970,408 980,409 973,417" fill="#2ab991"/>
<path d="M980,409 985,419 973,417" fill="#2abb92"/>
<path d="M980,409 987,409 985,419" fill="#2bbe95"/>
<path d="M655,416 664,418 660,426" fill="#29b890"/>
<path d="M664,418 669,428 660,426" fill="#29b68e"/>
<path d="M664,418 674,418 669,428" fill="#28b38c"/>
<path d="M674,418 678,425 669,428" fill="#29b58d"/>
<path d="M674,418 683,417 678,425" fill="#28b38d"/>
<path d="M683,417 687,428 678,425" fill="#29b890"/>
<path d="M683,417 694,416 687,428" fill="#29b48d"/>
<path d="M694,416 698,425 687,428" fill="#2abb93"/>
<path d="M694,416 705,419 698,425" fill="#1b785e"/>
<path d="M705,419 709,425 698,425" fill="#239c7a"/>
<path d="M705,419 714,417 709,425" fill="#28b08a"/>
<path d="M714,417 719,427 709,425" fill="#29b68e"/>
<path d="M714,417 723,417 719,427" fill="#28b18b"/>
<path d="M723,417 728,426 719,427" fill="#29b790"/>
<path d="M723,417 733,417 728,426" fill="#2aba92"/>
<path d="M733,417 741,428 728,426" fill="#2ab991"/>
<path d="M733,417 746,417 741,428" fill="#29b890"/>
<path d="M746,417 750,424 741,428" fill="#29b58e"/>
<path d="M746,417 753,418 750,424" fill="#29b68f"/>
<path d="M753,418 761,427 750,424" fill="#2bbd94"/>
<path d="M753,418 762,417 761,427" fill="#28b38c"/>
<path d="M762,417 768,428 761,427" fill="#2aba92"/>
<path d="M762,417 774,419 768,428" fill="#2abc93"/>
<path d="M774,419 777,428 768,428" fill="#2ab991"/>
<path d="M774,419 783,416 777,428" fill="#29b68f"/>
<path d="M783,416 787,425 777,428" fill="#29b58e"/>
<path d="M783,416 796,416 787,425" fill="#2abb92"/>
<path d="M796,416 799,427 787,425" fill="#2aba92"/>
<path d="M796,416 804,418 799,427" fill="#29b48d"/>
<path d="M804,418 809,428 799,427" fill="#29b68f"/>
<path d="M804,418 816,417 809,428" fill="#2abd94"/>
<path d="M816,417 817,427 809,428" fill="#28b38c"/>
<path d="M816,417 823,417 817,427" fill="#2bbe94"/>
<path d="M823,417 828,428 817,427" fill="#2aba92"/>
<path d="M823,417 834,416 828,428" fill="#29b58d"/>
<path d="M834,416 840,427 828,428" fill="#2bbe95"/>
<path d="M834,416 846,418 840,427" fill="#29b68f"/>
<path d="M846,418 848,428 840,427" fill="#2aba92"/>
<path d="M846,418 855,417 848,428" fill="#29b890"/>
<path d="M855,417 858,425 848,428" fill="#28b48d"/>
<path d="M855,417 865,419 858,425" fill="#29b78f"/>
<path d="M865,419 869,427 858,425" fill="#28b48d"/>
<path d="M865,419 873,419 869,427" fill="#2abb93"/>
<path d="M873,419 878,426 869,427" fill="#2bbe95"/>
<path d="M873,419 883,418 878,426" fill="#28b38c"/>
<path d="M883,418 889,425 878,426" fill="#29b58d"/>
<path d="M883,418 896,417 889,425" fill="#29b890"/>
<path d="M896,417 897,426 889,425" fill="#2ab991"/>
<path d="M896,417 906,417 897,426" fill="#29b790"/>
<path d="M906,417 910,427 897,426" fill="#2abb92"/>
<path d="M906,417 914,419 910,427" fill="#2bbf95"/>
<path d="M914,419 918,427 910,427" fill="#28b48d"/>
<path d="M914,419 924,416 918,427" fill="#29b48d"/>
<path d="M924,416 930,427 918,427" fill="#29b890"/>
<path d="M924,416 933,418 930,427" fill="#2aba92"/>
<path d="M933,418 938,424 930,427" fill="#2abc93"/>
<path d="M933,418 943,416 938,424" fill="#29b890"/>
<path d="M943,416 951,427 938,424" fill="#2bbd94"/>
<path d="M943,416 955,417 951,427" fill="#2bbf95"/>
<path d="M955,417 958,427 951,427" fill="#2bbe94"/>
<path d="M955,417 966,417 958,427" fill="#29b78f"/>
<path d="M966,417 969,427 958,427" fill="#2bbf95"/>
<path d="M966,417 973,417 969,427" fill="#2ab991"/>
<path d="M973,417 978,427 969,427" fill="#2abc93"/>
<path d="M973,417 985,419 978,427" fill="#2abd94"/>
<path d="M985,419 989,426 978,427" fill="#28b28c"/>
<path d="M669,428 678,425 674,436" fill="#2bbf96"/>
<path d="M678,425 684,436 674,436" fill="#2abc94"/>
<path d="M678,425 687,428 684,436" fill="#2abb92"/>
<path d="M687,428 693,436 684,436" fill="#2abb93"/>
<path d="M687,428 698,425 693,436" fill="#29b78f"/>
<path d="M698,425 702,436 693,436" fill="#2ab991"/>
<path d="M698,425 709,425 702,436" fill="#29b68e"/>
<path d="M709,425 713,435 702,436" fill="#29b68e"/>
<path d="M709,425 719,427 713,435" fill="#29b790"/>
<path d="M719,427 725,436 713,435" fill="#29b78f"/>
<path d="M719,427 728,426 725,436" fill="#2abd94"/>
<path d="M728,426 735,435 725,436" fill="#29b890"/>
<path d="M728,426 741,428 735,435" fill="#28b48d"/>
<path d="M741,428 742,437 735,435" fill="#2abc93"/>
<path d="M741,428 750,424 742,437" fill="#2abb93"/>
<path d="M750,424 753,436 742,437" fill="#2bbe95"/>
<path d="M750,424 761,427 753,436" fill="#2abb92"/>
<path d="M761,427 764,435 753,436" fill="#28b28b"/>
<path d="M761,427 768,428 764,435" fill="#28b48d"/>
<path d="M768,428 774,435 764,435" fill="#2bbe95"/>
<path d="M768,428 777,428 774,435" fill="#2abb92"/>
<path d="M777,428 785,435 774,435" fill="#29b890"/>
<path d="M777,428 787,425 785,435" fill="#2bbd94"/>
<path d="M787,425 793,435 785,435" fill="#28b38c"/>
<path d="M787,425 799,427 793,435" fill="#2abd94"/>
<path d="M799,427 802,436 793,435" fill="#29b58e"/>
<path d="M799,427 809,428 802,436" fill="#28b28c"/>
<path d="M809,428 813,434 802,436" fill="#2abd94"/>
<path d="M809,428 817,427 813,434" fill="#2bbd94"/>
<path d="M817,427 824,434 813,434" fill="#28b28c"/>
<path d="M817,427 828,428 824,434" fill="#2abb92"/>
<path d="M828,428 836,436 824,434" fill="#2bbe95"/>
<path d="M828,428 840,427 836,436" fill="#2bbd94"/>
<path d="M840,427 843,435 836,436" fill="#2ab991"/>
<path d="M840,427 848,428 843,435" fill="#2abd94"/>
<path d="M848,428 855,435 843,435" fill="#2abc94"/>
<path d="M848,428 858,425 855,435" fill="#2ab991"/>
<path d="M858,425 865,434 855,435" fill="#2bbe95"/>
<path d="M858,425 869,427 865,434" fill="#29b48d"/>
<path d="M869,427 874,435 865,434" fill="#29b58d"/>
<path d="M869,427 878,426 874,435" fill="#29b78f"/>
<path d="M878,426 886,434 874,435" fill="#2bbd94"/>
<path d="M878,426 889,425 886,434" fill="#28b38c"/>
<path d="M889,425 895,434 886,434" fill="#29b68f"/>
<path d="M889,425 897,426 895,434" fill="#29b890"/>
<path d="M897,426 903,434 895,434" fill="#2bbf95"/>
<path d="M897,426 910,427 903,434" fill="#2ab991"/>
<path d="M910,427 916,433 903,434" fill="#2bbf95"/>
<path d="M910,427 918,427 916,433" fill="#28b38c"/>
<path d="M918,427 923,435 916,433" fill="#29b78f"/>
<path d="M918,427 930,427 923,435" fill="#28b48d"/>
<path d="M930,427 935,436 923,435" fill="#29b48d"/>
<path d="M930,427 938,424 935,436" fill="#2bbd94"/>
<path d="M938,424 942,435 935,436" fill="#29b68f"/>
<path d="M938,424 951,427 942,435" fill="#29b890"/>
<path d="M951,427 955,434 942,435" fill="#29b890"/>
<path d="M951,427 958,427 955,434" fill="#28b28c"/>
<path d="M958,427 962,436 955,434" fill="#2bbf95"/>
<path d="M958,427 969,427 962,436" fill="#2aba92"/>
<path d="M969,427 972,433 962,436" fill="#2bbe95"/>
<path d="M969,427 978,427 972,433" fill="#28b48d"/>
<path d="M978,427 983,436 972,433" fill="#2aba92"/>
<path d="M978,427 989,426 983,436" fill="#2abc93"/>
<path d="M989,426 993,435 983,436" fill="#2abc93"/>
<path d="M674,436 684,436 678,444" fill="#29b790"/>
<path d="M684,436 688,446 678,444" fill="#2abd94"/>
<path d="M684,436 693,436 688,446" fill="#2bbe95"/>
<path d="M693,436 699,443 688,446" fill="#2abb92"/>
<path d="M693,436 702,436 699,443" fill="#2abc93"/>
<path d="M702,436 708,444 699,443" fill="#29b48d"/>
<path d="M702,436 713,435 708,444" fill="#2aba91"/>
<path d="M713,435 720,445 708,444" fill="#2abb92"/>
<path d="M713,435 725,436 720,445" fill="#29b58d"/>
<path d="M725,436 730,444 720,445" fill="#2abb93"/>
<path d="M725,436 735,435 730,444" fill="#28b48d"/>
<path d="M735,435 741,443 730,444" fill="#2abc93"/>
<path d="M735,435 742,437 741,443" fill="#29b78f"/>
<path d="M742,437 749,446 741,443" fill="#28b28c"/>
<path d="M742,437 753,436 749,446" fill="#29b68f"/>
<path d="M753,436 760,444 749,446" fill="#2abc93"/>
<path d="M753,436 764,435 760,444" fill="#29b78f"/>
<path d="M764,435 770,445 760,444" fill="#2ab991"/>
<path d="M764,435 774,435 770,445" fill="#29b890"/>
<path d="M774,435 778,443 770,445" fill="#28b38c"/>
<path d="M774,435 785,435 778,443" fill="#29b890"/>
<path d="M785,435 790,443 778,443" fill="#29b890"/>
<path d="M785,435 793,435 790,443" fill="#2abc93"/>
<path d="M793,435 798,444 790,443" fill="#29b58e"/>
<path d="M793,435 802,436 798,444" fill="#28b28c"/>
<path d="M802,436 807,443 798,444" fill="#2abd94"/>
<path d="M802,436 813,434 807,443" fill="#2abb93"/>
<path d="M813,434 821,443 807,443" fill="#28b28c"/>
<path d="M813,434 824,434 821,443" fill="#29b48d"/>
<path d="M824,434 830,442 821,443" fill="#2abc94"/>
<path d="M824,434 836,436 830,442" fill="#29b68f"/>
<path d="M836,436 838,444 830,442" fill="#29b68f"/>
<path d="M836,436 843,435 838,444" fill="#2aba91"/>
<path d="M843,435 848,445 838,444" fill="#2bbe94"/>
<path d="M843,435 855,435 848,445" fill="#2abb92"/>
<path d="M855,435 861,443 848,445" fill="#28b28c"/>
<path d="M855,435 865,434 861,443" fill="#29b790"/>
<path d="M865,434 868,445 861,443" fill="#2bbf95"/>
<path d="M865,434 874,435 868,445" fill="#2aba92"/>
<path d="M874,435 880,444 868,445" fill="#2aba91"/>
<path d="M874,435 886,434 880,444" fill="#2abb92"/>
<path d="M886,434 887,442 880,444" fill="#2abb93"/>
<path d="M886,434 895,434 887,442" fill="#28b38c"/>
<path d="M895,434 900,444 887,442" fill="#2bbd94"/>
<path d="M895,434 903,434 900,444" fill="#29b48d"/>
<path d="M903,434 909,443 900,444" fill="#29b890"/>
<path d="M903,434 916,433 909,443" fill="#29b58e"/>
<path d="M916,433 918,443 909,443" fill="#28b28c"/>
<path d="M916,433 923,435 918,443" fill="#28b48d"/>
<path d="M923,435 929,444 918,443" fill="#29b890"/>
<path d="M923,435 935,436 929,444" fill="#2abb93"/>
<path d="M935,436 939,443 929,444" fill="#29b78f"/>
<path d="M935,436 942,435 939,443" fill="#29b790"/>
<path d="M942,435 948,444 939,443" fill="#2bbd94"/>
<path d="M942,435 955,434 948,444" fill="#2aba92"/>
<path d="M955,434 961,442 948,444" fill="#2abb92"/>
<path d="M955,434 962,436 961,442" fill="#2aba92"/>
<path d="M962,436 970,444 961,442" fill="#29b58e"/>
<path d="M962,436 972,433 970,444" fill="#2bbe95"/>
<path d="M972,433 978,442 970,444" fill="#29b68e"/>
<path d="M972,433 983,436 978,442" fill="#29b58e"/>
<path d="M983,436 990,442 978,442" fill="#2bbe95"/>
<path d="M983,436 993,435 990,442" fill="#29b890"/>
<path d="M678,444 683,452 675,452" fill="#2abc93"/>
<path d="M678,444 688,446 683,452" fill="#29b890"/>
<path d="M688,446 694,451 683,452" fill="#29b58e"/>
<path d="M688,446 699,443 694,451" fill="#29b78f"/>
<path d="M699,443 704,452 694,451" fill="#29b78f"/>
<path d="M699,443 708,444 704,452" fill="#29b890"/>
<path d="M708,444 712,454 704,452" fill="#29b790"/>
<path d="M708,444 720,445 712,454" fill="#28b28c"/>
<path d="M720,445 725,452 712,454" fill="#29b58d"/>
<path d="M720,445 730,444 725,452" fill="#2abb92"/>
<path d="M730,444 732,453 725,452" fill="#29b890"/>
<path d="M730,444 741,443 732,453" fill="#29b58e"/>
<path d="M741,443 744,454 732,453" fill="#2abc93"/>
<path d="M741,443 749,446 744,454" fill="#29b58e"/>
<path d="M749,446 755,451 744,454" fill="#2bbe94"/>
<path d="M749,446 760,444 755,451" fill="#2bbf95"/>
<path d="M760,444 765,453 755,451" fill="#2ab991"/>
<path d="M760,444 770,445 765,453" fill="#29b790"/>
<path d="M770,445 773,454 765,453" fill="#2bbe94"/>
<path d="M770,445 778,443 773,454" fill="#2aba92"/>
<path d="M778,443 783,451 773,454" fill="#28b38c"/>
<path d="M778,443 790,443 783,451" fill="#2ab991"/>
<path d="M790,443 792,453 783,451" fill="#2bbd94"/>
<path d="M790,443 798,444 792,453" fill="#2abc93"/>
<path d="M798,444 803,451 792,453" fill="#2abc93"/>
<path d="M798,444 807,443 803,451" fill="#29b68e"/>
<path d="M807,443 812,453 803,451" fill="#2bbe95"/>
<path d="M807,443 821,443 812,453" fill="#2abc93"/>
<path d="M821,443 823,454 812,453" fill="#29b78f"/>
<path d="M821,443 830,442 823,454" fill="#2abc94"/>
<path d="M830,442 836,454 823,454" fill="#29b790"/>
<path d="M830,442 838,444 836,454" fill="#29b58e"/>
<path d="M838,444 843,454 836,454" fill="#2aba92"/>
<path d="M838,444 848,445 843,454" fill="#2abc94"/>
<path d="M848,445 854,454 843,454" fill="#2abc93"/>
<path d="M848,445 861,443 854,454" fill="#2abc94"/>
<path d="M861,443 866,452 854,454" fill="#2bbf95"/>
<path d="M861,443 868,445 866,452" fill="#2abc93"/>
<path d="M868,445 874,454 866,452" fill="#2bbe95"/>
<path d="M868,445 880,444 874,454" fill="#29b890"/>
<path d="M880,444 883,451 874,454" fill="#29b68e"/>
<path d="M880,444 887,442 883,451" fill="#29b68f"/>
<path d="M887,442 892,453 883,451" fill="#29b78f"/>
<path d="M887,442 900,444 892,453" fill="#29b78f"/>
<path d="M900,444 903,454 892,453" fill="#29b890"/>
<path d="M900,444 909,443 903,454" fill="#28b38c"/>
<path d="M909,443 912,452 903,454" fill="#2ab991"/>
<path d="M909,443 918,443 912,452" fill="#2aba91"/>
<path d="M918,443 925,453 912,452" fill="#29b68f"/>
<path d="M918,443 929,444 925,453" fill="#29b58e"/>
<path d="M929,444 935,453 925,453" fill="#2bbf95"/>
<path d="M929,444 939,443 935,453" fill="#2abc93"/>
<path d="M939,443 945,454 935,453" fill="#2abc94"/>
<path d="M939,443 948,444 945,454" fill="#2abb93"/>
<path d="M948,444 955,453 945,454" fill="#28b38c"/>
<path d="M948,444 961,442 955,453" fill="#29b68e"/>
<path d="M961,442 964,453 955,453" fill="#2abb93"/>
<path d="M961,442 970,444 964,453" fill="#2abc93"/>
<path d="M970,444 973,451 964,453" fill="#29b48d"/>
<path d="M970,444 978,442 973,451" fill="#2aba91"/>
<path d="M978,442 984,452 973,451" fill="#2abc93"/>
<path d="M978,442 990,442 984,452" fill="#2abd94"/>
<path d="M675,452 683,452 678,459" fill="#28b38d"/>
<path d="M683,452 688,461 678,459" fill="#2abc93"/>
<path d="M683,452 694,451 688,461" fill="#2ab991"/>
<path d="M694,451 699,460 688,461" fill="#2bbe95"/>
<path d="M694,451 704,452 699,460" fill="#28b38c"/>
<path d="M704,452 708,460 699,460" fill="#2abb93"/>
<path d="M704,452 712,454 708,460" fill="#2bbe95"/>
<path d="M712,454 718,461 708,460" fill="#2abd94"/>
<path d="M712,454 725,452 718,461" fill="#29b58e"/>
<path d="M725,452 728,460 718,461" fill="#29b890"/>
<path d="M725,452 732,453 728,460" fill="#2bbe95"/>
<path d="M732,453 741,463 728,460" fill="#2ab991"/>
<path d="M732,453 744,454 741,463" fill="#29b890"/>
<path d="M744,454 749,461 741,463" fill="#29b78f"/>
<path d="M744,454 755,451 749,461" fill="#29b890"/>
<path d="M755,451 757,459 749,461" fill="#28b38c"/>
<path d="M755,451 765,453 757,459" fill="#29b78f"/>
<path d="M765,453 769,463 757,459" fill="#2bbe94"/>
<path d="M765,453 773,454 769,463" fill="#2bbd94"/>
<path d="M773,454 777,461 769,463" fill="#29b48d"/>
<path d="M773,454 783,451 777,461" fill="#2abb92"/>
<path d="M783,451 790,459 777,461" fill="#2bbe95"/>
<path d="M783,451 792,453 790,459" fill="#29b58d"/>
<path d="M792,453 799,460 790,459" fill="#29b68f"/>
<path d="M792,453 803,451 799,460" fill="#2ab991"/>
<path d="M803,451 810,462 799,460" fill="#29b68e"/>
<path d="M803,451 812,453 810,462" fill="#2abb92"/>
<path d="M812,453 821,462 810,462" fill="#2abc93"/>
<path d="M812,453 823,454 821,462" fill="#29b78f"/>
<path d="M823,454 827,462 821,462" fill="#2bbd94"/>
<path d="M823,454 836,454 827,462" fill="#2bbf96"/>
<path d="M836,454 839,460 827,462" fill="#29b58d"/>
<path d="M836,454 843,454 839,460" fill="#2abb92"/>
<path d="M843,454 848,461 839,460" fill="#28b38d"/>
<path d="M843,454 854,454 848,461" fill="#2abb93"/>
<path d="M854,454 859,461 848,461" fill="#28b38c"/>
<path d="M854,454 866,452 859,461" fill="#29b78f"/>
<path d="M866,452 871,460 859,461" fill="#2abc93"/>
<path d="M866,452 874,454 871,460" fill="#2aba92"/>
<path d="M874,454 880,460 871,460" fill="#29b78f"/>
<path d="M874,454 883,451 880,460" fill="#29b48d"/>
<path d="M883,451 890,461 880,460" fill="#2abc94"/>
<path d="M883,451 892,453 890,461" fill="#2ab991"/>
<path d="M892,453 899,461 890,461" fill="#29b58e"/>
<path d="M892,453 903,454 899,461" fill="#2bbd94"/>
<path d="M903,454 908,460 899,461" fill="#2abb93"/>
<path d="M903,454 912,452 908,460" fill="#2abb92"/>
<path d="M912,452 919,460 908,460" fill="#29b890"/>
<path d="M912,452 925,453 919,460" fill="#2abc93"/>
<path d="M925,453 930,462 919,460" fill="#28b48d"/>
<path d="M925,453 935,453 930,462" fill="#29b58e"/>
<path d="M935,453 940,462 930,462" fill="#2abb92"/>
<path d="M935,453 945,454 940,462" fill="#29b890"/>
<path d="M945,454 948,459 940,462" fill="#29b68e"/>
<path d="M945,454 955,453 948,459" fill="#28b28c"/>
<path d="M955,453 957,463 948,459" fill="#29b58d"/>
<path d="M955,453 964,453 957,463" fill="#2abc93"/>
<path d="M964,453 969,463 957,463" fill="#28b38c"/>
<path d="M964,453 973,451 969,463" fill="#2aba92"/>
<path d="M973,451 978,461 969,463" fill="#29b78f"/>
<path d="M973,451 984,452 978,461" fill="#29b78f"/>
<path d="M984,452 990,462 978,461" fill="#29b78f"/>
<path d="M678,459 685,468 672,469" fill="#2bbe95"/>
<path d="M678,459 688,461 685,468" fill="#2bbf95"/>
<path d="M688,461 692,468 685,468" fill="#29b890"/>
<path d="M688,461 699,460 692,468" fill="#2abc94"/>
<path d="M699,460 702,470 692,468" fill="#2ab991"/>
<path d="M699,460 708,460 702,470" fill="#2abd94"/>
<path d="M708,460 713,471 702,470" fill="#2bbe95"/>
<path d="M708,460 718,461 713,471" fill="#29b68f"/>
<path d="M718,461 725,470 713,471" fill="#2aba91"/>
<path d="M718,461 728,460 725,470" fill="#29b68e"/>
<path d="M728,460 736,472 725,470" fill="#2abb93"/>
<path d="M728,460 741,463 736,472" fill="#29b58e"/>
<path d="M741,463 743,471 736,472" fill="#2bbd94"/>
<path d="M741,463 749,461 743,471" fill="#2bbe95"/>
<path d="M749,461 755,469 743,471" fill="#28b48d"/>
<path d="M749,461 757,459 755,469" fill="#2abb92"/>
<path d="M757,459 765,468 755,469" fill="#28b38c"/>
<path d="M757,459 769,463 765,468" fill="#28b28c"/>
<path d="M769,463 775,471 765,468" fill="#28b38c"/>
<path d="M769,463 777,461 775,471" fill="#29b890"/>
<path d="M777,461 785,471 775,471" fill="#2bbd94"/>
<path d="M777,461 790,459 785,471" fill="#28b38c"/>
<path d="M790,459 795,469 785,471" fill="#2bbe95"/>
<path d="M790,459 799,460 795,469" fill="#29b890"/>
<path d="M799,460 802,469 795,469" fill="#29b58e"/>
<path d="M799,460 810,462 802,469" fill="#2abb92"/>
<path d="M810,462 813,471 802,469" fill="#2abc94"/>
<path d="M810,462 821,462 813,471" fill="#29b890"/>
<path d="M821,462 826,472 813,471" fill="#29b890"/>
<path d="M821,462 827,462 826,472" fill="#2bbd94"/>
<path d="M827,462 833,471 826,472" fill="#2bbe95"/>
<path d="M827,462 839,460 833,471" fill="#28b48d"/>
<path d="M839,460 846,468 833,471" fill="#2aba92"/>
<path d="M839,460 848,461 846,468" fill="#2bbe95"/>
<path d="M848,461 854,468 846,468" fill="#2bbe94"/>
<path d="M848,461 859,461 854,468" fill="#28b48d"/>
<path d="M859,461 862,470 854,468" fill="#2bbf95"/>
<path d="M859,461 871,460 862,470" fill="#2abb92"/>
<path d="M871,460 875,469 862,470" fill="#2bbe95"/>
<path d="M871,460 880,460 875,469" fill="#29b78f"/>
<path d="M880,460 883,470 875,469" fill="#2bbf96"/>
<path d="M880,460 890,461 883,470" fill="#2abc93"/>
<path d="M890,461 894,468 883,470" fill="#29b58e"/>
<path d="M890,461 899,461 894,468" fill="#2ab991"/>
<path d="M899,461 903,468 894,468" fill="#28b38c"/>
<path d="M899,461 908,460 903,468" fill="#2abb93"/>
<path d="M908,460 913,472 903,468" fill="#2aba91"/>
<path d="M908,460 919,460 913,472" fill="#29b68e"/>
<path d="M919,460 923,471 913,472" fill="#2ab991"/>
<path d="M919,460 930,462 923,471" fill="#2bbe95"/>
<path d="M930,462 935,471 923,471" fill="#29b58e"/>
<path d="M930,462 940,462 935,471" fill="#29b890"/>
<path d="M940,462 945,468 935,471" fill="#29b68f"/>
<path d="M940,462 948,459 945,468" fill="#2abd94"/>
<path d="M948,459 953,471 945,468" fill="#29b58d"/>
<path d="M948,459 957,463 953,471" fill="#2bbf95"/>
<path d="M957,463 965,471 953,471" fill="#2aba92"/>
<path d="M957,463 969,463 965,471" fill="#2bbf96"/>
<path d="M969,463 972,471 965,471" fill="#29b58e"/>
<path d="M969,463 978,461 972,471" fill="#29b78f"/>
<path d="M978,461 984,471 972,471" fill="#29b58e"/>
<path d="M978,461 990,462 984,471" fill="#2abc93"/>
<path d="M990,462 994,469 984,471" fill="#28b38c"/>
<path d="M672,469 679,480 668,478" fill="#28b38c"/>
<path d="M672,469 685,468 679,480" fill="#2bbd94"/>
<path d="M685,468 689,479 679,480" fill="#2abc94"/>
<path d="M685,468 692,468 689,479" fill="#2bbd94"/>
<path d="M692,468 699,477 689,479" fill="#2aba92"/>
<path d="M692,468 702,470 699,477" fill="#29b58e"/>
<path d="M702,470 708,480 699,477" fill="#29b58e"/>
<path d="M702,470 713,471 708,480" fill="#2abd94"/>
<path d="M713,471 721,479 708,480" fill="#29b48d"/>
<path d="M713,471 725,470 721,479" fill="#29b58e"/>
<path d="M725,470 730,477 721,479" fill="#2abd94"/>
<path d="M725,470 736,472 730,477" fill="#2bbd94"/>
<path d="M736,472 737,477 730,477" fill="#29b58e"/>
<path d="M736,472 743,471 737,477" fill="#29b58e"/>
<path d="M743,471 747,477 737,477" fill="#2bbf95"/>
<path d="M743,471 755,469 747,477" fill="#29b58e"/>
<path d="M755,469 761,479 747,477" fill="#2abb92"/>
<path d="M755,469 765,468 761,479" fill="#2bbe95"/>
<path d="M765,468 768,477 761,479" fill="#28b38c"/>
<path d="M765,468 775,471 768,477" fill="#29b48d"/>
<path d="M775,471 777,477 768,477" fill="#2ab991"/>
<path d="M775,471 785,471 777,477" fill="#29b58d"/>
<path d="M785,471 788,478 777,477" fill="#2bbf95"/>
<path d="M785,471 795,469 788,478" fill="#29b890"/>
<path d="M795,469 798,477 788,478" fill="#2bbe95"/>
<path d="M795,469 802,469 798,477" fill="#2abb93"/>
<path d="M802,469 810,477 798,477" fill="#29b68e"/>
<path d="M802,469 813,471 810,477" fill="#29b58e"/>
<path d="M813,471 818,480 810,477" fill="#2ab991"/>
<path d="M813,471 826,472 818,480" fill="#29b890"/>
<path d="M826,472 828,479 818,480" fill="#2bbe95"/>
<path d="M826,472 833,471 828,479" fill="#29b58e"/>
<path d="M833,471 838,479 828,479" fill="#29b68f"/>
<path d="M833,471 846,468 838,479" fill="#29b68f"/>
<path d="M846,468 847,478 838,479" fill="#2abc93"/>
<path d="M846,468 854,468 847,478" fill="#2abb92"/>
<path d="M854,468 860,478 847,478" fill="#2aba91"/>
<path d="M854,468 862,470 860,478" fill="#29b48d"/>
<path d="M862,470 870,477 860,478" fill="#2aba92"/>
<path d="M862,470 875,469 870,477" fill="#2ab991"/>
<path d="M875,469 877,478 870,477" fill="#2abc94"/>
<path d="M875,469 883,470 877,478" fill="#29b78f"/>
<path d="M883,470 889,477 877,478" fill="#29b68f"/>
<path d="M883,470 894,468 889,477" fill="#2abd94"/>
<path d="M894,468 899,478 889,477" fill="#28b28c"/>
<path d="M894,468 903,468 899,478" fill="#2bbe95"/>
<path d="M903,468 908,480 899,478" fill="#2abc93"/>
<path d="M903,468 913,472 908,480" fill="#2abc93"/>
<path d="M913,472 921,478 908,480" fill="#29b890"/>
<path d="M913,472 923,471 921,478" fill="#29b68e"/>
<path d="M923,471 928,480 921,478" fill="#29b68f"/>
<path d="M923,471 935,471 928,480" fill="#2aba92"/>
<path d="M935,471 940,479 928,480" fill="#28b48d"/>
<path d="M935,471 945,468 940,479" fill="#2bbe95"/>
<path d="M945,468 949,478 940,479" fill="#2bbd94"/>
<path d="M945,468 953,471 949,478" fill="#29b78f"/>
<path d="M953,471 960,479 949,478" fill="#2abd94"/>
<path d="M953,471 965,471 960,479" fill="#2bbd94"/>
<path d="M965,471 970,478 960,479" fill="#2bbd94"/>
<path d="M965,471 972,471 970,478" fill="#2bbe95"/>
<path d="M972,471 977,480 970,478" fill="#28b28b"/>
<path d="M972,471 984,471 977,480" fill="#2abd94"/>
<path d="M984,471 989,480 977,480" fill="#2bbd94"/>
<path d="M984,471 994,469 989,480" fill="#2bbe95"/>
<path d="M668,478 679,480 675,487" fill="#2abb92"/>
<path d="M679,480 685,487 675,487" fill="#29b48d"/>
<path d="M679,480 689,479 685,487" fill="#2aba92"/>
<path d="M689,479 695,487 685,487" fill="#2aba91"/>
<path d="M689,479 699,477 695,487" fill="#29b58e"/>
<path d="M699,477 705,489 695,487" fill="#29b48d"/>
<path d="M699,477 708,480 705,489" fill="#2abd94"/>
<path d="M708,480 714,487 705,489" fill="#2abb92"/>
<path d="M708,480 721,479 714,487" fill="#28b48d"/>
<path d="M721,479 725,487 714,487" fill="#29b790"/>
<path d="M721,479 730,477 725,487" fill="#29b68f"/>
<path d="M730,477 736,489 725,487" fill="#2bbf95"/>
<path d="M730,477 737,477 736,489" fill="#2abb92"/>
<path d="M737,477 744,488 736,489" fill="#29b68e"/>
<path d="M737,477 747,477 744,488" fill="#29b68e"/>
<path d="M747,477 752,489 744,488" fill="#2bbe95"/>
<path d="M747,477 761,479 752,489" fill="#2ab991"/>
<path d="M761,479 764,485 752,489" fill="#2ab991"/>
<path d="M761,479 768,477 764,485" fill="#2ab991"/>
<path d="M768,477 772,489 764,485" fill="#29b58d"/>
<path d="M768,477 777,477 772,489" fill="#28b28c"/>
<path d="M777,477 785,488 772,489" fill="#2ab991"/>
<path d="M777,477 788,478 785,488" fill="#29b58e"/>
<path d="M788,478 794,486 785,488" fill="#2bbe94"/>
<path d="M788,478 798,477 794,486" fill="#29b890"/>
<path d="M798,477 804,489 794,486" fill="#29b78f"/>
<path d="M798,477 810,477 804,489" fill="#2bbe95"/>
<path d="M810,477 815,485 804,489" fill="#2abb92"/>
<path d="M810,477 818,480 815,485" fill="#2abc94"/>
<path d="M818,480 823,486 815,485" fill="#2abc93"/>
<path d="M818,480 828,479 823,486" fill="#2abb92"/>
<path d="M828,479 835,489 823,486" fill="#2abc94"/>
<path d="M828,479 838,479 835,489" fill="#29b78f"/>
<path d="M838,479 846,487 835,489" fill="#2ab991"/>
<path d="M838,479 847,478 846,487" fill="#29b68e"/>
<path d="M847,478 853,485 846,487" fill="#2bbd94"/>
<path d="M847,478 860,478 853,485" fill="#29b790"/>
<path d="M860,478 863,487 853,485" fill="#29b78f"/>
<path d="M860,478 870,477 863,487" fill="#2abb92"/>
<path d="M870,477 874,487 863,487" fill="#28b38c"/>
<path d="M870,477 877,478 874,487" fill="#28b28c"/>
<path d="M877,478 885,489 874,487" fill="#2bbd94"/>
<path d="M877,478 889,477 885,489" fill="#29b48d"/>
<path d="M889,477 894,488 885,489" fill="#2aba92"/>
<path d="M889,477 899,478 894,488" fill="#29b78f"/>
<path d="M899,478 903,486 894,488" fill="#29b890"/>
<path d="M899,478 908,480 903,486" fill="#29b58e"/>
<path d="M908,480 915,486 903,486" fill="#2aba92"/>
<path d="M908,480 921,478 915,486" fill="#28b38c"/>
<path d="M921,478 922,489 915,486" fill="#29b58e"/>
<path d="M921,478 928,480 922,489" fill="#2abc94"/>
<path d="M928,480 934,487 922,489" fill="#2abb93"/>
<path d="M928,480 940,479 934,487" fill="#2ab991"/>
<path d="M940,479 945,489 934,487" fill="#29b58e"/>
<path d="M940,479 949,478 945,489" fill="#28b28b"/>
<path d="M949,478 953,488 945,489" fill="#28b48d"/>
<path d="M949,478 960,479 953,488" fill="#2bbe95"/>
<path d="M960,479 963,489 953,488" fill="#2bbf95"/>
<path d="M960,479 970,478 963,489" fill="#29b78f"/>
<path d="M970,478 974,487 963,489" fill="#2abb92"/>
<path d="M970,478 977,480 974,487" fill="#29b890"/>
<path d="M977,480 982,485 974,487" fill="#2abd94"/>
<path d="M977,480 989,480 982,485" fill="#29b890"/>
<path d="M989,480 994,486 982,485" fill="#2bbd94"/>
<path d="M675,487 685,487 679,496" fill="#28b28c"/>
<path d="M685,487 690,496 679,496" fill="#2abc93"/>
<path d="M685,487 695,487 690,496" fill="#29b78f"/>
<path d="M695,487 698,498 690,496" fill="#2bbf95"/>
<path d="M695,487 705,489 698,498" fill="#29b58e"/>
<path d="M705,489 710,497 698,498" fill="#28b48d"/>
<path d="M705,489 714,487 710,497" fill="#2aba92"/>
<path d="M714,487 720,497 710,497" fill="#29b890"/>
<path d="M714,487 725,487 720,497" fill="#29b48d"/>
<path d="M725,487 728,498 720,497" fill="#28b48d"/>
<path d="M725,487 736,489 728,498" fill="#29b78f"/>
<path d="M736,489 740,495 728,498" fill="#2abc93"/>
<path d="M736,489 744,488 740,495" fill="#2ab991"/>
<path d="M744,488 750,496 740,495" fill="#2abb92"/>
<path d="M744,488 752,489 750,496" fill="#29b48d"/>
<path d="M752,489 757,497 750,496" fill="#2aba92"/>
<path d="M752,489 764,485 757,497" fill="#28b28c"/>
<path d="M764,485 768,496 757,497" fill="#28b28b"/>
<path d="M764,485 772,489 768,496" fill="#28b38c"/>
<path d="M772,489 777,496 768,496" fill="#28b38d"/>
<path d="M772,489 785,488 777,496" fill="#2bbd94"/>
<path d="M785,488 789,497 777,496" fill="#2bbe95"/>
<path d="M785,488 794,486 789,497" fill="#2ab991"/>
<path d="M794,486 801,497 789,497" fill="#29b68f"/>
<path d="M794,486 804,489 801,497" fill="#29b78f"/>
<path d="M804,489 810,496 801,497" fill="#2abc93"/>
<path d="M804,489 815,485 810,496" fill="#2aba92"/>
<path d="M815,485 821,495 810,496" fill="#29b890"/>
<path d="M815,485 823,486 821,495" fill="#2aba92"/>
<path d="M823,486 828,496 821,495" fill="#2ab991"/>
<path d="M823,486 835,489 828,496" fill="#2bbe95"/>
<path d="M835,489 838,496 828,496" fill="#29b48d"/>
<path d="M835,489 846,487 838,496" fill="#2abc93"/>
<path d="M846,487 847,495 838,496" fill="#28b38c"/>
<path d="M846,487 853,485 847,495" fill="#2bbe95"/>
<path d="M853,485 857,496 847,495" fill="#2abd94"/>
<path d="M853,485 863,487 857,496" fill="#2bbe95"/>
<path d="M863,487 868,497 857,496" fill="#29b48d"/>
<path d="M863,487 874,487 868,497" fill="#2abb93"/>
<path d="M874,487 878,495 868,497" fill="#29b68f"/>
<path d="M874,487 885,489 878,495" fill="#29b890"/>
<path d="M885,489 890,495 878,495" fill="#2abb92"/>
<path d="M885,489 894,488 890,495" fill="#29b78f"/>
<path d="M894,488 900,496 890,495" fill="#2bbf95"/>
<path d="M894,488 903,486 900,496" fill="#28b38c"/>
<path d="M903,486 908,497 900,496" fill="#29b78f"/>
<path d="M903,486 915,486 908,497" fill="#28b48d"/>
<path d="M915,486 921,495 908,497" fill="#2bbe95"/>
<path d="M915,486 922,489 921,495" fill="#2aba92"/>
<path d="M922,489 929,496 921,495" fill="#2aba92"/>
<path d="M922,489 934,487 929,496" fill="#29b890"/>
<path d="M934,487 941,498 929,496" fill="#29b68f"/>
<path d="M934,487 945,489 941,498" fill="#28b28c"/>
<path d="M945,489 947,495 941,498" fill="#29b790"/>
<path d="M945,489 953,488 947,495" fill="#29b78f"/>
<path d="M953,488 960,496 947,495" fill="#29b890"/>
<path d="M953,488 963,489 960,496" fill="#2abb92"/>
<path d="M963,489 969,496 960,496" fill="#29b58e"/>
<path d="M963,489 974,487 969,496" fill="#29b58e"/>
<path d="M974,487 977,494 969,496" fill="#28b48d"/>
<path d="M974,487 982,485 977,494" fill="#2abc93"/>
<path d="M982,485 991,495 977,494" fill="#2bbf95"/>
<path d="M982,485 994,486 991,495" fill="#29b48d"/>
<path d="M679,496 686,505 672,503" fill="#29b58e"/>
<path d="M679,496 690,496 686,505" fill="#29b48d"/>
<path d="M690,496 692,506 686,505" fill="#29b78f"/>
<path d="M690,496 698,498 692,506" fill="#2ab991"/>
<path d="M698,498 705,503 692,506" fill="#2bbe95"/>
<path d="M698,498 710,497 705,503" fill="#29b48d"/>
<path d="M710,497 716,503 705,503" fill="#29b68e"/>
<path d="M710,497 720,497 716,503" fill="#2bbe95"/>
<path d="M720,497 724,505 716,503" fill="#28b48d"/>
<path d="M720,497 728,498 724,505" fill="#2bbe95"/>
<path d="M728,498 734,504 724,505" fill="#2bbe95"/>
<path d="M728,498 740,495 734,504" fill="#2abc93"/>
<path d="M740,495 744,505 734,504" fill="#29b58d"/>
<path d="M740,495 750,496 744,505" fill="#2ab991"/>
<path d="M750,496 756,506 744,505" fill="#2abc93"/>
<path d="M750,496 757,497 756,506" fill="#2ab991"/>
<path d="M757,497 766,506 756,506" fill="#29b58e"/>
<path d="M757,497 768,496 766,506" fill="#2aba92"/>
<path d="M768,496 774,504 766,506" fill="#2abc93"/>
<path d="M768,496 777,496 774,504" fill="#2abb92"/>
<path d="M777,496 786,506 774,504" fill="#29b48d"/>
<path d="M777,496 789,497 786,506" fill="#28b38c"/>
<path d="M789,497 793,506 786,506" fill="#29b68f"/>
<path d="M789,497 801,497 793,506" fill="#2abb93"/>
<path d="M801,497 803,503 793,506" fill="#29b890"/>
<path d="M801,497 810,496 803,503" fill="#2bbf95"/>
<path d="M810,496 814,506 803,503" fill="#29b68e"/>
<path d="M810,496 821,495 814,506" fill="#2abd94"/>
<path d="M821,495 824,506 814,506" fill="#28b38c"/>
<path d="M821,495 828,496 824,506" fill="#29b58e"/>
<path d="M828,496 835,506 824,506" fill="#28b38c"/>
<path d="M828,496 838,496 835,506" fill="#2abb93"/>
<path d="M838,496 843,506 835,506" fill="#2bbe95"/>
<path d="M838,496 847,495 843,506" fill="#29b78f"/>
<path d="M847,495 852,505 843,506" fill="#29b68e"/>
<path d="M847,495 857,496 852,505" fill="#28b38d"/>
<path d="M857,496 862,504 852,505" fill="#29b58e"/>
<path d="M857,496 868,497 862,504" fill="#29b78f"/>
<path d="M868,497 876,506 862,504" fill="#28b48d"/>
<path d="M868,497 878,495 876,506" fill="#2aba91"/>
<path d="M878,495 886,505 876,506" fill="#29b790"/>
<path d="M878,495 890,495 886,505" fill="#28b38c"/>
<path d="M890,495 894,503 886,505" fill="#2abb93"/>
<path d="M890,495 900,496 894,503" fill="#29b890"/>
<path d="M900,496 904,506 894,503" fill="#29b78f"/>
<path d="M900,496 908,497 904,506" fill="#2bbd94"/>
<path d="M908,497 913,506 904,506" fill="#29b68f"/>
<path d="M908,497 921,495 913,506" fill="#2abc94"/>
<path d="M921,495 923,506 913,506" fill="#28b48d"/>
<path d="M921,495 929,496 923,506" fill="#2bbe95"/>
<path d="M929,496 933,506 923,506" fill="#28b38c"/>
<path d="M929,496 941,498 933,506" fill="#2bbd94"/>
<path d="M941,498 942,503 933,506" fill="#2bbf95"/>
<path d="M941,498 947,495 942,503" fill="#29b78f"/>
<path d="M947,495 954,506 942,503" fill="#2ab991"/>
<path d="M947,495 960,496 954,506" fill="#2aba92"/>
<path d="M960,496 965,504 954,506" fill="#2bbd94"/>
<path d="M960,496 969,496 965,504" fill="#29b68e"/>
<path d="M969,496 975,503 965,504" fill="#2abb93"/>
<path d="M969,496 977,494 975,503" fill="#29b890"/>
<path d="M977,494 983,504 975,503" fill="#28b28c"/>
<path d="M977,494 991,495 983,504" fill="#2abb92"/>
<path d="M991,495 993,503 983,504" fill="#2bbe95"/>
<path d="M672,503 680,513 667,513" fill="#29b890"/>
<path d="M672,503 686,505 680,513" fill="#29b790"/>
<path d="M686,505 689,513 680,513" fill="#2ab991"/>
<path d="M686,505 692,506 689,513" fill="#2bbf95"/>
<path d="M692,506 699,515 689,513" fill="#2aba92"/>
<path d="M692,506 705,503 699,515" fill="#2abd94"/>
<path d="M705,503 707,514 699,515" fill="#2abc93"/>
<path d="M705,503 716,503 707,514" fill="#28b28c"/>
<path d="M716,503 717,515 707,514" fill="#2aba92"/>
<path d="M716,503 724,505 717,515" fill="#2bbf95"/>
<path d="M724,505 728,514 717,515" fill="#2aba92"/>
<path d="M724,505 734,504 728,514" fill="#29b58e"/>
<path d="M734,504 738,514 728,514" fill="#2ab991"/>
<path d="M734,504 744,505 738,514" fill="#2bbf95"/>
<path d="M744,505 749,515 738,514" fill="#29b790"/>
<path d="M744,505 756,506 749,515" fill="#29b68e"/>
<path d="M756,506 759,513 749,515" fill="#2bbe95"/>
<path d="M756,506 766,506 759,513" fill="#2abb93"/>
<path d="M766,506 769,512 759,513" fill="#29b78f"/>
<path d="M766,506 774,504 769,512" fill="#29b790"/>
<path d="M774,504 781,513 769,512" fill="#28b38c"/>
<path d="M774,504 786,506 781,513" fill="#28b38c"/>
<path d="M786,506 788,512 781,513" fill="#2abd94"/>
<path d="M786,506 793,506 788,512" fill="#2abc93"/>
<path d="M793,506 800,515 788,512" fill="#2abb92"/>
<path d="M793,506 803,503 800,515" fill="#2bbf95"/>
<path d="M803,503 809,515 800,515" fill="#29b68f"/>
<path d="M803,503 814,506 809,515" fill="#2bbe95"/>
<path d="M814,506 818,515 809,515" fill="#2abb93"/>
<path d="M814,506 824,506 818,515" fill="#28b28c"/>
<path d="M824,506 830,512 818,515" fill="#29b890"/>
<path d="M824,506 835,506 830,512" fill="#2abc93"/>
<path d="M835,506 837,513 830,512" fill="#2ab991"/>
<path d="M835,506 843,506 837,513" fill="#29b68e"/>
<path d="M843,506 849,513 837,513" fill="#2bbf95"/>
<path d="M843,506 852,505 849,513" fill="#29b890"/>
<path d="M852,505 860,512 849,513" fill="#29b78f"/>
<path d="M852,505 862,504 860,512" fill="#2ab991"/>
<path d="M862,504 868,513 860,512" fill="#29b68f"/>
<path d="M862,504 876,506 868,513" fill="#29b68f"/>
<path d="M876,506 878,513 868,513" fill="#2abb92"/>
<path d="M876,506 886,505 878,513" fill="#28b28c"/>
<path d="M886,505 889,512 878,513" fill="#28b48d"/>
<path d="M886,505 894,503 889,512" fill="#29b48d"/>
<path d="M894,503 898,514 889,512" fill="#29b68f"/>
<path d="M894,503 904,506 898,514" fill="#29b890"/>
<path d="M904,506 907,515 898,514" fill="#28b38c"/>
<path d="M904,506 913,506 907,515" fill="#2bbe94"/>
<path d="M913,506 919,512 907,515" fill="#28b38c"/>
<path d="M913,506 923,506 919,512" fill="#28b38c"/>
<path d="M923,506 927,515 919,512" fill="#2abb93"/>
<path d="M923,506 933,506 927,515" fill="#29b78f"/>
<path d="M933,506 937,514 927,515" fill="#29b58e"/>
<path d="M933,506 942,503 937,514" fill="#2ab991"/>
<path d="M942,503 949,514 937,514" fill="#28b28c"/>
<path d="M942,503 954,506 949,514" fill="#29b58e"/>
<path d="M954,506 958,514 949,514" fill="#29b890"/>
<path d="M954,506 965,504 958,514" fill="#2bbf95"/>
<path d="M965,504 968,514 958,514" fill="#29b790"/>
<path d="M965,504 975,503 968,514" fill="#2abc93"/>
<path d="M975,503 981,514 968,514" fill="#2aba92"/>
<path d="M975,503 983,504 981,514" fill="#28b38c"/>
<path d="M983,504 988,512 981,514" fill="#2aba92"/>
<path d="M983,504 993,503 988,512" fill="#2abc94"/>
<path d="M667,513 680,513 673,522" fill="#2bbe95"/>
<path d="M680,513 683,522 673,522" fill="#2aba91"/>
<path d="M680,513 689,513 683,522" fill="#2ab991"/>
<path d="M689,513 694,520 683,522" fill="#2aba92"/>
<path d="M689,513 699,515 694,520" fill="#2bbd94"/>
<path d="M699,515 703,523 694,520" fill="#2abd94"/>
<path d="M699,515 707,514 703,523" fill="#2bbd94"/>
<path d="M707,514 713,523 703,523" fill="#2bbf95"/>
<path d="M707,514 717,515 713,523" fill="#29b78f"/>
<path d="M717,515 722,522 713,523" fill="#2bbe95"/>
<path d="M717,515 728,514 722,522" fill="#2aba92"/>
<path d="M728,514 734,523 722,522" fill="#2bbe95"/>
<path d="M728,514 738,514 734,523" fill="#2abb92"/>
<path d="M738,514 742,520 734,523" fill="#2abb92"/>
<path d="M738,514 749,515 742,520" fill="#2abc93"/>
<path d="M749,515 754,524 742,520" fill="#29b890"/>
<path d="M749,515 759,513 754,524" fill="#2abb93"/>
<path d="M759,513 764,523 754,524" fill="#2bbe95"/>
<path d="M759,513 769,512 764,523" fill="#29b48d"/>
<path d="M769,512 774,524 764,523" fill="#2aba92"/>
<path d="M769,512 781,513 774,524" fill="#2aba92"/>
<path d="M781,513 782,523 774,524" fill="#2abb92"/>
<path d="M781,513 788,512 782,523" fill="#2abc94"/>
<path d="M788,512 793,521 782,523" fill="#29b78f"/>
<path d="M788,512 800,515 793,521" fill="#28b38c"/>
<path d="M800,515 804,522 793,521" fill="#29b68f"/>
<path d="M800,515 809,515 804,522" fill="#2bbe95"/>
<path d="M809,515 816,524 804,522" fill="#2abc93"/>
<path d="M809,515 818,515 816,524" fill="#2bbe95"/>
<path d="M818,515 825,521 816,524" fill="#2aba91"/>
<path d="M818,515 830,512 825,521" fill="#2bbe95"/>
<path d="M830,512 833,522 825,521" fill="#29b78f"/>
<path d="M830,512 837,513 833,522" fill="#2ab991"/>
<path d="M837,513 843,521 833,522" fill="#2abc93"/>
<path d="M837,513 849,513 843,521" fill="#29b78f"/>
<path d="M849,513 853,521 843,521" fill="#29b48d"/>
<path d="M849,513 860,512 853,521" fill="#28b48d"/>
<path d="M860,512 863,520 853,521" fill="#2ab991"/>
<path d="M860,512 868,513 863,520" fill="#29b68e"/>
<path d="M868,513 873,524 863,520" fill="#29b78f"/>
<path d="M868,513 878,513 873,524" fill="#2bbd94"/>
<path d="M878,513 885,522 873,524" fill="#2abc94"/>
<path d="M878,513 889,512 885,522" fill="#28b38c"/>
<path d="M889,512 896,524 885,522" fill="#2ab991"/>
<path d="M889,512 898,514 896,524" fill="#2ab991"/>
<path d="M898,514 902,520 896,524" fill="#29b58e"/>
<path d="M898,514 907,515 902,520" fill="#29b58e"/>
<path d="M907,515 913,522 902,520" fill="#28b48d"/>
<path d="M907,515 919,512 913,522" fill="#2abc93"/>
<path d="M919,512 926,520 913,522" fill="#2bbe95"/>
<path d="M919,512 927,515 926,520" fill="#29b890"/>
<path d="M927,515 935,523 926,520" fill="#2bbd94"/>
<path d="M927,515 937,514 935,523" fill="#29b68f"/>
<path d="M937,514 943,523 935,523" fill="#28b38c"/>
<path d="M937,514 949,514 943,523" fill="#2bbd94"/>
<path d="M949,514 955,520 943,523" fill="#29b78f"/>
<path d="M949,514 958,514 955,520" fill="#29b78f"/>
<path d="M958,514 965,522 955,520" fill="#29b790"/>
<path d="M958,514 968,514 965,522" fill="#2bbf95"/>
<path d="M968,514 975,521 965,522" fill="#29b48d"/>
<path d="M968,514 981,514 975,521" fill="#28b38c"/>
<path d="M981,514 985,520 975,521" fill="#2ab991"/>
<path d="M981,514 988,512 985,520" fill="#2abc93"/>
<path d="M673,522 683,522 678,532" fill="#28b28c"/>
<path d="M683,522 690,532 678,532" fill="#2ab991"/>
<path d="M683,522 694,520 690,532" fill="#2bbe95"/>
<path d="M694,520 701,532 690,532" fill="#29b890"/>
<path d="M694,520 703,523 701,532" fill="#29b48d"/>
<path d="M703,523 708,532 701,532" fill="#29b68f"/>
<path d="M703,523 713,523 708,532" fill="#2abc93"/>
<path d="M713,523 717,532 708,532" fill="#29b790"/>
<path d="M713,523 722,522 717,532" fill="#2ab991"/>
<path d="M722,522 731,529 717,532" fill="#29b58e"/>
<path d="M722,522 734,523 731,529" fill="#2bbe95"/>
<path d="M734,523 737,532 731,529" fill="#2ab991"/>
<path d="M734,523 742,520 737,532" fill="#2abc93"/>
<path d="M742,520 748,531 737,532" fill="#29b68e"/>
<path d="M742,520 754,524 748,531" fill="#2ab991"/>
<path d="M754,524 760,532 748,531" fill="#28b28c"/>
<path d="M754,524 764,523 760,532" fill="#2ab991"/>
<path d="M764,523 769,532 760,532" fill="#29b890"/>
<path d="M764,523 774,524 769,532" fill="#29b58e"/>
<path d="M774,524 781,532 769,532" fill="#29b48d"/>
<path d="M774,524 782,523 781,532" fill="#2aba92"/>
<path d="M782,523 788,532 781,532" fill="#2abb92"/>
<path d="M782,523 793,521 788,532" fill="#2bbd94"/>
<path d="M793,521 799,532 788,532" fill="#2abb93"/>
<path d="M793,521 804,522 799,532" fill="#2bbf95"/>
<path d="M804,522 809,531 799,532" fill="#29b78f"/>
<path d="M804,522 816,524 809,531" fill="#28b28b"/>
<path d="M816,524 817,529 809,531" fill="#2ab991"/>
<path d="M816,524 825,521 817,529" fill="#29b68f"/>
<path d="M825,521 831,531 817,529" fill="#2aba92"/>
<path d="M825,521 833,522 831,531" fill="#2ab991"/>
<path d="M833,522 840,531 831,531" fill="#2bbf95"/>
<path d="M833,522 843,521 840,531" fill="#2bbf96"/>
<path d="M843,521 850,531 840,531" fill="#2abc93"/>
<path d="M843,521 853,521 850,531" fill="#29b68f"/>
<path d="M853,521 858,530 850,531" fill="#29b68f"/>
<path d="M853,521 863,520 858,530" fill="#29b58e"/>
<path d="M863,520 870,529 858,530" fill="#29b48d"/>
<path d="M863,520 873,524 870,529" fill="#29b890"/>
<path d="M873,524 881,529 870,529" fill="#2abb92"/>
<path d="M873,524 885,522 881,529" fill="#29b890"/>
<path d="M885,522 889,532 881,529" fill="#29b890"/>
<path d="M885,522 896,524 889,532" fill="#29b68f"/>
<path d="M896,524 900,529 889,532" fill="#29b78f"/>
<path d="M896,524 902,520 900,529" fill="#2bbe95"/>
<path d="M902,520 907,532 900,529" fill="#29b78f"/>
<path d="M902,520 913,522 907,532" fill="#28b28c"/>
<path d="M913,522 919,529 907,532" fill="#2aba92"/>
<path d="M913,522 926,520 919,529" fill="#2ab991"/>
<path d="M926,520 928,531 919,529" fill="#28b38c"/>
<path d="M926,520 935,523 928,531" fill="#2ab991"/>
<path d="M935,523 937,530 928,531" fill="#2abc94"/>
<path d="M935,523 943,523 937,530" fill="#29b58e"/>
<path d="M943,523 951,530 937,530" fill="#29b68f"/>
<path d="M943,523 955,520 951,530" fill="#2aba92"/>
<path d="M955,520 960,529 951,530" fill="#2aba92"/>
<path d="M955,520 965,522 960,529" fill="#2bbe95"/>
<path d="M965,522 968,529 960,529" fill="#29b68e"/>
<path d="M965,522 975,521 968,529" fill="#29b890"/>
<path d="M975,521 980,531 968,529" fill="#29b48d"/>
<path d="M975,521 985,520 980,531" fill="#2bbf96"/>
<path d="M985,520 990,532 980,531" fill="#29b78f"/>
<path d="M678,532 686,538 674,538" fill="#2abc94"/>
<path d="M678,532 690,532 686,538" fill="#2ab991"/>
<path d="M690,532 694,539 686,538" fill="#28b38c"/>
<path d="M690,532 701,532 694,539" fill="#2bbe95"/>
<path d="M701,532 705,539 694,539" fill="#29b58e"/>
<path d="M701,532 708,532 705,539" fill="#28b28c"/>
<path d="M708,532 714,541 705,539" fill="#2bbe95"/>
<path d="M708,532 717,532 714,541" fill="#29b68e"/>
<path d="M717,532 725,541 714,541" fill="#28b38c"/>
<path d="M717,532 731,529 725,541" fill="#28b48d"/>
<path d="M731,529 732,538 725,541" fill="#2abb92"/>
<path d="M731,529 737,532 732,538" fill="#2abb93"/>
<path d="M737,532 745,539 732,538" fill="#29b890"/>
<path d="M737,532 748,531 745,539" fill="#29b890"/>
<path d="M748,531 756,539 745,539" fill="#29b68e"/>
<path d="M748,531 760,532 756,539" fill="#2bbe95"/>
<path d="M760,532 762,539 756,539" fill="#28b38c"/>
<path d="M760,532 769,532 762,539" fill="#28b38c"/>
<path d="M769,532 773,541 762,539" fill="#2bbd94"/>
<path d="M769,532 781,532 773,541" fill="#2bbd94"/>
<path d="M781,532 785,541 773,541" fill="#2abc93"/>
<path d="M781,532 788,532 785,541" fill="#2bbf96"/>
<path d="M788,532 792,540 785,541" fill="#2bbe95"/>
<path d="M788,532 799,532 792,540" fill="#29b68f"/>
<path d="M799,532 803,541 792,540" fill="#28b48d"/>
<path d="M799,532 809,531 803,541" fill="#2aba92"/>
<path d="M809,531 813,540 803,541" fill="#28b38c"/>
<path d="M809,531 817,529 813,540" fill="#29b890"/>
<path d="M817,529 825,538 813,540" fill="#28b38c"/>
<path d="M817,529 831,531 825,538" fill="#2abc94"/>
<path d="M831,531 834,538 825,538" fill="#28b28c"/>
<path d="M831,531 840,531 834,538" fill="#2abd94"/>
<path d="M840,531 842,539 834,538" fill="#2bbe95"/>
<path d="M840,531 850,531 842,539" fill="#28b48d"/>
<path d="M850,531 852,539 842,539" fill="#29b890"/>
<path d="M850,531 858,530 852,539" fill="#28b38c"/>
<path d="M858,530 865,541 852,539" fill="#29b58e"/>
<path d="M858,530 870,529 865,541" fill="#28b38c"/>
<path d="M870,529 873,539 865,541" fill="#29b890"/>
<path d="M870,529 881,529 873,539" fill="#28b48d"/>
<path d="M881,529 885,539 873,539" fill="#29b890"/>
<path d="M881,529 889,532 885,539" fill="#2abc93"/>
<path d="M889,532 893,539 885,539" fill="#2ab991"/>
<path d="M889,532 900,529 893,539" fill="#2bbf95"/>
<path d="M900,529 905,539 893,539" fill="#2abd94"/>
<path d="M900,529 907,532 905,539" fill="#2bbe95"/>
<path d="M907,532 915,538 905,539" fill="#29b68f"/>
<path d="M907,532 919,529 915,538" fill="#2abc93"/>
<path d="M919,529 923,539 915,538" fill="#2bbd94"/>
<path d="M919,529 928,531 923,539" fill="#2bbf96"/>
<path d="M928,531 933,538 923,539" fill="#2bbd94"/>
<path d="M928,531 937,530 933,538" fill="#29b78f"/>
<path d="M937,530 944,541 933,538" fill="#2bbf95"/>
<path d="M937,530 951,530 944,541" fill="#2ab991"/>
<path d="M951,530 955,541 944,541" fill="#2bbd94"/>
<path d="M951,530 960,529 955,541" fill="#28b38c"/>
<path d="M960,529 963,539 955,541" fill="#2aba91"/>
<path d="M960,529 968,529 963,539" fill="#2abb93"/>
<path d="M968,529 973,539 963,539" fill="#2bbe95"/>
<path d="M968,529 980,531 973,539" fill="#2abb93"/>
<path d="M980,531 982,541 973,539" fill="#29b68f"/>
<path d="M980,531 990,532 982,541" fill="#29b890"/>
<path d="M990,532 994,538 982,541" fill="#2aba92"/>
<path d="M674,538 681,549 668,550" fill="#28b48d"/>
<path d="M674,538 686,538 681,549" fill="#29b68f"/>
<path d="M686,538 691,548 681,549" fill="#2bbf96"/>
<path d="M686,538 694,539 691,548" fill="#29b58e"/>
<path d="M694,539 700,548 691,548" fill="#2abb93"/>
<path d="M694,539 705,539 700,548" fill="#28b38c"/>
<path d="M705,539 710,549 700,548" fill="#29b58e"/>
<path d="M705,539 714,541 710,549" fill="#28b38c"/>
<path d="M714,541 720,549 710,549" fill="#29b790"/>
<path d="M714,541 725,541 720,549" fill="#29b48d"/>
<path d="M725,541 729,547 720,549" fill="#28b28b"/>
<path d="M725,541 732,538 729,547" fill="#2bbe95"/>
<path d="M732,538 740,550 729,547" fill="#29b78f"/>
<path d="M732,538 745,539 740,550" fill="#29b58e"/>
<path d="M745,539 748,547 740,550" fill="#28b48d"/>
<path d="M745,539 756,539 748,547" fill="#28b48d"/>
<path d="M756,539 757,547 748,547" fill="#29b68f"/>
<path d="M756,539 762,539 757,547" fill="#29b890"/>
<path d="M762,539 768,547 757,547" fill="#28b38c"/>
<path d="M762,539 773,541 768,547" fill="#2aba92"/>
<path d="M773,541 778,547 768,547" fill="#28b48d"/>
<path d="M773,541 785,541 778,547" fill="#2abb93"/>
<path d="M785,541 788,550 778,547" fill="#29b58e"/>
<path d="M785,541 792,540 788,550" fill="#2aba91"/>
<path d="M792,540 797,546 788,550" fill="#2abb92"/>
<path d="M792,540 803,541 797,546" fill="#29b58d"/>
<path d="M803,541 811,548 797,546" fill="#2bbd94"/>
<path d="M803,541 813,540 811,548" fill="#2aba92"/>
<path d="M813,540 820,547 811,548" fill="#29b68f"/>
<path d="M813,540 825,538 820,547" fill="#29b78f"/>
<path d="M825,538 827,546 820,547" fill="#29b890"/>
<path d="M825,538 834,538 827,546" fill="#2bbf95"/>
<path d="M834,538 841,546 827,546" fill="#2abc93"/>
<path d="M834,538 842,539 841,546" fill="#28b38c"/>
<path d="M842,539 849,547 841,546" fill="#2abd94"/>
<path d="M842,539 852,539 849,547" fill="#2ab991"/>
<path d="M852,539 860,548 849,547" fill="#2abd94"/>
<path d="M852,539 865,541 860,548" fill="#28b48d"/>
<path d="M865,541 870,547 860,548" fill="#29b68f"/>
<path d="M865,541 873,539 870,547" fill="#2bbe95"/>
<path d="M873,539 879,550 870,547" fill="#2bbd94"/>
<path d="M873,539 885,539 879,550" fill="#2aba92"/>
<path d="M885,539 889,550 879,550" fill="#2ab991"/>
<path d="M885,539 893,539 889,550" fill="#29b58e"/>
<path d="M893,539 897,550 889,550" fill="#29b78f"/>
<path d="M893,539 905,539 897,550" fill="#2ab991"/>
<path d="M905,539 909,550 897,550" fill="#29b890"/>
<path d="M905,539 915,538 909,550" fill="#29b890"/>
<path d="M915,538 920,547 909,550" fill="#2abb92"/>
<path d="M915,538 923,539 920,547" fill="#2bbe95"/>
<path d="M923,539 930,547 920,547" fill="#2abb92"/>
<path d="M923,539 933,538 930,547" fill="#2abc94"/>
<path d="M933,538 939,549 930,547" fill="#28b48d"/>
<path d="M933,538 944,541 939,549" fill="#2ab991"/>
<path d="M944,541 948,546 939,549" fill="#29b78f"/>
<path d="M944,541 955,541 948,546" fill="#28b48d"/>
<path d="M955,541 960,547 948,546" fill="#29b68e"/>
<path d="M955,541 963,539 960,547" fill="#2bbd94"/>
<path d="M963,539 970,548 960,547" fill="#2bbf96"/>
<path d="M963,539 973,539 970,548" fill="#29b890"/>
<path d="M973,539 978,550 970,548" fill="#28b38c"/>
<path d="M973,539 982,541 978,550" fill="#2ab991"/>
<path d="M982,541 988,547 978,550" fill="#28b48d"/>
<path d="M982,541 994,538 988,547" fill="#29b890"/>
<path d="M668,550 681,549 673,556" fill="#28b38d"/>
<path d="M681,549 686,555 673,556" fill="#2aba91"/>
<path d="M681,549 691,548 686,555" fill="#29b68e"/>
<path d="M691,548 696,556 686,555" fill="#29b68e"/>
<path d="M691,548 700,548 696,556" fill="#29b58e"/>
<path d="M700,548 703,558 696,556" fill="#29b58e"/>
<path d="M700,548 710,549 703,558" fill="#2abc93"/>
<path d="M710,549 716,557 703,558" fill="#2bbd94"/>
<path d="M710,549 720,549 716,557" fill="#29b58e"/>
<path d="M720,549 723,555 716,557" fill="#28b48d"/>
<path d="M720,549 729,547 723,555" fill="#2ab991"/>
<path d="M729,547 732,558 723,555" fill="#29b68f"/>
<path d="M729,547 740,550 732,558" fill="#28b48d"/>
<path d="M740,550 745,556 732,558" fill="#2abc93"/>
<path d="M740,550 748,547 745,556" fill="#2aba92"/>
<path d="M748,547 754,558 745,556" fill="#29b78f"/>
<path d="M748,547 757,547 754,558" fill="#2bbe95"/>
<path d="M757,547 765,558 754,558" fill="#2ab991"/>
<path d="M757,547 768,547 765,558" fill="#2aba92"/>
<path d="M768,547 776,556 765,558" fill="#2ab991"/>
<path d="M768,547 778,547 776,556" fill="#2abc93"/>
<path d="M778,547 786,557 776,556" fill="#2bbe95"/>
<path d="M778,547 788,550 786,557" fill="#29b48d"/>
<path d="M788,550 793,558 786,557" fill="#2ab991"/>
<path d="M788,550 797,546 793,558" fill="#2abb92"/>
<path d="M797,546 803,556 793,558" fill="#2abd94"/>
<path d="M797,546 811,548 803,556" fill="#2abd94"/>
<path d="M811,548 815,558 803,556" fill="#28b38c"/>
<path d="M811,548 820,547 815,558" fill="#28b48d"/>
<path d="M820,547 824,558 815,558" fill="#2abd94"/>
<path d="M820,547 827,546 824,558" fill="#29b68f"/>
<path d="M827,546 835,556 824,558" fill="#2bbe95"/>
<path d="M827,546 841,546 835,556" fill="#2ab991"/>
<path d="M841,546 842,559 835,556" fill="#2ab991"/>
<path d="M841,546 849,547 842,559" fill="#29b78f"/>
<path d="M849,547 852,557 842,559" fill="#28b28c"/>
<path d="M849,547 860,548 852,557" fill="#29b790"/>
<path d="M860,548 862,557 852,557" fill="#2aba92"/>
<path d="M860,548 870,547 862,557" fill="#29b48d"/>
<path d="M870,547 875,555 862,557" fill="#29b58e"/>
<path d="M870,547 879,550 875,555" fill="#2ab991"/>
<path d="M879,550 884,556 875,555" fill="#2aba91"/>
<path d="M879,550 889,550 884,556" fill="#2aba92"/>
<path d="M889,550 895,558 884,556" fill="#28b48d"/>
<path d="M889,550 897,550 895,558" fill="#2abc93"/>
<path d="M897,550 905,555 895,558" fill="#29b890"/>
<path d="M897,550 909,550 905,555" fill="#2bbf95"/>
<path d="M909,550 913,557 905,555" fill="#28b48d"/>
<path d="M909,550 920,547 913,557" fill="#28b38c"/>
<path d="M920,547 923,558 913,557" fill="#2abd94"/>
<path d="M920,547 930,547 923,558" fill="#2bbe95"/>
<path d="M930,547 933,556 923,558" fill="#29b58e"/>
<path d="M930,547 939,549 933,556" fill="#29b890"/>
<path d="M939,549 943,557 933,556" fill="#2aba92"/>
<path d="M939,549 948,546 943,557" fill="#2aba92"/>
<path d="M948,546 955,555 943,557" fill="#2abb92"/>
<path d="M948,546 960,547 955,555" fill="#2bbf95"/>
<path d="M960,547 964,556 955,555" fill="#2bbf95"/>
<path d="M960,547 970,548 964,556" fill="#28b28c"/>
<path d="M970,548 972,556 964,556" fill="#28b38c"/>
<path d="M970,548 978,550 972,556" fill="#2ab991"/>
<path d="M978,550 985,557 972,556" fill="#29b68f"/>
<path d="M978,550 988,547 985,557" fill="#29b48d"/>
</g>
<polygon points="903,276 909,274 905,281" fill="#8ff8e8"/>
</g>
<polygon points="679,431.5 700,428 718,423.7 747,408 776,402 799.5,394.6 824.7,385 853.8,363.6 873,359.8 903.5,355.9 922.8,343 942.2,326.9 961.6,304.3 984,278.4 984,559 679,608" fill="#27bb93" />
<polygon points="528.8,222 531.8,217.7 539.2,216.2 549.6,207.4 562.9,192.6 580.6,173.3 589.5,166.7 608.8,161.5 617,158 638,146 659,136 677,144 696,149 716,154 735,161 748,159 770,157 785,165 800,176 822,199 836,220 838,238 830,268 830,280 819.6,285.5 792,301 774,302.8 748.5,297.3 737.6,305.5 719.4,313.7 704.8,316.5 692,316.5 679,307.3 670,298.2 655.6,300 633.7,304.6 621,314.6 615.5,333 612,334 598,327 579,319 561,305 548,280 539.2,254.7 528.8,223.6" fill="#7a3585" />
<defs><clipPath id="pc"><polygon points="528.8,222 531.8,217.7 539.2,216.2 549.6,207.4 562.9,192.6 580.6,173.3 589.5,166.7 608.8,161.5 617,158 638,146 659,136 677,144 696,149 716,154 735,161 748,159 770,157 785,165 800,176 822,199 836,220 838,238 830,268 830,280 819.6,285.5 792,301 774,302.8 748.5,297.3 737.6,305.5 719.4,313.7 704.8,316.5 692,316.5 679,307.3 670,298.2 655.6,300 633.7,304.6 621,314.6 615.5,333 612,334 598,327 579,319 561,305 548,280 539.2,254.7 528.8,223.6"/></clipPath></defs>
<g clip-path="url(#pc)"><g filter="url(#mb)">
<path d="M644,136 648,146 640,143" fill="#7a3585"/>
<path d="M644,136 654,134 648,146" fill="#793484"/>
<path d="M654,134 661,143 648,146" fill="#642b6d"/>
<path d="M654,134 666,136 661,143" fill="#7c3687"/>
<path d="M666,136 672,142 661,143" fill="#7d3688"/>
<path d="M666,136 679,136 672,142" fill="#7b3586"/>
<path d="M679,136 683,146 672,142" fill="#793484"/>
<path d="M679,136 687,134 683,146" fill="#7a3585"/>
<path d="M687,134 695,145 683,146" fill="#773382"/>
<path d="M627,143 633,155 624,153" fill="#83398f"/>
<path d="M627,143 640,143 633,155" fill="#7e378a"/>
<path d="M640,143 645,152 633,155" fill="#602a69"/>
<path d="M640,143 648,146 645,152" fill="#612a6a"/>
<path d="M648,146 654,152 645,152" fill="#7a3585"/>
<path d="M648,146 661,143 654,152" fill="#763381"/>
<path d="M661,143 668,155 654,152" fill="#773482"/>
<path d="M661,143 672,142 668,155" fill="#7a3585"/>
<path d="M672,142 676,155 668,155" fill="#763381"/>
<path d="M672,142 683,146 676,155" fill="#7d3688"/>
<path d="M683,146 690,154 676,155" fill="#783483"/>
<path d="M683,146 695,145 690,154" fill="#7d3688"/>
<path d="M695,145 699,154 690,154" fill="#773482"/>
<path d="M695,145 704,144 699,154" fill="#783483"/>
<path d="M704,144 709,152 699,154" fill="#773382"/>
<path d="M599,155 606,164 596,163" fill="#7c3587"/>
<path d="M599,155 611,155 606,164" fill="#793484"/>
<path d="M611,155 618,163 606,164" fill="#783482"/>
<path d="M611,155 624,153 618,163" fill="#7f378a"/>
<path d="M624,153 628,163 618,163" fill="#5d2866"/>
<path d="M624,153 633,155 628,163" fill="#5f2967"/>
<path d="M633,155 639,164 628,163" fill="#773381"/>
<path d="M633,155 645,152 639,164" fill="#783483"/>
<path d="M645,152 650,163 639,164" fill="#793484"/>
<path d="M645,152 654,152 650,163" fill="#7b3586"/>
<path d="M654,152 661,165 650,163" fill="#7b3586"/>
<path d="M654,152 668,155 661,165" fill="#783483"/>
<path d="M668,155 673,165 661,165" fill="#7e3689"/>
<path d="M668,155 676,155 673,165" fill="#7d3688"/>
<path d="M676,155 685,162 673,165" fill="#753380"/>
<path d="M676,155 690,154 685,162" fill="#7d3688"/>
<path d="M690,154 694,165 685,162" fill="#7d3689"/>
<path d="M690,154 699,154 694,165" fill="#7c3688"/>
<path d="M699,154 706,162 694,165" fill="#763381"/>
<path d="M699,154 709,152 706,162" fill="#7d3688"/>
<path d="M709,152 714,163 706,162" fill="#7b3586"/>
<path d="M709,152 723,154 714,163" fill="#75327f"/>
<path d="M723,154 725,162 714,163" fill="#75327f"/>
<path d="M723,154 732,155 725,162" fill="#7e3689"/>
<path d="M732,155 736,164 725,162" fill="#7d3688"/>
<path d="M732,155 743,155 736,164" fill="#773382"/>
<path d="M743,155 750,165 736,164" fill="#763380"/>
<path d="M743,155 756,153 750,165" fill="#763381"/>
<path d="M756,153 758,164 750,165" fill="#773382"/>
<path d="M756,153 764,153 758,164" fill="#7c3687"/>
<path d="M764,153 771,162 758,164" fill="#783483"/>
<path d="M764,153 775,154 771,162" fill="#763381"/>
<path d="M775,154 783,165 771,162" fill="#7d3689"/>
<path d="M775,154 786,153 783,165" fill="#7c3688"/>
<path d="M786,153 792,165 783,165" fill="#763381"/>
<path d="M583,162 587,174 577,172" fill="#7d3689"/>
<path d="M583,162 596,163 587,174" fill="#7b3586"/>
<path d="M596,163 599,171 587,174" fill="#873a93"/>
<path d="M596,163 606,164 599,171" fill="#843990"/>
<path d="M606,164 611,174 599,171" fill="#612a6a"/>
<path d="M606,164 618,163 611,174" fill="#642b6d"/>
<path d="M618,163 624,172 611,174" fill="#7b3586"/>
<path d="M618,163 628,163 624,172" fill="#75327f"/>
<path d="M628,163 632,175 624,172" fill="#7b3587"/>
<path d="M628,163 639,164 632,175" fill="#7a3585"/>
<path d="M639,164 645,174 632,175" fill="#7c3687"/>
<path d="M639,164 650,163 645,174" fill="#793484"/>
<path d="M650,163 654,171 645,174" fill="#7d3689"/>
<path d="M650,163 661,165 654,171" fill="#7a3585"/>
<path d="M661,165 667,173 654,171" fill="#773482"/>
<path d="M661,165 673,165 667,173" fill="#773382"/>
<path d="M673,165 676,175 667,173" fill="#763381"/>
<path d="M673,165 685,162 676,175" fill="#793484"/>
<path d="M685,162 689,174 676,175" fill="#753380"/>
<path d="M685,162 694,165 689,174" fill="#793484"/>
<path d="M694,165 698,174 689,174" fill="#763381"/>
<path d="M694,165 706,162 698,174" fill="#793484"/>
<path d="M706,162 709,174 698,174" fill="#793484"/>
<path d="M706,162 714,163 709,174" fill="#7a3585"/>
<path d="M714,163 721,172 709,174" fill="#7d3688"/>
<path d="M714,163 725,162 721,172" fill="#763380"/>
<path d="M725,162 733,175 721,172" fill="#873a93"/>
<path d="M725,162 736,164 733,175" fill="#80378c"/>
<path d="M736,164 742,171 733,175" fill="#6b2e74"/>
<path d="M736,164 750,165 742,171" fill="#7b3586"/>
<path d="M750,165 754,172 742,171" fill="#7d3688"/>
<path d="M750,165 758,164 754,172" fill="#783483"/>
<path d="M758,164 764,171 754,172" fill="#793484"/>
<path d="M758,164 771,162 764,171" fill="#7e3689"/>
<path d="M771,162 775,172 764,171" fill="#753380"/>
<path d="M771,162 783,165 775,172" fill="#7b3586"/>
<path d="M783,165 787,172 775,172" fill="#7b3586"/>
<path d="M783,165 792,165 787,172" fill="#75337f"/>
<path d="M792,165 799,172 787,172" fill="#7b3586"/>
<path d="M568,175 574,183 561,184" fill="#7b3587"/>
<path d="M568,175 577,172 574,183" fill="#7e3689"/>
<path d="M577,172 583,182 574,183" fill="#7e378a"/>
<path d="M577,172 587,174 583,182" fill="#863a92"/>
<path d="M587,174 593,181 583,182" fill="#6b2e75"/>
<path d="M587,174 599,171 593,181" fill="#672d70"/>
<path d="M599,171 604,183 593,181" fill="#73327e"/>
<path d="M599,171 611,174 604,183" fill="#72317c"/>
<path d="M611,174 616,181 604,183" fill="#7c3587"/>
<path d="M611,174 624,172 616,181" fill="#7b3586"/>
<path d="M624,172 626,184 616,181" fill="#783483"/>
<path d="M624,172 632,175 626,184" fill="#7d3688"/>
<path d="M632,175 640,183 626,184" fill="#783483"/>
<path d="M632,175 645,174 640,183" fill="#793484"/>
<path d="M645,174 649,181 640,183" fill="#7a3585"/>
<path d="M645,174 654,171 649,181" fill="#7c3687"/>
<path d="M654,171 660,182 649,181" fill="#773381"/>
<path d="M654,171 667,173 660,182" fill="#793484"/>
<path d="M667,173 670,182 660,182" fill="#793484"/>
<path d="M667,173 676,175 670,182" fill="#7a3585"/>
<path d="M676,175 682,184 670,182" fill="#7d3688"/>
<path d="M676,175 689,174 682,184" fill="#773482"/>
<path d="M689,174 696,183 682,184" fill="#7d3688"/>
<path d="M689,174 698,174 696,183" fill="#793483"/>
<path d="M698,174 704,184 696,183" fill="#7a3585"/>
<path d="M698,174 709,174 704,184" fill="#773482"/>
<path d="M709,174 715,182 704,184" fill="#7a3585"/>
<path d="M709,174 721,172 715,182" fill="#7e378a"/>
<path d="M721,172 725,182 715,182" fill="#80378c"/>
<path d="M721,172 733,175 725,182" fill="#7e3689"/>
<path d="M733,175 738,182 725,182" fill="#4c2153"/>
<path d="M733,175 742,171 738,182" fill="#652c6e"/>
<path d="M742,171 748,182 738,182" fill="#773381"/>
<path d="M742,171 754,172 748,182" fill="#7a3585"/>
<path d="M754,172 758,181 748,182" fill="#7b3586"/>
<path d="M754,172 764,171 758,181" fill="#7c3688"/>
<path d="M764,171 769,182 758,181" fill="#753380"/>
<path d="M764,171 775,172 769,182" fill="#7c3587"/>
<path d="M775,172 780,181 769,182" fill="#7d3689"/>
<path d="M775,172 787,172 780,181" fill="#7a3585"/>
<path d="M787,172 792,181 780,181" fill="#753380"/>
<path d="M787,172 799,172 792,181" fill="#783482"/>
<path d="M799,172 804,183 792,181" fill="#75327f"/>
<path d="M799,172 809,172 804,183" fill="#763381"/>
<path d="M809,172 816,183 804,183" fill="#7e3689"/>
<path d="M561,184 567,193 555,192" fill="#7e3689"/>
<path d="M561,184 574,183 567,193" fill="#81388d"/>
<path d="M574,183 580,193 567,193" fill="#6d2f77"/>
<path d="M574,183 583,182 580,193" fill="#6d2f77"/>
<path d="M583,182 590,194 580,193" fill="#71317b"/>
<path d="M583,182 593,181 590,194" fill="#6d2f77"/>
<path d="M593,181 601,193 590,194" fill="#7b3586"/>
<path d="M593,181 604,183 601,193" fill="#7b3587"/>
<path d="M604,183 610,190 601,193" fill="#7a3586"/>
<path d="M604,183 616,181 610,190" fill="#7b3586"/>
<path d="M616,181 621,191 610,190" fill="#773381"/>
<path d="M616,181 626,184 621,191" fill="#7b3586"/>
<path d="M626,184 632,193 621,191" fill="#793484"/>
<path d="M626,184 640,183 632,193" fill="#7c3687"/>
<path d="M640,183 645,193 632,193" fill="#763380"/>
<path d="M640,183 649,181 645,193" fill="#763381"/>
<path d="M649,181 656,193 645,193" fill="#753380"/>
<path d="M649,181 660,182 656,193" fill="#7c3687"/>
<path d="M660,182 666,190 656,193" fill="#7e3689"/>
<path d="M660,182 670,182 666,190" fill="#7b3586"/>
<path d="M670,182 678,193 666,190" fill="#783483"/>
<path d="M670,182 682,184 678,193" fill="#7d3688"/>
<path d="M682,184 688,192 678,193" fill="#7c3688"/>
<path d="M682,184 696,183 688,192" fill="#7a3585"/>
<path d="M696,183 700,190 688,192" fill="#773382"/>
<path d="M696,183 704,184 700,190" fill="#783482"/>
<path d="M704,184 711,191 700,190" fill="#793484"/>
<path d="M704,184 715,182 711,191" fill="#783483"/>
<path d="M715,182 720,191 711,191" fill="#7b3586"/>
<path d="M715,182 725,182 720,191" fill="#82388e"/>
<path d="M725,182 733,191 720,191" fill="#682d71"/>
<path d="M725,182 738,182 733,191" fill="#4e2155"/>
<path d="M738,182 744,194 733,191" fill="#783483"/>
<path d="M738,182 748,182 744,194" fill="#75327f"/>
<path d="M748,182 754,192 744,194" fill="#763380"/>
<path d="M748,182 758,181 754,192" fill="#7d3688"/>
<path d="M758,181 765,193 754,192" fill="#7a3585"/>
<path d="M758,181 769,182 765,193" fill="#7e3689"/>
<path d="M769,182 777,192 765,193" fill="#793484"/>
<path d="M769,182 780,181 777,192" fill="#75327f"/>
<path d="M780,181 788,190 777,192" fill="#783483"/>
<path d="M780,181 792,181 788,190" fill="#7a3585"/>
<path d="M792,181 797,191 788,190" fill="#7e3689"/>
<path d="M792,181 804,183 797,191" fill="#7e378a"/>
<path d="M804,183 810,191 797,191" fill="#793484"/>
<path d="M804,183 816,183 810,191" fill="#793484"/>
<path d="M816,183 821,190 810,191" fill="#763380"/>
<path d="M555,192 563,203 549,201" fill="#81388d"/>
<path d="M555,192 567,193 563,203" fill="#7a3585"/>
<path d="M567,193 573,201 563,203" fill="#5e2967"/>
<path d="M567,193 580,193 573,201" fill="#602a69"/>
<path d="M580,193 583,203 573,201" fill="#74327f"/>
<path d="M580,193 590,194 583,203" fill="#7b3586"/>
<path d="M590,194 594,202 583,203" fill="#763380"/>
<path d="M590,194 601,193 594,202" fill="#7e3689"/>
<path d="M601,193 604,202 594,202" fill="#753380"/>
<path d="M601,193 610,190 604,202" fill="#7d3688"/>
<path d="M610,190 619,200 604,202" fill="#763381"/>
<path d="M610,190 621,191 619,200" fill="#75327f"/>
<path d="M621,191 629,202 619,200" fill="#7c3587"/>
<path d="M621,191 632,193 629,202" fill="#773382"/>
<path d="M632,193 640,202 629,202" fill="#7c3587"/>
<path d="M632,193 645,193 640,202" fill="#763381"/>
<path d="M645,193 649,203 640,202" fill="#753380"/>
<path d="M645,193 656,193 649,203" fill="#7c3687"/>
<path d="M656,193 661,200 649,203" fill="#7c3587"/>
<path d="M656,193 666,190 661,200" fill="#7d3688"/>
<path d="M666,190 670,202 661,200" fill="#7c3587"/>
<path d="M666,190 678,193 670,202" fill="#753380"/>
<path d="M678,193 683,201 670,202" fill="#7b3586"/>
<path d="M678,193 688,192 683,201" fill="#7c3587"/>
<path d="M688,192 692,201 683,201" fill="#793484"/>
<path d="M688,192 700,190 692,201" fill="#7e3689"/>
<path d="M700,190 704,203 692,201" fill="#773382"/>
<path d="M700,190 711,191 704,203" fill="#7e3689"/>
<path d="M711,191 714,203 704,203" fill="#7c3687"/>
<path d="M711,191 720,191 714,203" fill="#783483"/>
<path d="M720,191 728,200 714,203" fill="#763381"/>
<path d="M720,191 733,191 728,200" fill="#512358"/>
<path d="M733,191 740,202 728,200" fill="#74327e"/>
<path d="M733,191 744,194 740,202" fill="#753380"/>
<path d="M744,194 750,201 740,202" fill="#783482"/>
<path d="M744,194 754,192 750,201" fill="#7c3587"/>
<path d="M754,192 759,201 750,201" fill="#763381"/>
<path d="M754,192 765,193 759,201" fill="#7d3688"/>
<path d="M765,193 773,202 759,201" fill="#793484"/>
<path d="M765,193 777,192 773,202" fill="#753380"/>
<path d="M777,192 781,201 773,202" fill="#783483"/>
<path d="M777,192 788,190 781,201" fill="#7a3585"/>
<path d="M788,190 792,200 781,201" fill="#793484"/>
<path d="M788,190 797,191 792,200" fill="#7b3586"/>
<path d="M797,191 802,203 792,200" fill="#763381"/>
<path d="M797,191 810,191 802,203" fill="#7c3688"/>
<path d="M810,191 814,203 802,203" fill="#7a3585"/>
<path d="M810,191 821,190 814,203" fill="#7d3689"/>
<path d="M821,190 825,201 814,203" fill="#7e3689"/>
<path d="M549,201 557,211 546,209" fill="#793484"/>
<path d="M549,201 563,203 557,211" fill="#74327f"/>
<path d="M563,203 568,212 557,211" fill="#7b3586"/>
<path d="M563,203 573,201 568,212" fill="#7c3688"/>
<path d="M573,201 577,209 568,212" fill="#7c3688"/>
<path d="M573,201 583,203 577,209" fill="#7a3585"/>
<path d="M583,203 591,210 577,209" fill="#773482"/>
<path d="M583,203 594,202 591,210" fill="#753380"/>
<path d="M594,202 600,211 591,210" fill="#7e378a"/>
<path d="M594,202 604,202 600,211" fill="#7b3587"/>
<path d="M604,202 610,212 600,211" fill="#7d3688"/>
<path d="M604,202 619,200 610,212" fill="#783483"/>
<path d="M619,200 624,210 610,212" fill="#7b3586"/>
<path d="M619,200 629,202 624,210" fill="#7e378a"/>
<path d="M629,202 634,210 624,210" fill="#7d3688"/>
<path d="M629,202 640,202 634,210" fill="#7a3586"/>
<path d="M640,202 645,211 634,210" fill="#783482"/>
<path d="M640,202 649,203 645,211" fill="#793484"/>
<path d="M649,203 654,210 645,211" fill="#7d3689"/>
<path d="M649,203 661,200 654,210" fill="#783483"/>
<path d="M661,200 665,213 654,210" fill="#7b3586"/>
<path d="M661,200 670,202 665,213" fill="#7a3586"/>
<path d="M670,202 677,210 665,213" fill="#7d3689"/>
<path d="M670,202 683,201 677,210" fill="#7d3688"/>
<path d="M683,201 690,213 677,210" fill="#773482"/>
<path d="M683,201 692,201 690,213" fill="#75327f"/>
<path d="M692,201 699,210 690,213" fill="#773382"/>
<path d="M692,201 704,203 699,210" fill="#793484"/>
<path d="M704,203 709,209 699,210" fill="#7a3585"/>
<path d="M704,203 714,203 709,209" fill="#7d3689"/>
<path d="M714,203 721,209 709,209" fill="#863a92"/>
<path d="M714,203 728,200 721,209" fill="#672c70"/>
<path d="M728,200 731,210 721,209" fill="#57265f"/>
<path d="M728,200 740,202 731,210" fill="#773382"/>
<path d="M740,202 744,213 731,210" fill="#7d3688"/>
<path d="M740,202 750,201 744,213" fill="#7a3585"/>
<path d="M750,201 755,211 744,213" fill="#773482"/>
<path d="M750,201 759,201 755,211" fill="#7d3688"/>
<path d="M759,201 765,211 755,211" fill="#7c3688"/>
<path d="M759,201 773,202 765,211" fill="#7b3586"/>
<path d="M773,202 776,210 765,211" fill="#7e3689"/>
<path d="M773,202 781,201 776,210" fill="#783483"/>
<path d="M781,201 786,210 776,210" fill="#753380"/>
<path d="M781,201 792,200 786,210" fill="#7a3585"/>
<path d="M792,200 800,210 786,210" fill="#7c3688"/>
<path d="M792,200 802,203 800,210" fill="#773381"/>
<path d="M802,203 809,212 800,210" fill="#7c3687"/>
<path d="M802,203 814,203 809,212" fill="#7e378a"/>
<path d="M814,203 822,210 809,212" fill="#70307a"/>
<path d="M814,203 825,201 822,210" fill="#6a2e74"/>
<path d="M825,201 830,210 822,210" fill="#6c2f76"/>
<path d="M524,213 530,221 516,222" fill="#793484"/>
<path d="M524,213 536,211 530,221" fill="#773381"/>
<path d="M536,211 540,219 530,221" fill="#773382"/>
<path d="M536,211 546,209 540,219" fill="#7c3687"/>
<path d="M546,209 550,222 540,219" fill="#7c3688"/>
<path d="M546,209 557,211 550,222" fill="#793484"/>
<path d="M557,211 563,222 550,222" fill="#753380"/>
<path d="M557,211 568,212 563,222" fill="#7c3688"/>
<path d="M568,212 575,220 563,222" fill="#7c3687"/>
<path d="M568,212 577,209 575,220" fill="#773382"/>
<path d="M577,209 582,219 575,220" fill="#7a3585"/>
<path d="M577,209 591,210 582,219" fill="#7d3689"/>
<path d="M591,210 595,221 582,219" fill="#7d3689"/>
<path d="M591,210 600,211 595,221" fill="#7a3585"/>
<path d="M600,211 608,222 595,221" fill="#793484"/>
<path d="M600,211 610,212 608,222" fill="#7a3586"/>
<path d="M610,212 617,222 608,222" fill="#783482"/>
<path d="M610,212 624,210 617,222" fill="#773382"/>
<path d="M624,210 628,221 617,222" fill="#773382"/>
<path d="M624,210 634,210 628,221" fill="#7c3587"/>
<path d="M634,210 637,222 628,221" fill="#783483"/>
<path d="M634,210 645,211 637,222" fill="#7a3585"/>
<path d="M645,211 649,222 637,222" fill="#793483"/>
<path d="M645,211 654,210 649,222" fill="#7a3585"/>
<path d="M654,210 661,220 649,222" fill="#763381"/>
<path d="M654,210 665,213 661,220" fill="#753380"/>
<path d="M665,213 670,220 661,220" fill="#7e378a"/>
<path d="M665,213 677,210 670,220" fill="#783483"/>
<path d="M677,210 683,221 670,220" fill="#763380"/>
<path d="M677,210 690,213 683,221" fill="#7b3586"/>
<path d="M690,213 692,219 683,221" fill="#7c3688"/>
<path d="M690,213 699,210 692,219" fill="#763381"/>
<path d="M699,210 705,221 692,219" fill="#7a3586"/>
<path d="M699,210 709,209 705,221" fill="#783483"/>
<path d="M709,209 715,220 705,221" fill="#83388e"/>
<path d="M709,209 721,209 715,220" fill="#7c3687"/>
<path d="M721,209 727,219 715,220" fill="#471e4d"/>
<path d="M721,209 731,210 727,219" fill="#612a6a"/>
<path d="M731,210 737,221 727,219" fill="#7c3587"/>
<path d="M731,210 744,213 737,221" fill="#793484"/>
<path d="M744,213 751,221 737,221" fill="#7a3585"/>
<path d="M744,213 755,211 751,221" fill="#773382"/>
<path d="M755,211 761,221 751,221" fill="#7c3688"/>
<path d="M755,211 765,211 761,221" fill="#793484"/>
<path d="M765,211 770,220 761,221" fill="#80378c"/>
<path d="M765,211 776,210 770,220" fill="#7d3688"/>
<path d="M776,210 784,222 770,220" fill="#7e3689"/>
<path d="M776,210 786,210 784,222" fill="#7e3689"/>
<path d="M786,210 792,219 784,222" fill="#773382"/>
<path d="M786,210 800,210 792,219" fill="#753380"/>
<path d="M800,210 804,221 792,219" fill="#773381"/>
<path d="M800,210 809,212 804,221" fill="#763381"/>
<path d="M809,212 814,220 804,221" fill="#753380"/>
<path d="M809,212 822,210 814,220" fill="#72317c"/>
<path d="M822,210 826,222 814,220" fill="#71317b"/>
<path d="M822,210 830,210 826,222" fill="#6b2e74"/>
<path d="M830,210 836,219 826,222" fill="#6a2e73"/>
<path d="M516,222 530,221 524,231" fill="#7e3689"/>
<path d="M530,221 534,229 524,231" fill="#7e3689"/>
<path d="M530,221 540,219 534,229" fill="#753380"/>
<path d="M540,219 547,230 534,229" fill="#7a3586"/>
<path d="M540,219 550,222 547,230" fill="#783483"/>
<path d="M550,222 558,229 547,230" fill="#763380"/>
<path d="M550,222 563,222 558,229" fill="#7e3689"/>
<path d="M563,222 566,231 558,229" fill="#773382"/>
<path d="M563,222 575,220 566,231" fill="#7a3585"/>
<path d="M575,220 577,232 566,231" fill="#7b3586"/>
<path d="M575,220 582,219 577,232" fill="#7e3689"/>
<path d="M582,219 589,229 577,232" fill="#7b3586"/>
<path d="M582,219 595,221 589,229" fill="#783483"/>
<path d="M595,221 599,230 589,229" fill="#793484"/>
<path d="M595,221 608,222 599,230" fill="#763381"/>
<path d="M608,222 612,232 599,230" fill="#7f378a"/>
<path d="M608,222 617,222 612,232" fill="#80378c"/>
<path d="M617,222 621,230 612,232" fill="#73327d"/>
<path d="M617,222 628,221 621,230" fill="#72317c"/>
<path d="M628,221 632,232 621,230" fill="#72317c"/>
<path d="M628,221 637,222 632,232" fill="#773482"/>
<path d="M637,222 643,228 632,232" fill="#7d3688"/>
<path d="M637,222 649,222 643,228" fill="#7e3689"/>
<path d="M649,222 654,230 643,228" fill="#7d3688"/>
<path d="M649,222 661,220 654,230" fill="#753380"/>
<path d="M661,220 668,232 654,230" fill="#7c3688"/>
<path d="M661,220 670,220 668,232" fill="#7c3587"/>
<path d="M670,220 678,232 668,232" fill="#7b3586"/>
<path d="M670,220 683,221 678,232" fill="#7e378a"/>
<path d="M683,221 690,230 678,232" fill="#753380"/>
<path d="M683,221 692,219 690,230" fill="#763381"/>
<path d="M692,219 698,232 690,230" fill="#7c3687"/>
<path d="M692,219 705,221 698,232" fill="#7e3689"/>
<path d="M705,221 711,228 698,232" fill="#843990"/>
<path d="M705,221 715,220 711,228" fill="#7e3689"/>
<path d="M715,220 722,230 711,228" fill="#4c2153"/>
<path d="M715,220 727,219 722,230" fill="#5d2865"/>
<path d="M727,219 732,230 722,230" fill="#74327f"/>
<path d="M727,219 737,221 732,230" fill="#783482"/>
<path d="M737,221 742,228 732,230" fill="#773382"/>
<path d="M737,221 751,221 742,228" fill="#763381"/>
<path d="M751,221 753,230 742,228" fill="#793484"/>
<path d="M751,221 761,221 753,230" fill="#763381"/>
<path d="M761,221 767,229 753,230" fill="#793484"/>
<path d="M761,221 770,220 767,229" fill="#7c3688"/>
<path d="M770,220 778,229 767,229" fill="#6f3079"/>
<path d="M770,220 784,222 778,229" fill="#6e2f78"/>
<path d="M784,222 787,232 778,229" fill="#773382"/>
<path d="M784,222 792,219 787,232" fill="#763381"/>
<path d="M792,219 800,230 787,232" fill="#75327f"/>
<path d="M792,219 804,221 800,230" fill="#7e3689"/>
<path d="M804,221 807,230 800,230" fill="#773382"/>
<path d="M804,221 814,220 807,230" fill="#7e3689"/>
<path d="M814,220 820,232 807,230" fill="#7d3688"/>
<path d="M814,220 826,222 820,232" fill="#7b3586"/>
<path d="M826,222 830,230 820,232" fill="#6f307a"/>
<path d="M826,222 836,219 830,230" fill="#662c70"/>
<path d="M836,219 844,228 830,230" fill="#682d72"/>
<path d="M524,231 534,229 530,239" fill="#7e3689"/>
<path d="M534,229 541,241 530,239" fill="#7d3688"/>
<path d="M534,229 547,230 541,241" fill="#7b3586"/>
<path d="M547,230 550,239 541,241" fill="#793484"/>
<path d="M547,230 558,229 550,239" fill="#783483"/>
<path d="M558,229 564,240 550,239" fill="#7d3688"/>
<path d="M558,229 566,231 564,240" fill="#793484"/>
<path d="M566,231 572,241 564,240" fill="#7b3586"/>
<path d="M566,231 577,232 572,241" fill="#763381"/>
<path d="M577,232 583,239 572,241" fill="#773382"/>
<path d="M577,232 589,229 583,239" fill="#753380"/>
<path d="M589,229 593,241 583,239" fill="#7c3587"/>
<path d="M589,229 599,230 593,241" fill="#7a3585"/>
<path d="M599,230 607,240 593,241" fill="#763381"/>
<path d="M599,230 612,232 607,240" fill="#7d3688"/>
<path d="M612,232 619,238 607,240" fill="#74327e"/>
<path d="M612,232 621,230 619,238" fill="#6e2f78"/>
<path d="M621,230 627,240 619,238" fill="#6a2e73"/>
<path d="M621,230 632,232 627,240" fill="#6b2e74"/>
<path d="M632,232 641,242 627,240" fill="#70307a"/>
<path d="M632,232 643,228 641,242" fill="#72317c"/>
<path d="M643,228 649,239 641,242" fill="#71317b"/>
<path d="M643,228 654,230 649,239" fill="#793484"/>
<path d="M654,230 661,240 649,239" fill="#773382"/>
<path d="M654,230 668,232 661,240" fill="#7e3689"/>
<path d="M668,232 674,239 661,240" fill="#763380"/>
<path d="M668,232 678,232 674,239" fill="#7e378a"/>
<path d="M678,232 684,241 674,239" fill="#753380"/>
<path d="M678,232 690,230 684,241" fill="#7d3689"/>
<path d="M690,230 695,241 684,241" fill="#7b3587"/>
<path d="M690,230 698,232 695,241" fill="#773382"/>
<path d="M698,232 705,239 695,241" fill="#81388d"/>
<path d="M698,232 711,228 705,239" fill="#81388c"/>
<path d="M711,228 715,239 705,239" fill="#4d2154"/>
<path d="M711,228 722,230 715,239" fill="#522359"/>
<path d="M722,230 728,238 715,239" fill="#763380"/>
<path d="M722,230 732,230 728,238" fill="#7e378a"/>
<path d="M732,230 737,241 728,238" fill="#7e378a"/>
<path d="M732,230 742,228 737,241" fill="#7e3689"/>
<path d="M742,228 748,238 737,241" fill="#763380"/>
<path d="M742,228 753,230 748,238" fill="#773482"/>
<path d="M753,230 758,240 748,238" fill="#7d3689"/>
<path d="M753,230 767,229 758,240" fill="#753380"/>
<path d="M767,229 770,242 758,240" fill="#793484"/>
<path d="M767,229 778,229 770,242" fill="#632b6c"/>
<path d="M778,229 783,242 770,242" fill="#682d71"/>
<path d="M778,229 787,232 783,242" fill="#632b6c"/>
<path d="M787,232 792,238 783,242" fill="#6e3078"/>
<path d="M787,232 800,230 792,238" fill="#773381"/>
<path d="M800,230 802,240 792,238" fill="#753380"/>
<path d="M800,230 807,230 802,240" fill="#75327f"/>
<path d="M807,230 816,240 802,240" fill="#7e3689"/>
<path d="M807,230 820,232 816,240" fill="#7b3586"/>
<path d="M820,232 825,240 816,240" fill="#7d3688"/>
<path d="M820,232 830,230 825,240" fill="#7a3585"/>
<path d="M830,230 837,241 825,240" fill="#74327e"/>
<path d="M830,230 844,228 837,241" fill="#652b6e"/>
<path d="M844,228 849,241 837,241" fill="#6c2f76"/>
<path d="M530,239 541,241 535,249" fill="#763381"/>
<path d="M541,241 546,248 535,249" fill="#763381"/>
<path d="M541,241 550,239 546,248" fill="#7c3687"/>
<path d="M550,239 555,248 546,248" fill="#7c3587"/>
<path d="M550,239 564,240 555,248" fill="#773381"/>
<path d="M564,240 566,251 555,248" fill="#753380"/>
<path d="M564,240 572,241 566,251" fill="#753380"/>
<path d="M572,241 579,249 566,251" fill="#7b3586"/>
<path d="M572,241 583,239 579,249" fill="#793484"/>
<path d="M583,239 589,251 579,249" fill="#773482"/>
<path d="M583,239 593,241 589,251" fill="#773381"/>
<path d="M593,241 600,248 589,251" fill="#7b3586"/>
<path d="M593,241 607,240 600,248" fill="#7c3587"/>
<path d="M607,240 613,250 600,248" fill="#7c3688"/>
<path d="M607,240 619,238 613,250" fill="#793484"/>
<path d="M619,238 624,248 613,250" fill="#753380"/>
<path d="M619,238 627,240 624,248" fill="#6f3079"/>
<path d="M627,240 633,251 624,248" fill="#773482"/>
<path d="M627,240 641,242 633,251" fill="#6e3078"/>
<path d="M641,242 646,251 633,251" fill="#72317d"/>
<path d="M641,242 649,239 646,251" fill="#682d72"/>
<path d="M649,239 653,249 646,251" fill="#6f307a"/>
<path d="M649,239 661,240 653,249" fill="#72317c"/>
<path d="M661,240 665,248 653,249" fill="#763380"/>
<path d="M661,240 674,239 665,248" fill="#7c3587"/>
<path d="M674,239 679,250 665,248" fill="#783483"/>
<path d="M674,239 684,241 679,250" fill="#75327f"/>
<path d="M684,241 690,249 679,250" fill="#81388d"/>
<path d="M684,241 695,241 690,249" fill="#7f378a"/>
<path d="M695,241 701,249 690,249" fill="#863a92"/>
<path d="M695,241 705,239 701,249" fill="#7e368a"/>
<path d="M705,239 709,251 701,249" fill="#471f4e"/>
<path d="M705,239 715,239 709,251" fill="#512358"/>
<path d="M715,239 723,248 709,251" fill="#74327e"/>
<path d="M715,239 728,238 723,248" fill="#763381"/>
<path d="M728,238 733,250 723,248" fill="#783483"/>
<path d="M728,238 737,241 733,250" fill="#7a3586"/>
<path d="M737,241 742,249 733,250" fill="#75327f"/>
<path d="M737,241 748,238 742,249" fill="#7a3585"/>
<path d="M748,238 753,248 742,249" fill="#793484"/>
<path d="M748,238 758,240 753,248" fill="#7a3585"/>
<path d="M758,240 764,250 753,248" fill="#763380"/>
<path d="M758,240 770,242 764,250" fill="#7b3587"/>
<path d="M770,242 777,248 764,250" fill="#7c3687"/>
<path d="M770,242 783,242 777,248" fill="#74327f"/>
<path d="M783,242 785,249 777,248" fill="#692d73"/>
<path d="M783,242 792,238 785,249" fill="#632b6c"/>
<path d="M792,238 799,248 785,249" fill="#642b6d"/>
<path d="M792,238 802,240 799,248" fill="#783483"/>
<path d="M802,240 809,248 799,248" fill="#773382"/>
<path d="M802,240 816,240 809,248" fill="#82388e"/>
<path d="M816,240 821,250 809,248" fill="#7c3587"/>
<path d="M816,240 825,240 821,250" fill="#73327e"/>
<path d="M825,240 830,248 821,250" fill="#57265f"/>
<path d="M825,240 837,241 830,248" fill="#632b6c"/>
<path d="M837,241 842,250 830,248" fill="#71317b"/>
<path d="M837,241 849,241 842,250" fill="#6f3079"/>
<path d="M535,249 546,248 539,259" fill="#7e3689"/>
<path d="M546,248 550,259 539,259" fill="#773382"/>
<path d="M546,248 555,248 550,259" fill="#763381"/>
<path d="M555,248 563,261 550,259" fill="#763380"/>
<path d="M555,248 566,251 563,261" fill="#773382"/>
<path d="M566,251 572,258 563,261" fill="#7d3688"/>
<path d="M566,251 579,249 572,258" fill="#75337f"/>
<path d="M579,249 585,258 572,258" fill="#763380"/>
<path d="M579,249 589,251 585,258" fill="#7b3587"/>
<path d="M589,251 593,261 585,258" fill="#773381"/>
<path d="M589,251 600,248 593,261" fill="#75327f"/>
<path d="M600,248 605,260 593,261" fill="#7a3586"/>
<path d="M600,248 613,250 605,260" fill="#7a3585"/>
<path d="M613,250 616,261 605,260" fill="#7a3585"/>
<path d="M613,250 624,248 616,261" fill="#7b3587"/>
<path d="M624,248 628,258 616,261" fill="#763380"/>
<path d="M624,248 633,251 628,258" fill="#7c3688"/>
<path d="M633,251 637,259 628,258" fill="#7b3586"/>
<path d="M633,251 646,251 637,259" fill="#73317d"/>
<path d="M646,251 650,261 637,259" fill="#74327e"/>
<path d="M646,251 653,249 650,261" fill="#71317b"/>
<path d="M653,249 659,259 650,261" fill="#72317c"/>
<path d="M653,249 665,248 659,259" fill="#6a2e74"/>
<path d="M665,248 671,259 659,259" fill="#692d72"/>
<path d="M665,248 679,250 671,259" fill="#72317c"/>
<path d="M679,250 681,258 671,259" fill="#70307a"/>
<path d="M679,250 690,249 681,258" fill="#82388e"/>
<path d="M690,249 694,261 681,258" fill="#632b6c"/>
<path d="M690,249 701,249 694,261" fill="#4b2052"/>
<path d="M701,249 703,259 694,261" fill="#5e2866"/>
<path d="M701,249 709,251 703,259" fill="#622a6b"/>
<path d="M709,251 717,261 703,259" fill="#753380"/>
<path d="M709,251 723,248 717,261" fill="#7c3688"/>
<path d="M723,248 726,257 717,261" fill="#7e3689"/>
<path d="M723,248 733,250 726,257" fill="#783483"/>
<path d="M733,250 740,261 726,257" fill="#793484"/>
<path d="M733,250 742,249 740,261" fill="#7d3688"/>
<path d="M742,249 749,257 740,261" fill="#7a3585"/>
<path d="M742,249 753,248 749,257" fill="#783483"/>
<path d="M753,248 762,259 749,257" fill="#7e3689"/>
<path d="M753,248 764,250 762,259" fill="#7c3687"/>
<path d="M764,250 772,259 762,259" fill="#783483"/>
<path d="M764,250 777,248 772,259" fill="#773382"/>
<path d="M777,248 783,258 772,259" fill="#783483"/>
<path d="M777,248 785,249 783,258" fill="#74327f"/>
<path d="M785,249 794,258 783,258" fill="#783483"/>
<path d="M785,249 799,248 794,258" fill="#672d71"/>
<path d="M799,248 803,260 794,258" fill="#612a6a"/>
<path d="M799,248 809,248 803,260" fill="#6e2f78"/>
<path d="M809,248 816,258 803,260" fill="#5a2762"/>
<path d="M809,248 821,250 816,258" fill="#55255d"/>
<path d="M821,250 825,259 816,258" fill="#622a6b"/>
<path d="M821,250 830,248 825,259" fill="#662c6f"/>
<path d="M830,248 837,259 825,259" fill="#793484"/>
<path d="M830,248 842,250 837,259" fill="#753380"/>
<path d="M539,259 547,267 535,267" fill="#793484"/>
<path d="M539,259 550,259 547,267" fill="#7b3586"/>
<path d="M550,259 557,269 547,267" fill="#783483"/>
<path d="M550,259 563,261 557,269" fill="#7a3585"/>
<path d="M563,261 568,268 557,269" fill="#753380"/>
<path d="M563,261 572,258 568,268" fill="#793484"/>
<path d="M572,258 578,269 568,268" fill="#7a3585"/>
<path d="M572,258 585,258 578,269" fill="#75327f"/>
<path d="M585,258 589,269 578,269" fill="#763381"/>
<path d="M585,258 593,261 589,269" fill="#7e3689"/>
<path d="M593,261 600,268 589,269" fill="#7c3687"/>
<path d="M593,261 605,260 600,268" fill="#7e3689"/>
<path d="M605,260 609,269 600,268" fill="#7b3586"/>
<path d="M605,260 616,261 609,269" fill="#7d3688"/>
<path d="M616,261 622,267 609,269" fill="#7d3689"/>
<path d="M616,261 628,258 622,267" fill="#7d3689"/>
<path d="M628,258 634,270 622,267" fill="#753380"/>
<path d="M628,258 637,259 634,270" fill="#7b3586"/>
<path d="M637,259 644,267 634,270" fill="#773382"/>
<path d="M637,259 650,261 644,267" fill="#7b3586"/>
<path d="M650,261 655,267 644,267" fill="#773382"/>
<path d="M650,261 659,259 655,267" fill="#783483"/>
<path d="M659,259 665,268 655,267" fill="#7b3586"/>
<path d="M659,259 671,259 665,268" fill="#73317d"/>
<path d="M671,259 676,268 665,268" fill="#6e3078"/>
<path d="M671,259 681,258 676,268" fill="#6d2f77"/>
<path d="M681,258 688,267 676,268" fill="#6c2f76"/>
<path d="M681,258 694,261 688,267" fill="#682d72"/>
<path d="M694,261 700,267 688,267" fill="#6e2f78"/>
<path d="M694,261 703,259 700,267" fill="#72317d"/>
<path d="M703,259 711,270 700,267" fill="#7a3585"/>
<path d="M703,259 717,261 711,270" fill="#763380"/>
<path d="M717,261 721,267 711,270" fill="#7a3586"/>
<path d="M717,261 726,257 721,267" fill="#7e3689"/>
<path d="M726,257 732,268 721,267" fill="#7a3585"/>
<path d="M726,257 740,261 732,268" fill="#773482"/>
<path d="M740,261 745,267 732,268" fill="#793484"/>
<path d="M740,261 749,257 745,267" fill="#7a3585"/>
<path d="M749,257 756,271 745,267" fill="#763381"/>
<path d="M749,257 762,259 756,271" fill="#763380"/>
<path d="M762,259 766,270 756,271" fill="#763381"/>
<path d="M762,259 772,259 766,270" fill="#783482"/>
<path d="M772,259 775,270 766,270" fill="#7b3586"/>
<path d="M772,259 783,258 775,270" fill="#7a3585"/>
<path d="M783,258 787,270 775,270" fill="#7d3688"/>
<path d="M783,258 794,258 787,270" fill="#7a3585"/>
<path d="M794,258 800,267 787,270" fill="#5f2967"/>
<path d="M794,258 803,260 800,267" fill="#502257"/>
<path d="M803,260 810,270 800,267" fill="#5e2866"/>
<path d="M803,260 816,258 810,270" fill="#612a6a"/>
<path d="M816,258 819,268 810,270" fill="#763381"/>
<path d="M816,258 825,259 819,268" fill="#71317b"/>
<path d="M825,259 832,267 819,268" fill="#7b3586"/>
<path d="M825,259 837,259 832,267" fill="#793484"/>
<path d="M535,267 547,267 538,277" fill="#7a3585"/>
<path d="M547,267 549,280 538,277" fill="#7b3586"/>
<path d="M547,267 557,269 549,280" fill="#793484"/>
<path d="M557,269 563,280 549,280" fill="#783482"/>
<path d="M557,269 568,268 563,280" fill="#773382"/>
<path d="M568,268 571,279 563,280" fill="#773382"/>
<path d="M568,268 578,269 571,279" fill="#7a3585"/>
<path d="M578,269 582,278 571,279" fill="#783483"/>
<path d="M578,269 589,269 582,278" fill="#7a3585"/>
<path d="M589,269 595,278 582,278" fill="#75327f"/>
<path d="M589,269 600,268 595,278" fill="#783483"/>
<path d="M600,268 607,278 595,278" fill="#7d3688"/>
<path d="M600,268 609,269 607,278" fill="#773382"/>
<path d="M609,269 617,280 607,278" fill="#7a3585"/>
<path d="M609,269 622,267 617,280" fill="#793484"/>
<path d="M622,267 626,280 617,280" fill="#773482"/>
<path d="M622,267 634,270 626,280" fill="#7e378a"/>
<path d="M634,270 639,278 626,280" fill="#783482"/>
<path d="M634,270 644,267 639,278" fill="#7c3687"/>
<path d="M644,267 651,277 639,278" fill="#763381"/>
<path d="M644,267 655,267 651,277" fill="#753380"/>
<path d="M655,267 663,278 651,277" fill="#7d3688"/>
<path d="M655,267 665,268 663,278" fill="#783483"/>
<path d="M665,268 671,279 663,278" fill="#75327f"/>
<path d="M665,268 676,268 671,279" fill="#763381"/>
<path d="M676,268 683,277 671,279" fill="#763380"/>
<path d="M676,268 688,267 683,277" fill="#71317b"/>
<path d="M688,267 695,276 683,277" fill="#682d72"/>
<path d="M688,267 700,267 695,276" fill="#692d73"/>
<path d="M700,267 706,277 695,276" fill="#783483"/>
<path d="M700,267 711,270 706,277" fill="#7b3586"/>
<path d="M711,270 716,280 706,277" fill="#763381"/>
<path d="M711,270 721,267 716,280" fill="#783483"/>
<path d="M721,267 727,279 716,280" fill="#783483"/>
<path d="M721,267 732,268 727,279" fill="#7b3586"/>
<path d="M732,268 737,276 727,279" fill="#7b3586"/>
<path d="M732,268 745,267 737,276" fill="#7d3688"/>
<path d="M745,267 747,277 737,276" fill="#7d3688"/>
<path d="M745,267 756,271 747,277" fill="#7a3585"/>
<path d="M756,271 760,278 747,277" fill="#7c3687"/>
<path d="M756,271 766,270 760,278" fill="#7c3687"/>
<path d="M766,270 771,280 760,278" fill="#7d3688"/>
<path d="M766,270 775,270 771,280" fill="#7c3688"/>
<path d="M775,270 780,277 771,280" fill="#753380"/>
<path d="M775,270 787,270 780,277" fill="#6c2f76"/>
<path d="M787,270 793,276 780,277" fill="#5a2763"/>
<path d="M787,270 800,267 793,276" fill="#54245c"/>
<path d="M800,267 802,278 793,276" fill="#70307a"/>
<path d="M800,267 810,270 802,278" fill="#6d2f77"/>
<path d="M810,270 813,278 802,278" fill="#7c3587"/>
<path d="M810,270 819,268 813,278" fill="#7a3585"/>
<path d="M819,268 825,278 813,278" fill="#793484"/>
<path d="M819,268 832,267 825,278" fill="#7e3689"/>
<path d="M832,267 837,277 825,278" fill="#7a3585"/>
<path d="M538,277 549,280 547,289" fill="#793484"/>
<path d="M549,280 556,287 547,289" fill="#7c3688"/>
<path d="M549,280 563,280 556,287" fill="#7d3688"/>
<path d="M563,280 565,288 556,287" fill="#7b3586"/>
<path d="M563,280 571,279 565,288" fill="#783483"/>
<path d="M571,279 579,287 565,288" fill="#793484"/>
<path d="M571,279 582,278 579,287" fill="#793484"/>
<path d="M582,278 590,287 579,287" fill="#7c3587"/>
<path d="M582,278 595,278 590,287" fill="#773482"/>
<path d="M595,278 602,289 590,287" fill="#783483"/>
<path d="M595,278 607,278 602,289" fill="#7a3585"/>
<path d="M607,278 610,289 602,289" fill="#783483"/>
<path d="M607,278 617,280 610,289" fill="#783483"/>
<path d="M617,280 620,288 610,289" fill="#7c3688"/>
<path d="M617,280 626,280 620,288" fill="#7d3688"/>
<path d="M626,280 633,287 620,288" fill="#793484"/>
<path d="M626,280 639,278 633,287" fill="#793484"/>
<path d="M639,278 643,289 633,287" fill="#763381"/>
<path d="M639,278 651,277 643,289" fill="#783482"/>
<path d="M651,277 653,288 643,289" fill="#763381"/>
<path d="M651,277 663,278 653,288" fill="#7a3585"/>
<path d="M663,278 668,286 653,288" fill="#7a3585"/>
<path d="M663,278 671,279 668,286" fill="#753380"/>
<path d="M671,279 676,288 668,286" fill="#7e3689"/>
<path d="M671,279 683,277 676,288" fill="#773482"/>
<path d="M683,277 688,288 676,288" fill="#7c3687"/>
<path d="M683,277 695,276 688,288" fill="#773382"/>
<path d="M695,276 701,286 688,288" fill="#7c3687"/>
<path d="M695,276 706,277 701,286" fill="#74327f"/>
<path d="M706,277 710,287 701,286" fill="#793484"/>
<path d="M706,277 716,280 710,287" fill="#7e3689"/>
<path d="M716,280 719,289 710,287" fill="#763380"/>
<path d="M716,280 727,279 719,289" fill="#763380"/>
<path d="M727,279 733,289 719,289" fill="#7b3586"/>
<path d="M727,279 737,276 733,289" fill="#7a3585"/>
<path d="M737,276 741,289 733,289" fill="#7e378a"/>
<path d="M737,276 747,277 741,289" fill="#7c3688"/>
<path d="M747,277 755,288 741,289" fill="#7b3586"/>
<path d="M747,277 760,278 755,288" fill="#7f378a"/>
<path d="M760,278 766,287 755,288" fill="#7b3586"/>
<path d="M760,278 771,280 766,287" fill="#7a3586"/>
<path d="M771,280 775,286 766,287" fill="#7c3688"/>
<path d="M771,280 780,277 775,286" fill="#6e2f78"/>
<path d="M780,277 786,286 775,286" fill="#692d72"/>
<path d="M780,277 793,276 786,286" fill="#662c70"/>
<path d="M793,276 798,289 786,286" fill="#783483"/>
<path d="M793,276 802,278 798,289" fill="#7f378b"/>
<path d="M802,278 810,289 798,289" fill="#74327e"/>
<path d="M802,278 813,278 810,289" fill="#783483"/>
<path d="M813,278 821,287 810,289" fill="#75327f"/>
<path d="M813,278 825,278 821,287" fill="#783483"/>
<path d="M825,278 832,287 821,287" fill="#793483"/>
<path d="M825,278 837,277 832,287" fill="#7a3585"/>
<path d="M547,289 556,287 552,297" fill="#7a3585"/>
<path d="M556,287 563,297 552,297" fill="#7d3689"/>
<path d="M556,287 565,288 563,297" fill="#7e3689"/>
<path d="M565,288 572,299 563,297" fill="#793484"/>
<path d="M565,288 579,287 572,299" fill="#793484"/>
<path d="M579,287 584,298 572,299" fill="#7b3586"/>
<path d="M579,287 590,287 584,298" fill="#7e378a"/>
<path d="M590,287 595,299 584,298" fill="#783483"/>
<path d="M590,287 602,289 595,299" fill="#7a3585"/>
<path d="M602,289 606,299 595,299" fill="#7d3688"/>
<path d="M602,289 610,289 606,299" fill="#763381"/>
<path d="M610,289 618,299 606,299" fill="#783483"/>
<path d="M610,289 620,288 618,299" fill="#7e378a"/>
<path d="M620,288 628,298 618,299" fill="#7d3688"/>
<path d="M620,288 633,287 628,298" fill="#7a3585"/>
<path d="M633,287 639,296 628,298" fill="#763380"/>
<path d="M633,287 643,289 639,296" fill="#7d3689"/>
<path d="M643,289 649,298 639,296" fill="#7b3587"/>
<path d="M643,289 653,288 649,298" fill="#7d3688"/>
<path d="M653,288 659,299 649,298" fill="#7e378a"/>
<path d="M653,288 668,286 659,299" fill="#7d3689"/>
<path d="M668,286 670,295 659,299" fill="#793484"/>
<path d="M668,286 676,288 670,295" fill="#763381"/>
<path d="M676,288 681,299 670,295" fill="#773482"/>
<path d="M676,288 688,288 681,299" fill="#7a3585"/>
<path d="M688,288 693,296 681,299" fill="#7b3586"/>
<path d="M688,288 701,286 693,296" fill="#793484"/>
<path d="M701,286 703,295 693,296" fill="#783482"/>
<path d="M701,286 710,287 703,295" fill="#7d3688"/>
<path d="M710,287 717,298 703,295" fill="#7a3585"/>
<path d="M710,287 719,289 717,298" fill="#793484"/>
<path d="M719,289 728,298 717,298" fill="#7a3585"/>
<path d="M719,289 733,289 728,298" fill="#7c3587"/>
<path d="M733,289 736,298 728,298" fill="#71317c"/>
<path d="M733,289 741,289 736,298" fill="#7a3585"/>
<path d="M741,289 748,299 736,298" fill="#783483"/>
<path d="M741,289 755,288 748,299" fill="#793484"/>
<path d="M755,288 761,299 748,299" fill="#773482"/>
<path d="M755,288 766,287 761,299" fill="#773382"/>
<path d="M766,287 769,299 761,299" fill="#71317b"/>
<path d="M766,287 775,286 769,299" fill="#7d3688"/>
<path d="M775,286 783,299 769,299" fill="#6c2f76"/>
<path d="M775,286 786,286 783,299" fill="#753380"/>
<path d="M786,286 791,296 783,299" fill="#632b6c"/>
<path d="M786,286 798,289 791,296" fill="#6d2f77"/>
<path d="M798,289 802,295 791,296" fill="#632b6b"/>
<path d="M798,289 810,289 802,295" fill="#602a69"/>
<path d="M810,289 816,299 802,295" fill="#71317b"/>
<path d="M810,289 821,287 816,299" fill="#783483"/>
<path d="M552,297 563,297 556,306" fill="#7e378a"/>
<path d="M563,297 569,307 556,306" fill="#7a3585"/>
<path d="M563,297 572,299 569,307" fill="#793484"/>
<path d="M572,299 580,307 569,307" fill="#763380"/>
<path d="M572,299 584,298 580,307" fill="#763381"/>
<path d="M584,298 587,306 580,307" fill="#7c3687"/>
<path d="M584,298 595,299 587,306" fill="#763380"/>
<path d="M595,299 600,308 587,306" fill="#763380"/>
<path d="M595,299 606,299 600,308" fill="#763381"/>
<path d="M606,299 611,308 600,308" fill="#7a3585"/>
<path d="M606,299 618,299 611,308" fill="#7d3688"/>
<path d="M618,299 622,306 611,308" fill="#7b3586"/>
<path d="M618,299 628,298 622,306" fill="#7c3688"/>
<path d="M628,298 635,305 622,306" fill="#753380"/>
<path d="M628,298 639,296 635,305" fill="#75327f"/>
<path d="M639,296 646,306 635,305" fill="#7c3687"/>
<path d="M639,296 649,298 646,306" fill="#783483"/>
<path d="M649,298 653,306 646,306" fill="#7c3587"/>
<path d="M649,298 659,299 653,306" fill="#783483"/>
<path d="M659,299 667,309 653,306" fill="#763381"/>
<path d="M659,299 670,295 667,309" fill="#773482"/>
<path d="M670,295 675,307 667,309" fill="#763380"/>
<path d="M670,295 681,299 675,307" fill="#7d3689"/>
<path d="M681,299 688,308 675,307" fill="#7a3585"/>
<path d="M681,299 693,296 688,308" fill="#783483"/>
<path d="M693,296 698,307 688,308" fill="#73327d"/>
<path d="M693,296 703,295 698,307" fill="#6c2f76"/>
<path d="M703,295 710,308 698,307" fill="#5e2967"/>
<path d="M703,295 717,298 710,308" fill="#6a2e74"/>
<path d="M717,298 720,309 710,308" fill="#642b6d"/>
<path d="M717,298 728,298 720,309" fill="#692d72"/>
<path d="M728,298 731,306 720,309" fill="#622a6b"/>
<path d="M728,298 736,298 731,306" fill="#672d71"/>
<path d="M736,298 744,307 731,306" fill="#602a69"/>
<path d="M736,298 748,299 744,307" fill="#612a69"/>
<path d="M748,299 761,299 753,307" fill="#682d72"/>
<path d="M761,299 764,308 753,307" fill="#672c70"/>
<path d="M761,299 769,299 764,308" fill="#602969"/>
<path d="M769,299 777,308 764,308" fill="#6a2e74"/>
<path d="M769,299 783,299 777,308" fill="#672c70"/>
<path d="M783,299 788,306 777,308" fill="#6b2e75"/>
<path d="M783,299 791,296 788,306" fill="#672d71"/>
<path d="M791,296 798,306 788,306" fill="#74327e"/>
<path d="M791,296 802,295 798,306" fill="#692d73"/>
<path d="M556,306 569,307 562,317" fill="#7e3689"/>
<path d="M569,307 571,316 562,317" fill="#773382"/>
<path d="M569,307 580,307 571,316" fill="#783483"/>
<path d="M580,307 585,317 571,316" fill="#7c3587"/>
<path d="M580,307 587,306 585,317" fill="#773382"/>
<path d="M587,306 593,316 585,317" fill="#783482"/>
<path d="M587,306 600,308 593,316" fill="#7d3688"/>
<path d="M600,308 607,315 593,316" fill="#793484"/>
<path d="M600,308 611,308 607,315" fill="#7c3688"/>
<path d="M611,308 616,316 607,315" fill="#773382"/>
<path d="M611,308 622,306 616,316" fill="#763381"/>
<path d="M622,306 629,318 616,316" fill="#783483"/>
<path d="M622,306 635,305 629,318" fill="#763381"/>
<path d="M675,307 688,308 685,317" fill="#7e3689"/>
<path d="M688,308 692,318 685,317" fill="#773382"/>
<path d="M688,308 698,307 692,318" fill="#773382"/>
<path d="M698,307 703,316 692,318" fill="#72317d"/>
<path d="M698,307 710,308 703,316" fill="#70307a"/>
<path d="M710,308 718,318 703,316" fill="#75327f"/>
<path d="M710,308 720,309 718,318" fill="#71317b"/>
<path d="M720,309 728,316 718,318" fill="#72317c"/>
<path d="M720,309 731,306 728,316" fill="#6b2e75"/>
<path d="M731,306 737,317 728,316" fill="#783482"/>
<path d="M731,306 744,307 737,317" fill="#6d2f77"/>
<path d="M571,316 585,317 579,327" fill="#773382"/>
<path d="M585,317 590,325 579,327" fill="#763381"/>
<path d="M585,317 593,316 590,325" fill="#773482"/>
<path d="M593,316 600,326 590,325" fill="#773382"/>
<path d="M593,316 607,315 600,326" fill="#753380"/>
<path d="M607,315 612,326 600,326" fill="#7b3586"/>
<path d="M607,315 616,316 612,326" fill="#783483"/>
<path d="M616,316 623,328 612,326" fill="#763381"/>
<path d="M616,316 629,318 623,328" fill="#7c3587"/>
<path d="M692,318 703,316 698,326" fill="#753380"/>
<path d="M703,316 710,327 698,326" fill="#773382"/>
<path d="M703,316 718,318 710,327" fill="#7d3688"/>
</g></g>
<path d="M843,128 C836,138 829,149 823.5,157 C817,165 810,173 803,179.5 C795,187 787,194 778.4,200 C770,206 762,210 755.9,214.3 C749,219 745,223 741.5,228.7 C738,234 736,241 733.3,247 C730,254 726,261 721,267.6 C715,275 708,280 700.5,284 C694,288 687,291 680,293.5 C676,294.5 672,295 669,295.6" fill="none" stroke="#f04a9e" stroke-width="8.3" stroke-linecap="butt"/>
<path d="M672,291.5 C660,293 650,295 640,298 C630,302 624,306 619,314 C616,320 614,326 613.5,333 L616.5,333.5 C618,327 621,321 624,317 C630,310 640,306 651,303 C660,301 668,300 672,300 Z" fill="#f04a9e" stroke="none" stroke-width="1" />
<polygon points="604.3,174.8 586.6,194 576.2,208.8 568.8,229.6 554,242.9 539.2,256.2 548.8,278.4 560,263.6 574.7,234 583.6,211.8 595.4,189.6" fill="#f04a9e" />
<polygon points="538,257 548.5,280 551,310 555,345 547,345 541,310" fill="#4a1838" />
<path d="M541,286 C548,330 552,370 556,400 C566,440 580,480 590,510 L612,582" fill="none" stroke="#5a1a40" stroke-width="2.5"/>
<path d="M539.7,455 C542,475 546,500 551,525 L556.5,560" fill="none" stroke="#d070d0" stroke-width="1" stroke-dasharray="3,2"/>
<path d="M596,330 C598,380 604,420 607,455 L614,573" fill="none" stroke="#7a2050" stroke-width="1" stroke-dasharray="3,3"/>
<line x1="367.0" y1="373.0" x2="365.1" y2="375.8" stroke="#56666d" stroke-width="8"/>
<line x1="365.1" y1="375.8" x2="336.0" y2="420.0" stroke="#5d8a2e" stroke-width="8"/>
<line x1="365.1" y1="371.8" x2="334.1" y2="418.8" stroke="#000" stroke-opacity="0.18" stroke-width="2.8"/>
<line x1="368.1" y1="373.7" x2="337.1" y2="420.7" stroke="#fff" stroke-opacity="0.16" stroke-width="2.0"/>
<ellipse cx="367.0" cy="373.0" rx="4.0" ry="3.0" fill="#8295a0"/>
<line x1="441.0" y1="329.0" x2="438.1" y2="332.8" stroke="#56666d" stroke-width="8"/>
<line x1="438.1" y1="332.8" x2="405.0" y2="377.0" stroke="#5d8a2e" stroke-width="8"/>
<line x1="421.2" y1="355.4" x2="418.7" y2="358.8" stroke="#6e2c80" stroke-width="8"/>
<line x1="439.2" y1="327.7" x2="403.2" y2="375.7" stroke="#000" stroke-opacity="0.18" stroke-width="2.8"/>
<line x1="442.1" y1="329.8" x2="406.1" y2="377.8" stroke="#fff" stroke-opacity="0.16" stroke-width="2.0"/>
<ellipse cx="441.0" cy="329.0" rx="4.0" ry="3.0" fill="#8295a0"/>
<line x1="473.0" y1="368.0" x2="470.2" y2="373.6" stroke="#56666d" stroke-width="7"/>
<line x1="470.2" y1="373.6" x2="418.0" y2="480.0" stroke="#5d8a2e" stroke-width="7"/>
<line x1="448.2" y1="418.4" x2="446.6" y2="421.8" stroke="#6e2c80" stroke-width="7"/>
<line x1="423.5" y1="468.8" x2="421.9" y2="472.2" stroke="#6e2c80" stroke-width="7"/>
<line x1="471.2" y1="367.1" x2="416.2" y2="479.1" stroke="#000" stroke-opacity="0.18" stroke-width="2.4"/>
<line x1="474.1" y1="368.5" x2="419.1" y2="480.5" stroke="#fff" stroke-opacity="0.16" stroke-width="1.8"/>
<ellipse cx="473.0" cy="368.0" rx="3.5" ry="2.6" fill="#8295a0"/>
<line x1="490.0" y1="310.0" x2="487.3" y2="313.8" stroke="#56666d" stroke-width="8"/>
<line x1="487.3" y1="313.8" x2="456.0" y2="357.0" stroke="#5d8a2e" stroke-width="8"/>
<line x1="478.1" y1="326.4" x2="475.7" y2="329.7" stroke="#6e2c80" stroke-width="8"/>
<line x1="461.1" y1="349.9" x2="458.7" y2="353.2" stroke="#6e2c80" stroke-width="8"/>
<line x1="488.2" y1="308.7" x2="454.2" y2="355.7" stroke="#000" stroke-opacity="0.18" stroke-width="2.8"/>
<line x1="491.1" y1="310.8" x2="457.1" y2="357.8" stroke="#fff" stroke-opacity="0.16" stroke-width="2.0"/>
<ellipse cx="490.0" cy="310.0" rx="4.0" ry="3.0" fill="#8295a0"/>
<line x1="464.0" y1="297.0" x2="466.0" y2="305.0" stroke="#56666d" stroke-width="8"/>
<line x1="461.8" y1="297.5" x2="463.8" y2="305.5" stroke="#000" stroke-opacity="0.18" stroke-width="2.8"/>
<line x1="465.3" y1="296.7" x2="467.3" y2="304.7" stroke="#fff" stroke-opacity="0.16" stroke-width="2.0"/>
<ellipse cx="464.0" cy="297.0" rx="4.0" ry="3.0" fill="#8295a0"/>
<line x1="518.0" y1="304.0" x2="511.4" y2="313.6" stroke="#56666d" stroke-width="8"/>
<line x1="511.4" y1="313.6" x2="496.0" y2="336.0" stroke="#5d8a2e" stroke-width="8"/>
<line x1="516.2" y1="302.7" x2="494.2" y2="334.7" stroke="#000" stroke-opacity="0.18" stroke-width="2.8"/>
<line x1="519.1" y1="304.8" x2="497.1" y2="336.8" stroke="#fff" stroke-opacity="0.16" stroke-width="2.0"/>
<ellipse cx="518.0" cy="304.0" rx="4.0" ry="3.0" fill="#8295a0"/>
<path d="M410.5,340 C418,360 427,385 431,408 C434,428 437,450 441,468 C446,490 451,505 455,519" fill="none" stroke="#b0e85a" stroke-width="6.5"/>
<path d="M410.5,340 C418,360 427,385 431,408 C434,428 437,450 441,468 C446,490 451,505 455,519" fill="none" stroke="#e8ffb0" stroke-opacity="0.5" stroke-width="1.5" transform="translate(-0.8,0)"/>
<line x1="448.5" y1="489" x2="451" y2="503" stroke="#40c0a8" stroke-width="6"/>
<line x1="430" y1="410" x2="431" y2="414" stroke="#6b2b7c" stroke-width="6"/>
<line x1="477.5" y1="389.6" x2="477.2" y2="391.8" stroke="#56666d" stroke-width="8"/>
<line x1="477.2" y1="391.8" x2="467.2" y2="464.5" stroke="#8cc840" stroke-width="8"/>
<line x1="475.3" y1="389.3" x2="465.0" y2="464.2" stroke="#000" stroke-opacity="0.18" stroke-width="2.8"/>
<line x1="478.8" y1="389.8" x2="468.5" y2="464.7" stroke="#fff" stroke-opacity="0.16" stroke-width="2.0"/>
<ellipse cx="477.5" cy="389.6" rx="4.0" ry="3.0" fill="#8295a0"/>
<line x1="525.0" y1="284.0" x2="524.4" y2="287.4" stroke="#56666d" stroke-width="8"/>
<line x1="524.4" y1="287.4" x2="505.0" y2="396.0" stroke="#6e2c80" stroke-width="8"/>
<line x1="522.8" y1="283.6" x2="502.8" y2="395.6" stroke="#000" stroke-opacity="0.18" stroke-width="2.8"/>
<line x1="526.3" y1="284.2" x2="506.3" y2="396.2" stroke="#fff" stroke-opacity="0.16" stroke-width="2.0"/>
<ellipse cx="525.0" cy="284.0" rx="4.0" ry="3.0" fill="#8295a0"/>
<line x1="541.0" y1="287.0" x2="539.7" y2="293.4" stroke="#56666d" stroke-width="8"/>
<line x1="539.7" y1="293.4" x2="517.1" y2="409.0" stroke="#6e2c80" stroke-width="8"/>
<line x1="517.1" y1="409.0" x2="510.3" y2="443.2" stroke="#2a9a7c" stroke-width="8"/>
<line x1="510.3" y1="443.2" x2="506.1" y2="464.6" stroke="#6e2c80" stroke-width="8"/>
<line x1="506.1" y1="464.6" x2="499.0" y2="501.0" stroke="#2a9a7c" stroke-width="8"/>
<line x1="538.8" y1="286.6" x2="496.8" y2="500.6" stroke="#000" stroke-opacity="0.18" stroke-width="2.8"/>
<line x1="542.3" y1="287.3" x2="500.3" y2="501.3" stroke="#fff" stroke-opacity="0.16" stroke-width="2.0"/>
<ellipse cx="541.0" cy="287.0" rx="4.0" ry="3.0" fill="#8295a0"/>
<line x1="558.0" y1="295.0" x2="557.0" y2="302.1" stroke="#56666d" stroke-width="8"/>
<line x1="557.0" y1="302.1" x2="532.6" y2="472.5" stroke="#6e2c80" stroke-width="8"/>
<line x1="555.8" y1="294.7" x2="530.4" y2="472.2" stroke="#000" stroke-opacity="0.18" stroke-width="2.8"/>
<line x1="559.3" y1="295.2" x2="533.9" y2="472.7" stroke="#fff" stroke-opacity="0.16" stroke-width="2.0"/>
<ellipse cx="558.0" cy="295.0" rx="4.0" ry="3.0" fill="#8295a0"/>
<line x1="522.0" y1="321.0" x2="521.3" y2="326.4" stroke="#56666d" stroke-width="5"/>
<line x1="521.3" y1="326.4" x2="520.4" y2="333.1" stroke="#a8e455" stroke-width="5"/>
<line x1="520.4" y1="333.1" x2="513.9" y2="381.3" stroke="#6e2c80" stroke-width="5"/>
<line x1="513.9" y1="381.3" x2="504.0" y2="455.0" stroke="#2a9a7c" stroke-width="5"/>
<line x1="520.6" y1="320.8" x2="502.6" y2="454.8" stroke="#000" stroke-opacity="0.18" stroke-width="1.8"/>
<line x1="522.8" y1="321.1" x2="504.8" y2="455.1" stroke="#fff" stroke-opacity="0.16" stroke-width="1.2"/>
<ellipse cx="522.0" cy="321.0" rx="2.5" ry="1.9" fill="#8295a0"/>
<line x1="490.0" y1="323.0" x2="489.1" y2="334.9" stroke="#56666d" stroke-width="8"/>
<line x1="489.1" y1="334.9" x2="488.6" y2="341.2" stroke="#6e2c80" stroke-width="8"/>
<line x1="488.6" y1="341.2" x2="486.7" y2="366.4" stroke="#a8e455" stroke-width="8"/>
<line x1="486.7" y1="366.4" x2="484.6" y2="394.1" stroke="#6e2c80" stroke-width="8"/>
<line x1="484.6" y1="394.1" x2="484.0" y2="402.0" stroke="#a8e455" stroke-width="8"/>
<line x1="487.8" y1="322.8" x2="481.8" y2="401.8" stroke="#000" stroke-opacity="0.18" stroke-width="2.8"/>
<line x1="491.3" y1="323.1" x2="485.3" y2="402.1" stroke="#fff" stroke-opacity="0.16" stroke-width="2.0"/>
<ellipse cx="490.0" cy="323.0" rx="4.0" ry="3.0" fill="#8295a0"/>
<line x1="515.0" y1="354.0" x2="514.5" y2="362.2" stroke="#56666d" stroke-width="8"/>
<line x1="514.5" y1="362.2" x2="510.0" y2="436.0" stroke="#a8e455" stroke-width="8"/>
<line x1="513.6" y1="377.0" x2="513.2" y2="383.5" stroke="#6e2c80" stroke-width="8"/>
<line x1="512.8" y1="353.9" x2="507.8" y2="435.9" stroke="#000" stroke-opacity="0.18" stroke-width="2.8"/>
<line x1="516.3" y1="354.1" x2="511.3" y2="436.1" stroke="#fff" stroke-opacity="0.16" stroke-width="2.0"/>
<ellipse cx="515.0" cy="354.0" rx="4.0" ry="3.0" fill="#8295a0"/>
<line x1="563.0" y1="313.0" x2="561.4" y2="320.6" stroke="#56666d" stroke-width="7"/>
<line x1="561.4" y1="320.6" x2="552.0" y2="364.0" stroke="#6e2c80" stroke-width="7"/>
<line x1="561.1" y1="312.6" x2="550.1" y2="363.6" stroke="#000" stroke-opacity="0.18" stroke-width="2.4"/>
<line x1="564.1" y1="313.2" x2="553.1" y2="364.2" stroke="#fff" stroke-opacity="0.16" stroke-width="1.8"/>
<ellipse cx="563.0" cy="313.0" rx="3.5" ry="2.6" fill="#8295a0"/>
<line x1="552.5" y1="364.0" x2="551.7" y2="368.4" stroke="#56666d" stroke-width="8"/>
<line x1="551.7" y1="368.4" x2="532.0" y2="474.0" stroke="#6e2c80" stroke-width="8"/>
<line x1="550.3" y1="363.6" x2="529.8" y2="473.6" stroke="#000" stroke-opacity="0.18" stroke-width="2.8"/>
<line x1="553.8" y1="364.2" x2="533.3" y2="474.2" stroke="#fff" stroke-opacity="0.16" stroke-width="2.0"/>
<ellipse cx="552.5" cy="364.0" rx="4.0" ry="3.0" fill="#8295a0"/>
<line x1="586.5" y1="312.0" x2="584.3" y2="325.7" stroke="#56666d" stroke-width="8"/>
<line x1="584.3" y1="325.7" x2="568.5" y2="426.0" stroke="#6e2c80" stroke-width="8"/>
<line x1="573.5" y1="394.1" x2="572.3" y2="402.1" stroke="#c8a020" stroke-width="8"/>
<line x1="584.3" y1="311.7" x2="566.3" y2="425.7" stroke="#000" stroke-opacity="0.18" stroke-width="2.8"/>
<line x1="587.8" y1="312.2" x2="569.8" y2="426.2" stroke="#fff" stroke-opacity="0.16" stroke-width="2.0"/>
<ellipse cx="586.5" cy="312.0" rx="4.0" ry="3.0" fill="#8295a0"/>
<line x1="570.0" y1="300.0" x2="562.0" y2="460.0" stroke="#6e2c80" stroke-width="6"/>
<line x1="568.3" y1="299.9" x2="560.3" y2="459.9" stroke="#000" stroke-opacity="0.18" stroke-width="2.1"/>
<line x1="571.0" y1="300.1" x2="563.0" y2="460.1" stroke="#fff" stroke-opacity="0.16" stroke-width="1.5"/>
<line x1="605.0" y1="323.0" x2="602.7" y2="333.2" stroke="#56666d" stroke-width="8"/>
<line x1="602.7" y1="333.2" x2="595.8" y2="364.0" stroke="#6e2c80" stroke-width="8"/>
<line x1="602.8" y1="322.5" x2="593.6" y2="363.5" stroke="#000" stroke-opacity="0.18" stroke-width="2.8"/>
<line x1="606.3" y1="323.3" x2="597.1" y2="364.3" stroke="#fff" stroke-opacity="0.16" stroke-width="2.0"/>
<ellipse cx="605.0" cy="323.0" rx="4.0" ry="3.0" fill="#8295a0"/>
<line x1="584.4" y1="351.7" x2="583.3" y2="357.1" stroke="#56666d" stroke-width="8"/>
<line x1="583.3" y1="357.1" x2="561.7" y2="460.0" stroke="#6e2c80" stroke-width="8"/>
<line x1="582.2" y1="351.2" x2="559.5" y2="459.5" stroke="#000" stroke-opacity="0.18" stroke-width="2.8"/>
<line x1="585.7" y1="352.0" x2="563.0" y2="460.3" stroke="#fff" stroke-opacity="0.16" stroke-width="2.0"/>
<ellipse cx="584.4" cy="351.7" rx="4.0" ry="3.0" fill="#8295a0"/>
<line x1="630.0" y1="353.0" x2="629.0" y2="361.0" stroke="#56666d" stroke-width="8"/>
<line x1="627.8" y1="352.7" x2="626.8" y2="360.7" stroke="#000" stroke-opacity="0.18" stroke-width="2.8"/>
<line x1="631.3" y1="353.2" x2="630.3" y2="361.2" stroke="#fff" stroke-opacity="0.16" stroke-width="2.0"/>
<ellipse cx="630.0" cy="353.0" rx="4.0" ry="3.0" fill="#8295a0"/>
<line x1="618.6" y1="334.0" x2="618.0" y2="340.0" stroke="#56666d" stroke-width="7"/>
<line x1="616.6" y1="333.8" x2="616.0" y2="339.8" stroke="#000" stroke-opacity="0.18" stroke-width="2.4"/>
<line x1="619.8" y1="334.1" x2="619.2" y2="340.1" stroke="#fff" stroke-opacity="0.16" stroke-width="1.8"/>
<ellipse cx="618.6" cy="334.0" rx="3.5" ry="2.6" fill="#8295a0"/>
<line x1="679.8" y1="120.7" x2="680.3" y2="131.3" stroke="#56666d" stroke-width="9"/>
<line x1="677.3" y1="120.8" x2="677.8" y2="131.4" stroke="#000" stroke-opacity="0.18" stroke-width="3.1"/>
<line x1="681.3" y1="120.6" x2="681.8" y2="131.2" stroke="#fff" stroke-opacity="0.16" stroke-width="2.2"/>
<ellipse cx="679.8" cy="120.7" rx="4.5" ry="3.3" fill="#8295a0"/>
<line x1="722.0" y1="112.0" x2="722.5" y2="120.7" stroke="#56666d" stroke-width="8"/>
<line x1="719.8" y1="112.1" x2="720.3" y2="120.8" stroke="#000" stroke-opacity="0.18" stroke-width="2.8"/>
<line x1="723.3" y1="111.9" x2="723.8" y2="120.6" stroke="#fff" stroke-opacity="0.16" stroke-width="2.0"/>
<ellipse cx="722.0" cy="112.0" rx="4.0" ry="3.0" fill="#8295a0"/>
<line x1="733.0" y1="138.0" x2="733.5" y2="149.0" stroke="#56666d" stroke-width="9"/>
<line x1="730.5" y1="138.1" x2="731.0" y2="149.1" stroke="#000" stroke-opacity="0.18" stroke-width="3.1"/>
<line x1="734.5" y1="137.9" x2="735.0" y2="148.9" stroke="#fff" stroke-opacity="0.16" stroke-width="2.2"/>
<ellipse cx="733.0" cy="138.0" rx="4.5" ry="3.3" fill="#8295a0"/>
<line x1="766.0" y1="95.0" x2="766.5" y2="111.0" stroke="#56666d" stroke-width="10"/>
<line x1="763.2" y1="95.1" x2="763.7" y2="111.1" stroke="#000" stroke-opacity="0.18" stroke-width="3.5"/>
<line x1="767.7" y1="94.9" x2="768.2" y2="110.9" stroke="#fff" stroke-opacity="0.16" stroke-width="2.5"/>
<ellipse cx="766.0" cy="95.0" rx="5.0" ry="3.7" fill="#8295a0"/>
<line x1="661.4" y1="163.0" x2="661.9" y2="171.0" stroke="#56666d" stroke-width="9"/>
<line x1="658.9" y1="163.2" x2="659.4" y2="171.2" stroke="#000" stroke-opacity="0.18" stroke-width="3.1"/>
<line x1="662.9" y1="162.9" x2="663.4" y2="170.9" stroke="#fff" stroke-opacity="0.16" stroke-width="2.2"/>
<ellipse cx="661.4" cy="163.0" rx="4.5" ry="3.3" fill="#8295a0"/>
<line x1="703.0" y1="160.0" x2="703.5" y2="169.0" stroke="#56666d" stroke-width="9"/>
<line x1="700.5" y1="160.1" x2="701.0" y2="169.1" stroke="#000" stroke-opacity="0.18" stroke-width="3.1"/>
<line x1="704.5" y1="159.9" x2="705.0" y2="168.9" stroke="#fff" stroke-opacity="0.16" stroke-width="2.2"/>
<ellipse cx="703.0" cy="160.0" rx="4.5" ry="3.3" fill="#8295a0"/>
<line x1="628.4" y1="188.5" x2="628.9" y2="198.0" stroke="#56666d" stroke-width="9"/>
<line x1="625.9" y1="188.6" x2="626.4" y2="198.1" stroke="#000" stroke-opacity="0.18" stroke-width="3.1"/>
<line x1="629.9" y1="188.4" x2="630.4" y2="197.9" stroke="#fff" stroke-opacity="0.16" stroke-width="2.2"/>
<ellipse cx="628.4" cy="188.5" rx="4.5" ry="3.3" fill="#8295a0"/>
<line x1="603.6" y1="225.0" x2="604.1" y2="234.0" stroke="#56666d" stroke-width="9"/>
<line x1="601.1" y1="225.1" x2="601.6" y2="234.1" stroke="#000" stroke-opacity="0.18" stroke-width="3.1"/>
<line x1="605.1" y1="224.9" x2="605.6" y2="233.9" stroke="#fff" stroke-opacity="0.16" stroke-width="2.2"/>
<ellipse cx="603.6" cy="225.0" rx="4.5" ry="3.3" fill="#8295a0"/>
<line x1="579.2" y1="237.0" x2="579.7" y2="246.0" stroke="#56666d" stroke-width="9"/>
<line x1="576.7" y1="237.1" x2="577.2" y2="246.1" stroke="#000" stroke-opacity="0.18" stroke-width="3.1"/>
<line x1="580.7" y1="236.9" x2="581.2" y2="245.9" stroke="#fff" stroke-opacity="0.16" stroke-width="2.2"/>
<ellipse cx="579.2" cy="237.0" rx="4.5" ry="3.3" fill="#8295a0"/>
<line x1="628.0" y1="248.5" x2="628.5" y2="266.8" stroke="#56666d" stroke-width="9"/>
<line x1="625.5" y1="248.6" x2="626.0" y2="266.9" stroke="#000" stroke-opacity="0.18" stroke-width="3.1"/>
<line x1="629.5" y1="248.5" x2="630.0" y2="266.8" stroke="#fff" stroke-opacity="0.16" stroke-width="2.2"/>
<ellipse cx="628.0" cy="248.5" rx="4.5" ry="3.3" fill="#8295a0"/>
<line x1="596.5" y1="273.0" x2="597.0" y2="288.0" stroke="#56666d" stroke-width="9"/>
<line x1="594.0" y1="273.1" x2="594.5" y2="288.1" stroke="#000" stroke-opacity="0.18" stroke-width="3.1"/>
<line x1="598.0" y1="272.9" x2="598.5" y2="287.9" stroke="#fff" stroke-opacity="0.16" stroke-width="2.2"/>
<ellipse cx="596.5" cy="273.0" rx="4.5" ry="3.3" fill="#8295a0"/>
<line x1="690.8" y1="228.0" x2="691.3" y2="235.0" stroke="#56666d" stroke-width="8"/>
<line x1="688.6" y1="228.2" x2="689.1" y2="235.2" stroke="#000" stroke-opacity="0.18" stroke-width="2.8"/>
<line x1="692.1" y1="227.9" x2="692.6" y2="234.9" stroke="#fff" stroke-opacity="0.16" stroke-width="2.0"/>
<ellipse cx="690.8" cy="228.0" rx="4.0" ry="3.0" fill="#8295a0"/>
<line x1="652.8" y1="306.0" x2="653.3" y2="313.0" stroke="#56666d" stroke-width="8"/>
<line x1="650.6" y1="306.2" x2="651.1" y2="313.2" stroke="#000" stroke-opacity="0.18" stroke-width="2.8"/>
<line x1="654.1" y1="305.9" x2="654.6" y2="312.9" stroke="#fff" stroke-opacity="0.16" stroke-width="2.0"/>
<ellipse cx="652.8" cy="306.0" rx="4.0" ry="3.0" fill="#8295a0"/>
<line x1="645.0" y1="243.0" x2="641.0" y2="254.0" stroke="#56666d" stroke-width="8"/>
<line x1="642.9" y1="242.2" x2="638.9" y2="253.2" stroke="#000" stroke-opacity="0.18" stroke-width="2.8"/>
<line x1="646.3" y1="243.5" x2="642.3" y2="254.5" stroke="#fff" stroke-opacity="0.16" stroke-width="2.0"/>
<ellipse cx="645.0" cy="243.0" rx="4.0" ry="3.0" fill="#8295a0"/>
<line x1="621.6" y1="148.0" x2="622.0" y2="157.5" stroke="#6a2a78" stroke-width="8"/>
<line x1="619.4" y1="148.1" x2="619.8" y2="157.6" stroke="#000" stroke-opacity="0.18" stroke-width="2.8"/>
<line x1="622.9" y1="147.9" x2="623.3" y2="157.4" stroke="#fff" stroke-opacity="0.16" stroke-width="2.0"/>
<ellipse cx="621.6" cy="148" rx="4" ry="2.5" fill="#7a3a88"/>
<line x1="762.5" y1="165.4" x2="768.5" y2="184.8" stroke="#8a9aa2" stroke-width="8"/>
<line x1="768.5" y1="184.8" x2="769.6" y2="188.2" stroke="#b050b8" stroke-width="8"/>
<line x1="760.4" y1="166.1" x2="767.5" y2="188.9" stroke="#000" stroke-opacity="0.18" stroke-width="2.8"/>
<line x1="763.8" y1="165.0" x2="770.9" y2="187.8" stroke="#fff" stroke-opacity="0.16" stroke-width="2.0"/>
<ellipse cx="762.5" cy="165.4" rx="4.0" ry="3.0" fill="#8295a0"/>
<line x1="725.0" y1="206.0" x2="725.2" y2="210.0" stroke="#56666d" stroke-width="9"/>
<line x1="725.2" y1="210.0" x2="725.5" y2="214.0" stroke="#6e2c80" stroke-width="9"/>
<line x1="722.5" y1="206.2" x2="723.0" y2="214.2" stroke="#000" stroke-opacity="0.18" stroke-width="3.1"/>
<line x1="726.5" y1="205.9" x2="727.0" y2="213.9" stroke="#fff" stroke-opacity="0.16" stroke-width="2.2"/>
<ellipse cx="725.0" cy="206.0" rx="4.5" ry="3.3" fill="#8295a0"/>
<line x1="729.7" y1="182.5" x2="730.6" y2="185.9" stroke="#56666d" stroke-width="10"/>
<line x1="730.6" y1="185.9" x2="735.4" y2="205.0" stroke="#6e2c80" stroke-width="10"/>
<line x1="727.0" y1="183.2" x2="732.7" y2="205.7" stroke="#000" stroke-opacity="0.18" stroke-width="3.5"/>
<line x1="731.3" y1="182.1" x2="737.0" y2="204.6" stroke="#fff" stroke-opacity="0.16" stroke-width="2.5"/>
<ellipse cx="729.7" cy="182.5" rx="5.0" ry="3.7" fill="#8295a0"/>
<line x1="667.0" y1="262.0" x2="678.5" y2="285.0" stroke="#8a9aa2" stroke-width="8"/>
<line x1="665.0" y1="263.0" x2="676.5" y2="286.0" stroke="#000" stroke-opacity="0.18" stroke-width="2.8"/>
<line x1="668.2" y1="261.4" x2="679.7" y2="284.4" stroke="#fff" stroke-opacity="0.16" stroke-width="2.0"/>
<ellipse cx="667.0" cy="262.0" rx="4.0" ry="3.0" fill="#8295a0"/>
<path d="M770,97 L774,112" stroke="#222" stroke-width="3" stroke-dasharray="1.5,1.5"/>
<path d="M411.5,102 L411.5,504" fill="none" stroke="#ffff00" stroke-width="1" stroke-dasharray="5,5"/>
<path d="M416.5,104.5 L679.5,208.5" fill="none" stroke="#ffff00" stroke-width="1" stroke-dasharray="5.4,5.35"/>
<path d="M679.5,208.5 L679.5,608" fill="none" stroke="#ffff00" stroke-width="1" stroke-dasharray="5,5"/>
<path d="M411.5,504.5 L679.5,608.5" fill="none" stroke="#ffff00" stroke-width="1.2" stroke-dasharray="5.4,5.35"/>
<g font-family="Liberation Sans">
<text x="11" y="636" font-size="12.4" fill="#111">North Slice +493598.27</text>
<text x="1108" y="587" font-size="12.3" fill="#222">Plunge +15</text>
<text x="1108" y="601" font-size="12.4" fill="#222">Azimuth 303</text>
<text x="1087.5" y="618.5" font-size="11" letter-spacing="0.6" fill="#222">0</text>
<text x="1121.5" y="618.5" font-size="11" letter-spacing="0.6" fill="#222">100</text>
<text x="1166.5" y="618.5" font-size="11" letter-spacing="0.6" fill="#222">200</text>
<text x="1201.5" y="618.5" font-size="11" letter-spacing="0.6" fill="#222">300</text>
<rect x="1086" y="625" width="46" height="4" fill="#000"/><rect x="1131.5" y="629" width="45.5" height="4" fill="#000"/><rect x="1177" y="625" width="45" height="4" fill="#000"/>
</g>
<defs><radialGradient id="gb" cx="0.56" cy="0.55" r="0.62"><stop offset="0" stop-color="#c8f4ff"/><stop offset="0.12" stop-color="#5ac8f0"/><stop offset="0.55" stop-color="#38a8d8"/><stop offset="0.85" stop-color="#1f6e98"/><stop offset="1" stop-color="#0c2c44"/></radialGradient><radialGradient id="gg" cx="0.56" cy="0.3" r="0.75"><stop offset="0" stop-color="#30c860"/><stop offset="0.55" stop-color="#1aa048"/><stop offset="0.85" stop-color="#0f7a30"/><stop offset="1" stop-color="#06301a"/></radialGradient><clipPath id="gc"><circle cx="1207.8" cy="583.8" r="19.8"/></clipPath></defs>
<g clip-path="url(#gc)"><rect x="1186" y="562" width="44" height="44" fill="url(#gb)"/><path d="M1186,586.5 Q1208,591.5 1230,586 L1230,606 L1186,606 Z" fill="url(#gg)"/><path d="M1189,586.8 Q1208,590.2 1227,586.4" fill="none" stroke="#e8fff0" stroke-opacity="0.6" stroke-width="0.8"/><circle cx="1207.8" cy="583.8" r="19.3" fill="none" stroke="#062030" stroke-opacity="0.55" stroke-width="1.6"/><path d="M1204,585 V593" stroke="#fff" stroke-opacity="0.35" stroke-width="0.8"/><text x="1187.5" y="593" font-family="Liberation Sans" font-weight="bold" font-size="19.5" fill="#151a1a" stroke="#151a1a" stroke-width="1.6" transform="translate(1187.5 593) scale(0.56 1) translate(-1187.5 -593)">S</text><text x="1213.8" y="595.3" font-family="Liberation Sans" font-weight="bold" font-size="20" fill="#151a1a" stroke="#151a1a" stroke-width="1.3" transform="translate(1213.8 595.3) scale(0.62 1) translate(-1213.8 -595.3)">E</text></g>
</svg>
</div>
<div class="abs" style="left:0;top:655px;width:864px;height:223px;background:#f7f7f7;border:1px solid #b4b4b4"></div>
<div class="abs" style="left:1px;top:656px;width:862px;height:28px;background:#b3e3f8"></div>
<div class="abs" style="left:1px;top:684px;width:862px;height:28px;background:#ffffff"></div>
<div class="abs" style="left:1px;top:712px;width:862px;height:28px;background:#f7f7f7"></div>
<div class="abs" style="left:1px;top:740px;width:862px;height:28px;background:#ffffff"></div>
<div class="abs" style="left:1px;top:768px;width:862px;height:28px;background:#f7f7f7"></div>
<div class="abs" style="left:1px;top:796px;width:862px;height:28px;background:#ffffff"></div>
<div class="abs" style="left:1px;top:824px;width:862px;height:28px;background:#f7f7f7"></div>
<svg class="abs" style="left:52px;top:661px" width="20" height="19" viewBox="0 0 20 19"><path d="M2,17 L8,9 L11,2 L19,2 L13,10 Z M8,9 L13,10" fill="none" stroke="#1e4b6e" stroke-width="1.2" stroke-linejoin="round"/></svg>
<div class="t" style="left:73px;top:664px;font-size:12px;color:#222;">Slicer</div>
<svg class="abs" style="left:341px;top:663px" width="14" height="14" viewBox="0 0 14 14"><path d="M1.5,1.5 L12.5,12.5 M12.5,1.5 L1.5,12.5" stroke="#1e4b6e" stroke-width="1.3"/></svg>
<div class="abs" style="left:428px;top:658px;width:24px;height:24px;border:1px solid #1ea0e6"></div>
<svg class="abs" style="left:379px;top:661px" width="18" height="19" viewBox="0 0 18 19"><g fill="none" stroke="#a8a8a8" stroke-width="0.9"><path d="M9,0.8 L17,5 L17,14 L9,18.2 L1,14 L1,5 Z M1,5 L9,9.5 L17,5 M9,9.5 L9,18.2 M9,0.8 V5 M1,14 L5,12 M17,14 L13,12"/></g><path d="M3.2,5.8 L12.5,1.7 L15.1,4.2 L15.1,12.5 L6.8,16.1 L3.2,13.5 Z" fill="#f0cc30" fill-opacity="0.82"/><path d="M1,5 L9,9.5 L17,5 M9,9.5 L9,18.2" fill="none" stroke="#a0a0a0" stroke-opacity="0.7" stroke-width="0.9"/></svg>
<svg class="abs" style="left:405px;top:661px" width="18" height="19" viewBox="0 0 18 19"><g fill="none" stroke="#a8a8a8" stroke-width="0.9"><path d="M9,0.8 L17,5 L17,14 L9,18.2 L1,14 L1,5 Z M1,5 L9,9.5 L17,5 M9,9.5 L9,18.2 M9,0.8 V5 M1,14 L5,12 M17,14 L13,12"/></g><path d="M1,4.2 L9.2,0.4 L12.3,2.2 L12.3,10.4 L4,14.6 L1,12.5 Z" fill="#4a90c8" fill-opacity="0.82"/><path d="M1,5 L9,9.5 L17,5 M9,9.5 L9,18.2" fill="none" stroke="#a0a0a0" stroke-opacity="0.7" stroke-width="0.9"/></svg>
<svg class="abs" style="left:431px;top:661px" width="18" height="19" viewBox="0 0 18 19"><g fill="none" stroke="#a8a8a8" stroke-width="0.9"><path d="M9,0.8 L17,5 L17,14 L9,18.2 L1,14 L1,5 Z M1,5 L9,9.5 L17,5 M9,9.5 L9,18.2 M9,0.8 V5 M1,14 L5,12 M17,14 L13,12"/></g><path d="M6,7.3 L15.3,3.2 L17,4.8 L17,13.5 L8.1,17.7 L6,16.1 Z" fill="#e85a5a" fill-opacity="0.82"/><path d="M1,5 L9,9.5 L17,5 M9,9.5 L9,18.2" fill="none" stroke="#a0a0a0" stroke-opacity="0.7" stroke-width="0.9"/></svg>
<svg class="abs" style="left:457px;top:661px" width="18" height="19" viewBox="0 0 18 19"><g fill="none" stroke="#a8a8a8" stroke-width="0.9"><path d="M9,0.8 L17,5 L17,14 L9,18.2 L1,14 L1,5 Z M1,5 L9,9.5 L17,5 M9,9.5 L9,18.2 M9,0.8 V5 M1,14 L5,12 M17,14 L13,12"/></g><path d="M1.7,5.8 L9.9,2.8 L16.1,4.2 L16.1,12.5 L7.8,16.6 L3.2,14.6 Z" fill="#f0cc30" fill-opacity="0.82"/><path d="M1,5 L9,9.5 L17,5 M9,9.5 L9,18.2" fill="none" stroke="#a0a0a0" stroke-opacity="0.7" stroke-width="0.9"/></svg>
<svg class="abs" style="left:483px;top:661px" width="18" height="19" viewBox="0 0 18 19"><g fill="none" stroke="#a8a8a8" stroke-width="0.9"><path d="M9,0.8 L17,5 L17,14 L9,18.2 L1,14 L1,5 Z M1,5 L9,9.5 L17,5 M9,9.5 L9,18.2 M9,0.8 V5 M1,14 L5,12 M17,14 L13,12"/></g><path d="M3.5,7.3 L11.8,2.2 L12.8,3.2 L12.8,12.5 L4.5,15.6 Z" fill="#e85a5a" fill-opacity="0.82"/><path d="M1,5 L9,9.5 L17,5 M9,9.5 L9,18.2" fill="none" stroke="#a0a0a0" stroke-opacity="0.7" stroke-width="0.9"/></svg>
<svg class="abs" style="left:509px;top:661px" width="18" height="19" viewBox="0 0 18 19"><g fill="none" stroke="#a8a8a8" stroke-width="0.9"><path d="M9,0.8 L17,5 L17,14 L9,18.2 L1,14 L1,5 Z M1,5 L9,9.5 L17,5 M9,9.5 L9,18.2 M9,0.8 V5 M1,14 L5,12 M17,14 L13,12"/></g><path d="M5.3,2.1 L13.8,6.4 L13.8,14.1 L5.3,9.8 Z" fill="#6aba8a" fill-opacity="0.82"/><path d="M1,5 L9,9.5 L17,5 M9,9.5 L9,18.2" fill="none" stroke="#a0a0a0" stroke-opacity="0.7" stroke-width="0.9"/></svg>
<svg class="abs" style="left:535px;top:661px" width="18" height="19" viewBox="0 0 18 19"><g fill="none" stroke="#a8a8a8" stroke-width="0.9"><path d="M9,0.8 L17,5 L17,14 L9,18.2 L1,14 L1,5 Z M1,5 L9,9.5 L17,5 M9,9.5 L9,18.2 M9,0.8 V5 M1,14 L5,12 M17,14 L13,12"/></g><path d="M1.1,9 L8.8,5.1 L16.9,9 L8.8,13.3 Z" fill="#4a90c8" fill-opacity="0.82"/><path d="M1,5 L9,9.5 L17,5 M9,9.5 L9,18.2" fill="none" stroke="#a0a0a0" stroke-opacity="0.7" stroke-width="0.9"/></svg>
<svg class="abs" style="left:562px;top:661px" width="16" height="18" viewBox="0 0 16 18"><path d="M4,8 L4,5.5 A4,4 0 0 1 12,5.5 L12,8" fill="none" stroke="#1e4b6e" stroke-width="1.8"/><rect x="2" y="8" width="12" height="9" rx="1.5" fill="#1e4b6e"/><rect x="7" y="11" width="2" height="3" fill="#fff"/></svg>
<svg class="abs" style="left:584.5px;top:661px" width="20" height="18" viewBox="0 0 20 18"><path d="M6,16 L10,9 L13,2 L18,2 L13,9 Z" fill="none" stroke="#1e4b6e" stroke-width="1.1"/><path d="M1,9 L7,9 M4,7 L7,9 L4,11 M19,9 L14,9" fill="none" stroke="#888" stroke-width="0.9"/></svg>
<svg class="abs" style="left:13px;top:692px" width="17" height="12" viewBox="0 0 17 12"><path d="M0.2,5.9 C3,1.4 6,0.8 8.1,0.8 C10.2,0.8 13.2,1.4 16,5.9 C13.2,10.4 10.2,11 8.1,11 C6,11 3,10.4 0.2,5.9 Z" fill="#1f5580"/><circle cx="8.1" cy="5.9" r="2.75" fill="none" stroke="#fff" stroke-width="1.2"/></svg>
<svg class="abs" style="left:53px;top:690px" width="17" height="17" viewBox="0 0 17 17"><rect x="0.6" y="0.6" width="15.4" height="15" fill="#fff" stroke="#a0a0a0" stroke-width="1.2"/><path d="M0.6,4.1 H16 M0.6,7.7 H16 M0.6,11.6 H6 M5.5,0.6 V15.6 M10.6,0.6 V8" stroke="#a0a0a0" stroke-width="1.2"/><rect x="6.2" y="8.3" width="10.5" height="8.7" fill="#fff"/><path d="M7,9.5 Q8.2,8.8 9.3,9.5 L9.3,12.5 L7,12.5 Z M14.1,9.5 Q15.2,8.8 16.2,9.5 L16.2,12.5 L14.1,12.5 Z" fill="#4a90c8"/><path d="M7,12.5 H9.3 M14.1,12.5 H16.2" stroke="#e8d040" stroke-width="1"/><path d="M12.2,8.6 L15.9,15.7 L8.7,15.7 Z" fill="#f59a30"/></svg>
<div class="t" style="left:73px;top:692px;font-size:12px;color:#222;"><i style="color:#217821">Drillholes:</i> WP_lith</div>
<svg class="abs" style="left:341px;top:691px" width="14" height="14" viewBox="0 0 14 14"><path d="M1.5,1.5 L12.5,12.5 M12.5,1.5 L1.5,12.5" stroke="#1e4b6e" stroke-width="1.3"/></svg>
<svg class="abs" style="left:376px;top:689px" width="18" height="18" viewBox="0 0 18 18"><rect x="1" y="1" width="4" height="9" rx="1" fill="#4a8ec8"/><rect x="1" y="10" width="4" height="3" fill="#e8cf3a"/><circle cx="3" cy="15" r="2" fill="#8ac8a0"/><rect x="7" y="1" width="4" height="8" rx="1" fill="#4a8ec8"/><rect x="7" y="9" width="4" height="3" fill="#e8cf3a"/><circle cx="9" cy="15" r="2" fill="#8ac8a0"/><text x="9.5" y="15" font-family="Liberation Sans" font-weight="bold" font-size="12" fill="#888">A</text></svg>
<div class="t" style="left:398px;top:692px;font-size:12px;color:#222;">Split_Dykes</div>
<div class="abs" style="left:497px;top:685px;width:113px;height:26px;background:#f3f3f3;border:1px solid #c4c4c4"></div>
<div class="t" style="left:520px;top:692px;font-size:12px;color:#222;">Edit Colours</div>
<svg class="abs" style="left:300px;top:690px" width="17" height="17" viewBox="0 0 17 17"><path d="M2,15 L3,11 L12,2 Q13.5,1 15,2.5 Q16,4 15,5 L6,14 Z M10.5,3.5 L13.5,6.5" fill="none" stroke="#1e4b6e" stroke-width="1.2" stroke-linejoin="round"/></svg>
<svg class="abs" style="left:473px;top:694px" width="11" height="7" viewBox="0 0 11 7"><path d="M1,1 L5.5,5.5 L10,1" fill="none" stroke="#999" stroke-width="1.1"/></svg>
<svg class="abs" style="left:632px;top:690px" width="80" height="16" viewBox="0 0 80 16"><rect x="1" y="5.5" width="70" height="6" rx="3" fill="#234d68"/><circle cx="71.5" cy="7.5" r="6.5" fill="#234d68"/></svg>
<div class="abs" style="left:727px;top:686px;width:24px;height:24px;background:#b3e3f8;border:1px solid #1ea0e6"></div>
<svg class="abs" style="left:729px;top:688px" width="20" height="20" viewBox="0 0 20 20"><rect x="1" y="5" width="12" height="10" fill="#fff"/><path d="M1,5 H13 M1,15 H13" stroke="#999" stroke-width="1"/><ellipse cx="11" cy="10" rx="3.5" ry="5" fill="#dcc0e8" stroke="#a050c0" stroke-width="1"/><ellipse cx="15" cy="10" rx="3.5" ry="5" fill="#dcc0e8" stroke="#a050c0" stroke-width="1"/></svg>
<div class="abs" style="left:779px;top:686px;width:24px;height:24px;background:#b3e3f8;border:1px solid #1ea0e6"></div>
<svg class="abs" style="left:781px;top:688px" width="20" height="20" viewBox="0 0 20 20"><path d="M5,2 V18 M10,2 V18 M15,2 V18" stroke="#999" stroke-width="1"/><rect x="3" y="5" width="4" height="7" rx="1" fill="#4a8ec8"/><rect x="8" y="8" width="4" height="5" rx="1" fill="#4a8ec8"/><rect x="13" y="4" width="4" height="10" rx="1" fill="#4a8ec8"/></svg>
<svg class="abs" style="left:808px;top:689px" width="19" height="19" viewBox="0 0 19 19"><text x="1.5" y="16" font-family="Liberation Sans" font-weight="bold" font-size="18" fill="#1e4b6e" stroke="#bbb" stroke-width="0.6">A</text></svg>
<svg class="abs" style="left:835px;top:689px" width="17" height="18" viewBox="0 0 17 18"><rect x="0.5" y="0.5" width="16" height="17" fill="#fff" stroke="#aaa"/><rect x="3" y="3" width="3" height="3" fill="#e03030"/><rect x="3" y="8" width="3" height="3" fill="#30a050"/><rect x="3" y="13" width="3" height="3" fill="#3070c0"/><path d="M7,3.5 H14 M7,5.5 H14 M7,8.5 H14 M7,10.5 H14 M7,13.5 H14 M7,15.5 H14" stroke="#666" stroke-width="0.9"/></svg>
<svg class="abs" style="left:13px;top:720px" width="17" height="12" viewBox="0 0 17 12"><path d="M0.2,5.9 C3,1.4 6,0.8 8.1,0.8 C10.2,0.8 13.2,1.4 16,5.9 C13.2,10.4 10.2,11 8.1,11 C6,11 3,10.4 0.2,5.9 Z" fill="#1f5580"/><circle cx="8.1" cy="5.9" r="2.75" fill="none" stroke="#fff" stroke-width="1.2"/></svg>
<svg class="abs" style="left:53px;top:718px" width="17" height="17" viewBox="0 0 17 17"><path d="M6.4,0.3 L16.2,5.6 L13.9,13.8 L2.3,15.9 L0,8.9 Z" fill="#68b48c"/><path d="M6.4,0.3 L8.2,7.1 L16.2,5.6 M8.2,7.1 L13.9,13.8 M8.2,7.1 L2.3,15.9 M8.2,7.1 L0,8.9 M0,8.9 L16.2,5.6" stroke="#90ccac" stroke-width="0.7" fill="none"/></svg>
<div class="t" style="left:73px;top:720px;font-size:12px;color:#222;"><i style="color:#217821">Wolf Pass GM:</i> Basement</div>
<svg class="abs" style="left:341px;top:719px" width="14" height="14" viewBox="0 0 14 14"><path d="M1.5,1.5 L12.5,12.5 M12.5,1.5 L1.5,12.5" stroke="#1e4b6e" stroke-width="1.3"/></svg>
<svg class="abs" style="left:376px;top:717px" width="19" height="19" viewBox="0 0 19 19"><path d="M2.5,9.9 L7.6,15 L12.7,9.9 Z" fill="#3a88c4"/><path d="M7.5,3.2 L13.6,9.7 L7.5,15.9 L1.6,9.7 Z M7.5,3.2 L5.5,1.2" fill="none" stroke="#8f8f8f" stroke-width="1.5" stroke-linejoin="round"/><path d="M15.2,12.6 Q17.2,15.2 16.4,16.3 Q15.2,17.5 14,16.3 Q13.2,15.2 15.2,12.6 Z" fill="#3a88c4"/></svg>
<div class="t" style="left:398px;top:720px;font-size:12px;color:#222;">Lithology</div>
<div class="abs" style="left:497px;top:717px;width:18px;height:18px;background:#a6ee55;border:1px solid #b8b8b8"></div>
<svg class="abs" style="left:473px;top:722px" width="11" height="7" viewBox="0 0 11 7"><path d="M1,1 L5.5,5.5 L10,1" fill="none" stroke="#999" stroke-width="1.1"/></svg>
<svg class="abs" style="left:632px;top:718px" width="80" height="16" viewBox="0 0 80 16"><rect x="1" y="5.5" width="70" height="6" rx="3" fill="#234d68"/><circle cx="71.5" cy="7.5" r="6.5" fill="#234d68"/></svg>
<div class="abs" style="left:727px;top:714px;width:24px;height:24px;background:#b3e3f8;border:1px solid #1ea0e6"></div>
<svg class="abs" style="left:730px;top:717px" width="18" height="18" viewBox="0 0 18 18"><path d="M3,2 L16,9 L3,16 Z" fill="#1e4b6e"/></svg>
<svg class="abs" style="left:755px;top:717px" width="20" height="18" viewBox="0 0 20 18"><path d="M5,2 L9,1 L9,17 L2,17 Z" fill="none" stroke="#4a7a5a" stroke-width="1"/><path d="M11,5 Q17,5 17,9.5 Q17,14 11,14 Z" fill="#8ac8a0"/><path d="M10,1 V17" stroke="#888" stroke-width="1"/></svg>
<svg class="abs" style="left:782px;top:717px" width="18" height="18" viewBox="0 0 18 18"><path d="M3,2 L16,9 L3,16 Z" fill="none" stroke="#1e4b6e" stroke-width="1.6" stroke-linejoin="round"/></svg>
<svg class="abs" style="left:835px;top:717px" width="17" height="18" viewBox="0 0 17 18"><rect x="0.5" y="0.5" width="16" height="17" fill="#fff" stroke="#aaa"/><rect x="3" y="3" width="3" height="3" fill="#e03030"/><rect x="3" y="8" width="3" height="3" fill="#30a050"/><rect x="3" y="13" width="3" height="3" fill="#3070c0"/><path d="M7,3.5 H14 M7,5.5 H14 M7,8.5 H14 M7,10.5 H14 M7,13.5 H14 M7,15.5 H14" stroke="#666" stroke-width="0.9"/></svg>
<svg class="abs" style="left:13px;top:748px" width="17" height="12" viewBox="0 0 17 12"><path d="M0.2,5.9 C3,1.4 6,0.8 8.1,0.8 C10.2,0.8 13.2,1.4 16,5.9 C13.2,10.4 10.2,11 8.1,11 C6,11 3,10.4 0.2,5.9 Z" fill="#1f5580"/><circle cx="8.1" cy="5.9" r="2.75" fill="none" stroke="#fff" stroke-width="1.2"/></svg>
<svg class="abs" style="left:53px;top:746px" width="17" height="17" viewBox="0 0 17 17"><path d="M6.4,0.3 L16.2,5.6 L13.9,13.8 L2.3,15.9 L0,8.9 Z" fill="#68b48c"/><path d="M6.4,0.3 L8.2,7.1 L16.2,5.6 M8.2,7.1 L13.9,13.8 M8.2,7.1 L2.3,15.9 M8.2,7.1 L0,8.9 M0,8.9 L16.2,5.6" stroke="#90ccac" stroke-width="0.7" fill="none"/></svg>
<div class="t" style="left:73px;top:748px;font-size:12px;color:#222;"><i style="color:#217821">Wolf Pass GM:</i> Dacite</div>
<svg class="abs" style="left:341px;top:747px" width="14" height="14" viewBox="0 0 14 14"><path d="M1.5,1.5 L12.5,12.5 M12.5,1.5 L1.5,12.5" stroke="#1e4b6e" stroke-width="1.3"/></svg>
<svg class="abs" style="left:376px;top:745px" width="19" height="19" viewBox="0 0 19 19"><path d="M2.5,9.9 L7.6,15 L12.7,9.9 Z" fill="#3a88c4"/><path d="M7.5,3.2 L13.6,9.7 L7.5,15.9 L1.6,9.7 Z M7.5,3.2 L5.5,1.2" fill="none" stroke="#8f8f8f" stroke-width="1.5" stroke-linejoin="round"/><path d="M15.2,12.6 Q17.2,15.2 16.4,16.3 Q15.2,17.5 14,16.3 Q13.2,15.2 15.2,12.6 Z" fill="#3a88c4"/></svg>
<div class="t" style="left:398px;top:748px;font-size:12px;color:#222;">Lithology</div>
<div class="abs" style="left:497px;top:745px;width:18px;height:18px;background:#f04aa0;border:1px solid #b8b8b8"></div>
<svg class="abs" style="left:473px;top:750px" width="11" height="7" viewBox="0 0 11 7"><path d="M1,1 L5.5,5.5 L10,1" fill="none" stroke="#999" stroke-width="1.1"/></svg>
<svg class="abs" style="left:632px;top:746px" width="80" height="16" viewBox="0 0 80 16"><rect x="1" y="5.5" width="70" height="6" rx="3" fill="#234d68"/><circle cx="71.5" cy="7.5" r="6.5" fill="#234d68"/></svg>
<div class="abs" style="left:727px;top:742px;width:24px;height:24px;background:#b3e3f8;border:1px solid #1ea0e6"></div>
<svg class="abs" style="left:730px;top:745px" width="18" height="18" viewBox="0 0 18 18"><path d="M3,2 L16,9 L3,16 Z" fill="#1e4b6e"/></svg>
<svg class="abs" style="left:755px;top:745px" width="20" height="18" viewBox="0 0 20 18"><path d="M5,2 L9,1 L9,17 L2,17 Z" fill="none" stroke="#4a7a5a" stroke-width="1"/><path d="M11,5 Q17,5 17,9.5 Q17,14 11,14 Z" fill="#8ac8a0"/><path d="M10,1 V17" stroke="#888" stroke-width="1"/></svg>
<svg class="abs" style="left:782px;top:745px" width="18" height="18" viewBox="0 0 18 18"><path d="M3,2 L16,9 L3,16 Z" fill="none" stroke="#1e4b6e" stroke-width="1.6" stroke-linejoin="round"/></svg>
<svg class="abs" style="left:835px;top:745px" width="17" height="18" viewBox="0 0 17 18"><rect x="0.5" y="0.5" width="16" height="17" fill="#fff" stroke="#aaa"/><rect x="3" y="3" width="3" height="3" fill="#e03030"/><rect x="3" y="8" width="3" height="3" fill="#30a050"/><rect x="3" y="13" width="3" height="3" fill="#3070c0"/><path d="M7,3.5 H14 M7,5.5 H14 M7,8.5 H14 M7,10.5 H14 M7,13.5 H14 M7,15.5 H14" stroke="#666" stroke-width="0.9"/></svg>
<svg class="abs" style="left:13px;top:776px" width="17" height="12" viewBox="0 0 17 12"><path d="M0.2,5.9 C3,1.4 6,0.8 8.1,0.8 C10.2,0.8 13.2,1.4 16,5.9 C13.2,10.4 10.2,11 8.1,11 C6,11 3,10.4 0.2,5.9 Z" fill="#1f5580"/><circle cx="8.1" cy="5.9" r="2.75" fill="none" stroke="#fff" stroke-width="1.2"/></svg>
<svg class="abs" style="left:53px;top:774px" width="17" height="17" viewBox="0 0 17 17"><path d="M6.4,0.3 L16.2,5.6 L13.9,13.8 L2.3,15.9 L0,8.9 Z" fill="#68b48c"/><path d="M6.4,0.3 L8.2,7.1 L16.2,5.6 M8.2,7.1 L13.9,13.8 M8.2,7.1 L2.3,15.9 M8.2,7.1 L0,8.9 M0,8.9 L16.2,5.6" stroke="#90ccac" stroke-width="0.7" fill="none"/></svg>
<div class="t" style="left:73px;top:776px;font-size:12px;color:#222;"><i style="color:#217821">Wolf Pass GM:</i> Early Diorite</div>
<svg class="abs" style="left:341px;top:775px" width="14" height="14" viewBox="0 0 14 14"><path d="M1.5,1.5 L12.5,12.5 M12.5,1.5 L1.5,12.5" stroke="#1e4b6e" stroke-width="1.3"/></svg>
<svg class="abs" style="left:376px;top:773px" width="19" height="19" viewBox="0 0 19 19"><path d="M2.5,9.9 L7.6,15 L12.7,9.9 Z" fill="#3a88c4"/><path d="M7.5,3.2 L13.6,9.7 L7.5,15.9 L1.6,9.7 Z M7.5,3.2 L5.5,1.2" fill="none" stroke="#8f8f8f" stroke-width="1.5" stroke-linejoin="round"/><path d="M15.2,12.6 Q17.2,15.2 16.4,16.3 Q15.2,17.5 14,16.3 Q13.2,15.2 15.2,12.6 Z" fill="#3a88c4"/></svg>
<div class="t" style="left:398px;top:776px;font-size:12px;color:#222;">Lithology</div>
<div class="abs" style="left:497px;top:773px;width:18px;height:18px;background:#7a2e8a;border:1px solid #b8b8b8"></div>
<svg class="abs" style="left:473px;top:778px" width="11" height="7" viewBox="0 0 11 7"><path d="M1,1 L5.5,5.5 L10,1" fill="none" stroke="#999" stroke-width="1.1"/></svg>
<svg class="abs" style="left:632px;top:774px" width="80" height="16" viewBox="0 0 80 16"><rect x="1" y="5.5" width="70" height="6" rx="3" fill="#234d68"/><circle cx="71.5" cy="7.5" r="6.5" fill="#234d68"/></svg>
<div class="abs" style="left:727px;top:770px;width:24px;height:24px;background:#b3e3f8;border:1px solid #1ea0e6"></div>
<svg class="abs" style="left:730px;top:773px" width="18" height="18" viewBox="0 0 18 18"><path d="M3,2 L16,9 L3,16 Z" fill="#1e4b6e"/></svg>
<svg class="abs" style="left:755px;top:773px" width="20" height="18" viewBox="0 0 20 18"><path d="M5,2 L9,1 L9,17 L2,17 Z" fill="none" stroke="#4a7a5a" stroke-width="1"/><path d="M11,5 Q17,5 17,9.5 Q17,14 11,14 Z" fill="#8ac8a0"/><path d="M10,1 V17" stroke="#888" stroke-width="1"/></svg>
<svg class="abs" style="left:782px;top:773px" width="18" height="18" viewBox="0 0 18 18"><path d="M3,2 L16,9 L3,16 Z" fill="none" stroke="#1e4b6e" stroke-width="1.6" stroke-linejoin="round"/></svg>
<svg class="abs" style="left:835px;top:773px" width="17" height="18" viewBox="0 0 17 18"><rect x="0.5" y="0.5" width="16" height="17" fill="#fff" stroke="#aaa"/><rect x="3" y="3" width="3" height="3" fill="#e03030"/><rect x="3" y="8" width="3" height="3" fill="#30a050"/><rect x="3" y="13" width="3" height="3" fill="#3070c0"/><path d="M7,3.5 H14 M7,5.5 H14 M7,8.5 H14 M7,10.5 H14 M7,13.5 H14 M7,15.5 H14" stroke="#666" stroke-width="0.9"/></svg>
<svg class="abs" style="left:13px;top:804px" width="17" height="12" viewBox="0 0 17 12"><path d="M0.2,5.9 C3,1.4 6,0.8 8.1,0.8 C10.2,0.8 13.2,1.4 16,5.9 C13.2,10.4 10.2,11 8.1,11 C6,11 3,10.4 0.2,5.9 Z" fill="#1f5580"/><circle cx="8.1" cy="5.9" r="2.75" fill="none" stroke="#fff" stroke-width="1.2"/></svg>
<svg class="abs" style="left:53px;top:802px" width="17" height="17" viewBox="0 0 17 17"><path d="M6.4,0.3 L16.2,5.6 L13.9,13.8 L2.3,15.9 L0,8.9 Z" fill="#68b48c"/><path d="M6.4,0.3 L8.2,7.1 L16.2,5.6 M8.2,7.1 L13.9,13.8 M8.2,7.1 L2.3,15.9 M8.2,7.1 L0,8.9 M0,8.9 L16.2,5.6" stroke="#90ccac" stroke-width="0.7" fill="none"/></svg>
<div class="t" style="left:73px;top:804px;font-size:12px;color:#222;"><i style="color:#217821">Wolf Pass GM:</i> Intermineral Diorite</div>
<svg class="abs" style="left:341px;top:803px" width="14" height="14" viewBox="0 0 14 14"><path d="M1.5,1.5 L12.5,12.5 M12.5,1.5 L1.5,12.5" stroke="#1e4b6e" stroke-width="1.3"/></svg>
<svg class="abs" style="left:376px;top:801px" width="19" height="19" viewBox="0 0 19 19"><path d="M2.5,9.9 L7.6,15 L12.7,9.9 Z" fill="#3a88c4"/><path d="M7.5,3.2 L13.6,9.7 L7.5,15.9 L1.6,9.7 Z M7.5,3.2 L5.5,1.2" fill="none" stroke="#8f8f8f" stroke-width="1.5" stroke-linejoin="round"/><path d="M15.2,12.6 Q17.2,15.2 16.4,16.3 Q15.2,17.5 14,16.3 Q13.2,15.2 15.2,12.6 Z" fill="#3a88c4"/></svg>
<div class="t" style="left:398px;top:804px;font-size:12px;color:#222;">Lithology</div>
<div class="abs" style="left:497px;top:801px;width:18px;height:18px;background:#2bcc9a;border:1px solid #b8b8b8"></div>
<svg class="abs" style="left:473px;top:806px" width="11" height="7" viewBox="0 0 11 7"><path d="M1,1 L5.5,5.5 L10,1" fill="none" stroke="#999" stroke-width="1.1"/></svg>
<svg class="abs" style="left:632px;top:802px" width="80" height="16" viewBox="0 0 80 16"><rect x="1" y="5.5" width="70" height="6" rx="3" fill="#234d68"/><circle cx="71.5" cy="7.5" r="6.5" fill="#234d68"/></svg>
<div class="abs" style="left:727px;top:798px;width:24px;height:24px;background:#b3e3f8;border:1px solid #1ea0e6"></div>
<svg class="abs" style="left:730px;top:801px" width="18" height="18" viewBox="0 0 18 18"><path d="M3,2 L16,9 L3,16 Z" fill="#1e4b6e"/></svg>
<svg class="abs" style="left:755px;top:801px" width="20" height="18" viewBox="0 0 20 18"><path d="M5,2 L9,1 L9,17 L2,17 Z" fill="none" stroke="#4a7a5a" stroke-width="1"/><path d="M11,5 Q17,5 17,9.5 Q17,14 11,14 Z" fill="#8ac8a0"/><path d="M10,1 V17" stroke="#888" stroke-width="1"/></svg>
<svg class="abs" style="left:782px;top:801px" width="18" height="18" viewBox="0 0 18 18"><path d="M3,2 L16,9 L3,16 Z" fill="none" stroke="#1e4b6e" stroke-width="1.6" stroke-linejoin="round"/></svg>
<svg class="abs" style="left:835px;top:801px" width="17" height="18" viewBox="0 0 17 18"><rect x="0.5" y="0.5" width="16" height="17" fill="#fff" stroke="#aaa"/><rect x="3" y="3" width="3" height="3" fill="#e03030"/><rect x="3" y="8" width="3" height="3" fill="#30a050"/><rect x="3" y="13" width="3" height="3" fill="#3070c0"/><path d="M7,3.5 H14 M7,5.5 H14 M7,8.5 H14 M7,10.5 H14 M7,13.5 H14 M7,15.5 H14" stroke="#666" stroke-width="0.9"/></svg>
<svg class="abs" style="left:13px;top:832px" width="17" height="12" viewBox="0 0 17 12"><path d="M0.5,5.5 Q8,-2.5 15.5,5.5 Q8,13.5 0.5,5.5 Z" fill="none" stroke="#aaa" stroke-width="1"/><circle cx="8" cy="5.5" r="2.3" fill="none" stroke="#aaa" stroke-width="1"/><path d="M3,11 L13,0" stroke="#aaa" stroke-width="1"/></svg>
<svg class="abs" style="left:53px;top:830px" width="17" height="17" viewBox="0 0 17 17"><path d="M6.4,0.3 L16.2,5.6 L13.9,13.8 L2.3,15.9 L0,8.9 Z" fill="#68b48c"/><path d="M6.4,0.3 L8.2,7.1 L16.2,5.6 M8.2,7.1 L13.9,13.8 M8.2,7.1 L2.3,15.9 M8.2,7.1 L0,8.9 M0,8.9 L16.2,5.6" stroke="#90ccac" stroke-width="0.7" fill="none"/></svg>
<div class="t" style="left:73px;top:832px;font-size:12px;color:#222;"><i style="color:#217821">Wolf Pass GM:</i> Recent</div>
<svg class="abs" style="left:341px;top:831px" width="14" height="14" viewBox="0 0 14 14"><path d="M1.5,1.5 L12.5,12.5 M12.5,1.5 L1.5,12.5" stroke="#1e4b6e" stroke-width="1.3"/></svg>
<svg class="abs" style="left:376px;top:829px" width="19" height="19" viewBox="0 0 19 19"><path d="M2.5,9.9 L7.6,15 L12.7,9.9 Z" fill="#3a88c4"/><path d="M7.5,3.2 L13.6,9.7 L7.5,15.9 L1.6,9.7 Z M7.5,3.2 L5.5,1.2" fill="none" stroke="#8f8f8f" stroke-width="1.5" stroke-linejoin="round"/><path d="M15.2,12.6 Q17.2,15.2 16.4,16.3 Q15.2,17.5 14,16.3 Q13.2,15.2 15.2,12.6 Z" fill="#3a88c4"/></svg>
<div class="t" style="left:398px;top:832px;font-size:12px;color:#222;">Lithology</div>
<div class="abs" style="left:497px;top:829px;width:18px;height:18px;background:#6e8894;border:1px solid #b8b8b8"></div>
<svg class="abs" style="left:473px;top:834px" width="11" height="7" viewBox="0 0 11 7"><path d="M1,1 L5.5,5.5 L10,1" fill="none" stroke="#999" stroke-width="1.1"/></svg>
<svg class="abs" style="left:632px;top:830px" width="80" height="16" viewBox="0 0 80 16"><rect x="1" y="5.5" width="70" height="6" rx="3" fill="#234d68"/><circle cx="71.5" cy="7.5" r="6.5" fill="#234d68"/></svg>
<div class="abs" style="left:727px;top:826px;width:24px;height:24px;background:#b3e3f8;border:1px solid #1ea0e6"></div>
<svg class="abs" style="left:730px;top:829px" width="18" height="18" viewBox="0 0 18 18"><path d="M3,2 L16,9 L3,16 Z" fill="#1e4b6e"/></svg>
<svg class="abs" style="left:755px;top:829px" width="20" height="18" viewBox="0 0 20 18"><path d="M5,2 L9,1 L9,17 L2,17 Z" fill="none" stroke="#4a7a5a" stroke-width="1"/><path d="M11,5 Q17,5 17,9.5 Q17,14 11,14 Z" fill="#8ac8a0"/><path d="M10,1 V17" stroke="#888" stroke-width="1"/></svg>
<svg class="abs" style="left:782px;top:829px" width="18" height="18" viewBox="0 0 18 18"><path d="M3,2 L16,9 L3,16 Z" fill="none" stroke="#1e4b6e" stroke-width="1.6" stroke-linejoin="round"/></svg>
<svg class="abs" style="left:835px;top:829px" width="17" height="18" viewBox="0 0 17 18"><rect x="0.5" y="0.5" width="16" height="17" fill="#fff" stroke="#aaa"/><rect x="3" y="3" width="3" height="3" fill="#e03030"/><rect x="3" y="8" width="3" height="3" fill="#30a050"/><rect x="3" y="13" width="3" height="3" fill="#3070c0"/><path d="M7,3.5 H14 M7,5.5 H14 M7,8.5 H14 M7,10.5 H14 M7,13.5 H14 M7,15.5 H14" stroke="#666" stroke-width="0.9"/></svg>
<div class="abs" style="left:250px;top:721px;width:78px;height:78px;border-radius:50%;background:#f07027"></div>
<div class="t" style="left:250px;top:731px;width:78px;text-align:center;font-size:56px;color:#fff">A</div>
<svg class="abs" style="left:609px;top:650px" width="22" height="5" viewBox="0 0 22 5"><path d="M0,1.5 H21 M0,3.5 H21" stroke="#555" stroke-width="1.2" stroke-dasharray="1.2,0.8"/></svg>
<svg class="abs" style="left:865px;top:756px" width="5" height="22" viewBox="0 0 5 22"><path d="M1.5,0 V21 M3.5,0 V21" stroke="#555" stroke-width="1.2" stroke-dasharray="1.2,0.8"/></svg>
<div class="abs" style="left:869px;top:655px;width:370px;height:223px;background:#f9f9f9;border:1px solid #b4b4b4"></div>
<svg class="abs" style="left:884px;top:662px" width="20" height="19" viewBox="0 0 20 19"><path d="M2,17 L8,9 L11,2 L19,2 L13,10 Z M8,9 L13,10" fill="none" stroke="#4a7a9a" stroke-width="1.2" stroke-linejoin="round"/></svg>
<div class="t" style="left:905px;top:664px;font-size:12px;color:#222;"><b>Slicer</b></div>
<div class="t" style="left:884px;top:692px;font-size:12px;color:#222;">Slice width:</div>
<div class="abs" style="left:953px;top:686px;width:247px;height:23px;background:#fff;border:1px solid #c4c4c4"></div>
<div class="t" style="left:962px;top:692px;font-size:12px;color:#222;">80.00</div>
<div class="t" style="left:884px;top:724px;font-size:12px;color:#222;">Step size:</div>
<div class="abs" style="left:953px;top:718px;width:247px;height:23px;background:#fff;border:1px solid #c4c4c4"></div>
<div class="t" style="left:962px;top:724px;font-size:12px;color:#222;">30.00</div>
<div class="t" style="left:884px;top:756px;font-size:12px;color:#222;">Dip:</div>
<div class="abs" style="left:953px;top:750px;width:247px;height:23px;background:#fff;border:1px solid #c4c4c4"></div>
<div class="t" style="left:962px;top:756px;font-size:12px;color:#222;">90.0</div>
<svg class="abs" style="left:1185px;top:754px" width="10" height="16" viewBox="0 0 10 16"><path d="M1.5,5 L5,1.5 L8.5,5 M1.5,11 L5,14.5 L8.5,11" fill="none" stroke="#bbb" stroke-width="1"/></svg>
<div class="t" style="left:884px;top:788px;font-size:12px;color:#222;">Dip az.:</div>
<div class="abs" style="left:953px;top:782px;width:247px;height:23px;background:#fff;border:1px solid #c4c4c4"></div>
<div class="t" style="left:962px;top:788px;font-size:12px;color:#222;">0.16</div>
<svg class="abs" style="left:1185px;top:786px" width="10" height="16" viewBox="0 0 10 16"><path d="M1.5,5 L5,1.5 L8.5,5 M1.5,11 L5,14.5 L8.5,11" fill="none" stroke="#999" stroke-width="1"/></svg>
<div class="abs" style="left:884px;top:822px;width:316px;height:1px;background:#8a8a8a"></div>
<div class="abs" style="left:884px;top:841px;width:316px;height:24px;background:#f3f3f3;border:1px solid #c4c4c4"></div>
<div class="t" style="left:997px;top:847px;font-size:12px;color:#222;">Set location to</div>
<svg class="abs" style="left:1182px;top:848px" width="12" height="8" viewBox="0 0 12 8"><path d="M1,1 L6,6 L11,1" fill="none" stroke="#999" stroke-width="1.1"/></svg>
<div class="abs" style="left:1208px;top:686px;width:16px;height:185px;background:#fff;border:1px solid #e0e0e0"></div>
<div class="abs" style="left:1211px;top:689px;width:10px;height:107px;background:#999;border-radius:5px"></div>
<div class="abs" style="left:1121px;top:673px;width:78px;height:78px;border-radius:50%;background:#f07027"></div>
<div class="t" style="left:1121px;top:683px;width:78px;text-align:center;font-size:56px;color:#fff">B</div></body></html>
